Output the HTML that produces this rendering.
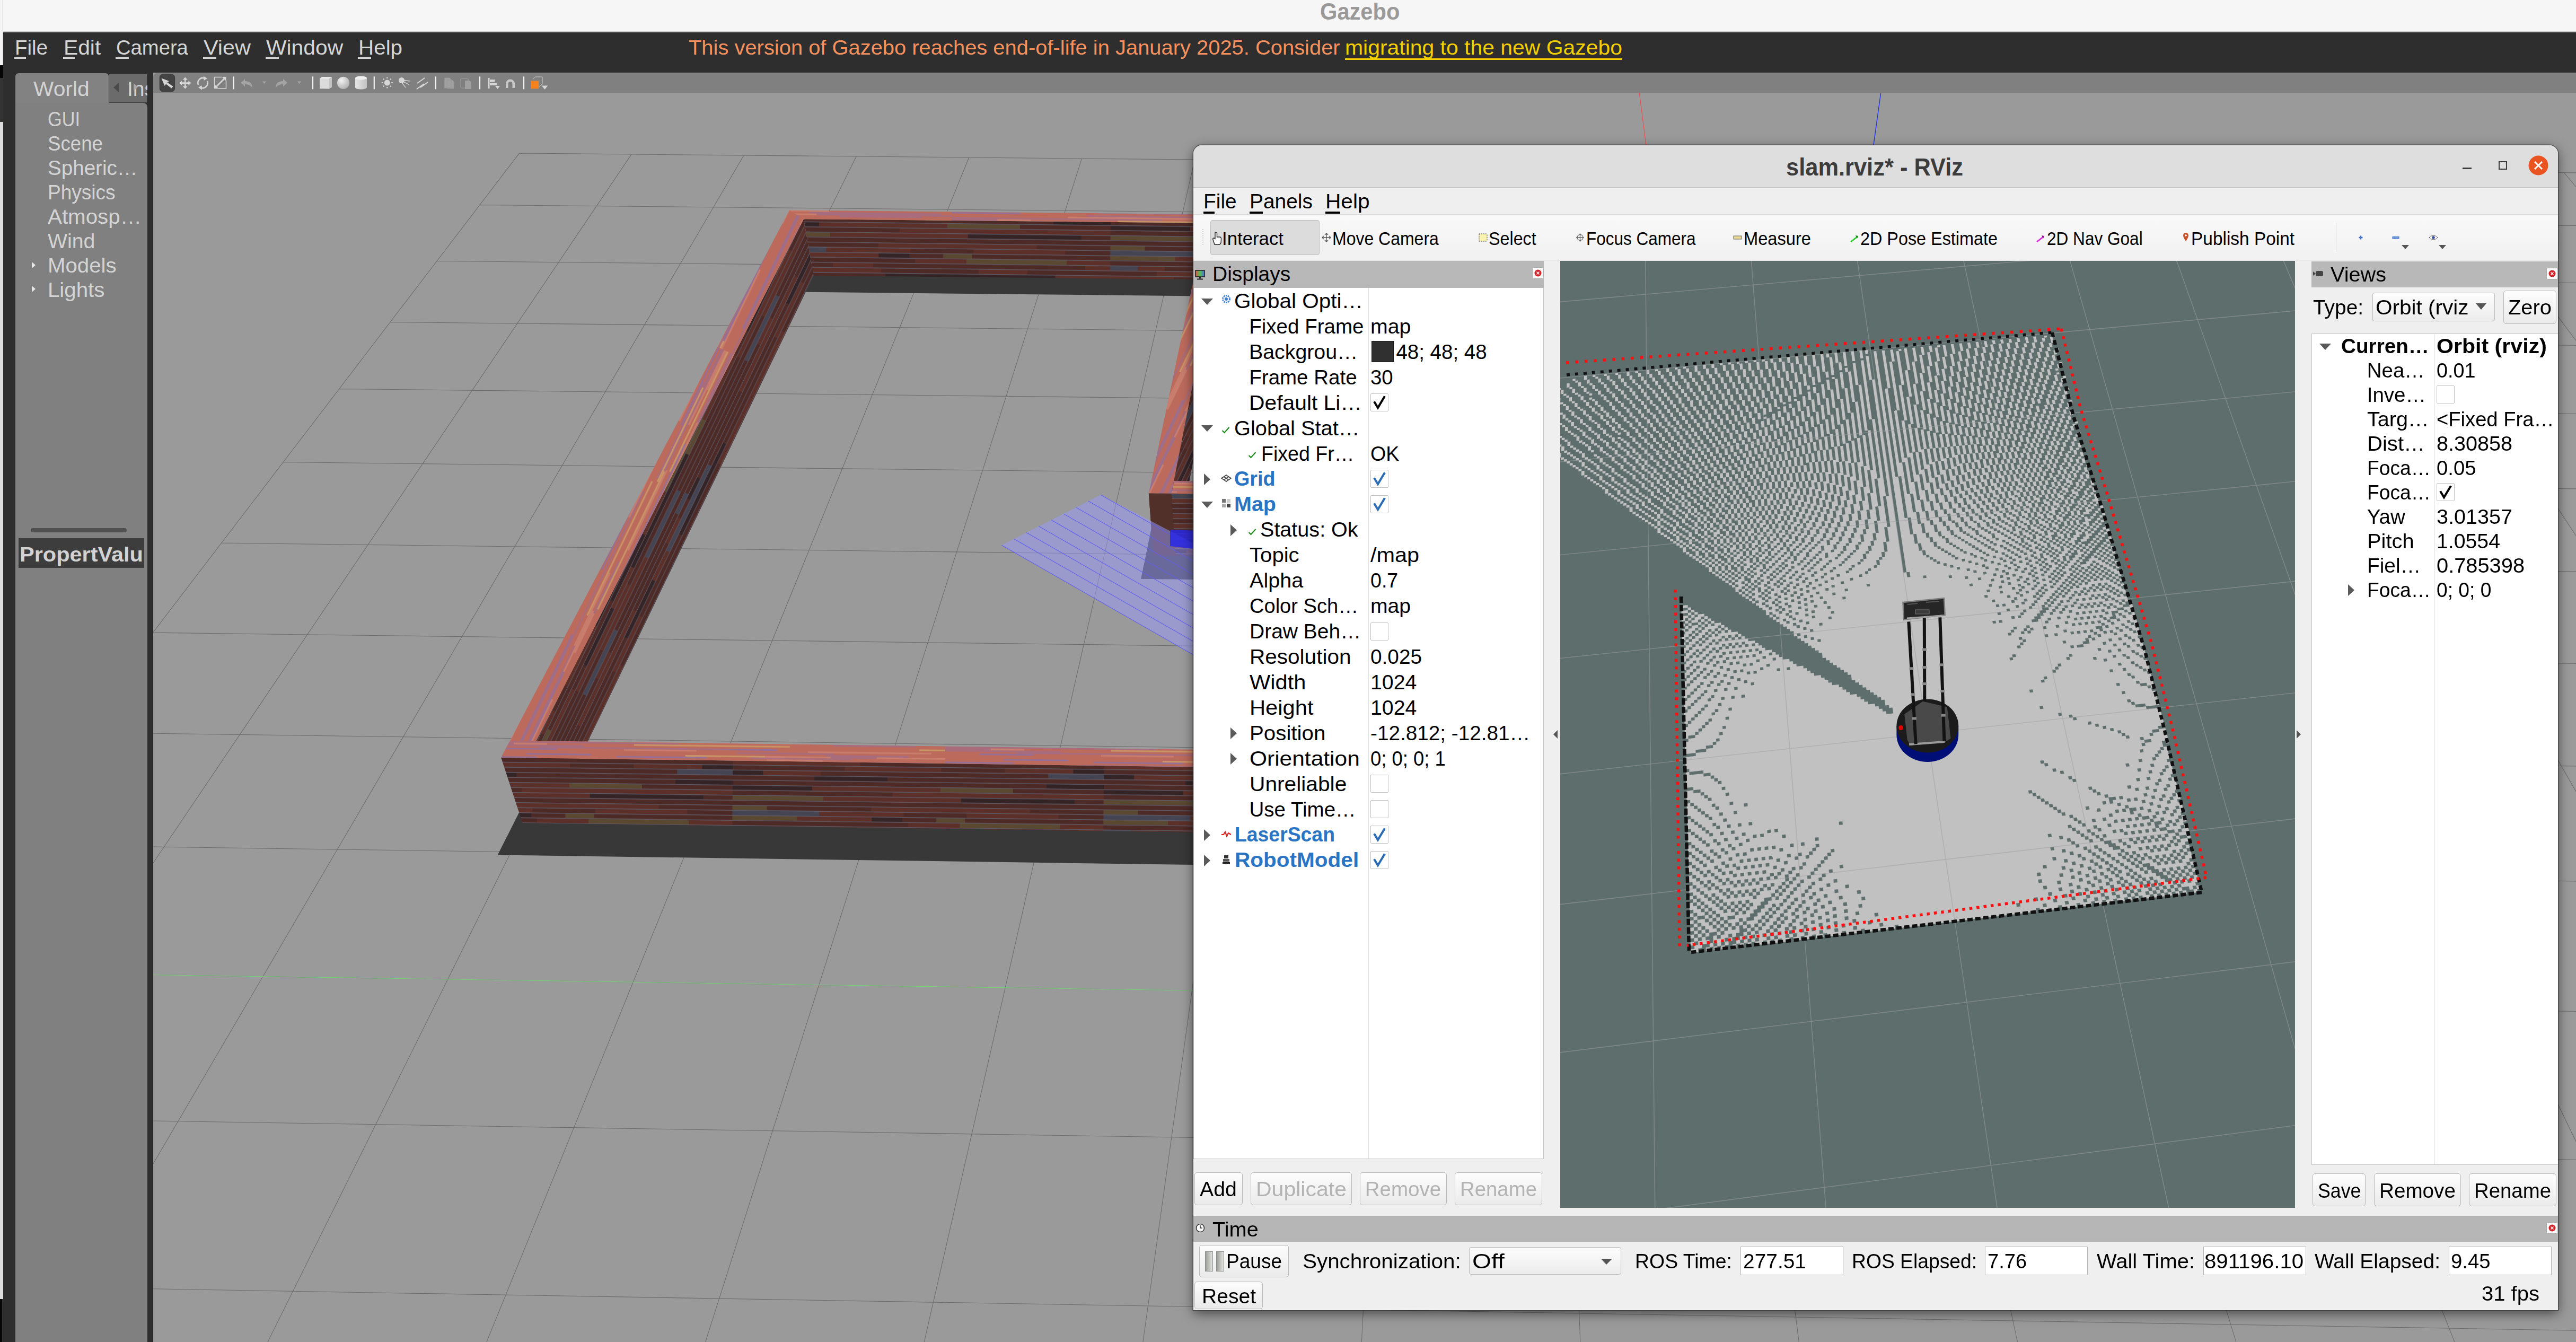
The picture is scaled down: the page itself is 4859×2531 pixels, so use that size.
<!DOCTYPE html>
<html><head><meta charset="utf-8"><title>Gazebo</title>
<style>
html,body{margin:0;padding:0;width:4859px;height:2531px;overflow:hidden;background:#9a9a9a;}
body{position:relative;font-family:"Liberation Sans",sans-serif;}
.r{position:absolute;}
.t{position:absolute;white-space:nowrap;transform-origin:0 0;}
svg.r{overflow:visible;}
</style></head><body>
<div class="r" style="left:0.0px;top:0.0px;width:4859.0px;height:59.0px;background:#f6f6f6;"></div><div class="r" style="left:0.0px;top:59.0px;width:4859.0px;height:2.0px;background:#c9c9c9;"></div><div class="t" style="left:2489.9px;top:-0.1px;font-size:44.0px;line-height:44.0px;color:#999999;font-weight:bold;transform:scaleX(0.9462);">Gazebo</div><div class="r" style="left:0.0px;top:0.0px;width:5.0px;height:123.0px;background:#f4f4f4;"></div><div class="r" style="left:5.0px;top:0.0px;width:1.0px;height:123.0px;background:#bdbdbd;"></div><div class="r" style="left:0.0px;top:123.0px;width:6.0px;height:24.0px;background:#050505;"></div><div class="r" style="left:0.0px;top:147.0px;width:6.0px;height:83.0px;background:#343432;"></div><div class="r" style="left:0.0px;top:230.0px;width:6.0px;height:2301.0px;background:#dcdcdc;"></div><div class="r" style="left:0.0px;top:2450.0px;width:5.0px;height:81.0px;background:#060606;"></div><div class="r" style="left:6.0px;top:61.0px;width:4853.0px;height:76.0px;background:#2e2e2e;"></div><div class="r" style="left:6.0px;top:137.0px;width:283.0px;height:2394.0px;background:#2e2e2e;"></div><div class="t" style="left:28.0px;top:69.5px;font-size:39.0px;line-height:39.0px;color:#d6d6d6;transform:scaleX(0.9874);">File</div><div class="r" style="left:27.0px;top:108.0px;width:22.0px;height:3.0px;background:#d6d6d6;"></div><div class="t" style="left:119.7px;top:69.5px;font-size:39.0px;line-height:39.0px;color:#d6d6d6;transform:scaleX(1.0450);">Edit</div><div class="r" style="left:118.7px;top:108.0px;width:22.0px;height:3.0px;background:#d6d6d6;"></div><div class="t" style="left:219.0px;top:69.5px;font-size:39.0px;line-height:39.0px;color:#d6d6d6;transform:scaleX(0.9795);">Camera</div><div class="r" style="left:218.0px;top:108.0px;width:25.0px;height:3.0px;background:#d6d6d6;"></div><div class="t" style="left:384.0px;top:69.5px;font-size:39.0px;line-height:39.0px;color:#d6d6d6;transform:scaleX(1.0614);">View</div><div class="r" style="left:383.0px;top:108.0px;width:25.0px;height:3.0px;background:#d6d6d6;"></div><div class="t" style="left:501.6px;top:69.5px;font-size:39.0px;line-height:39.0px;color:#d6d6d6;transform:scaleX(1.0472);">Window</div><div class="r" style="left:500.6px;top:108.0px;width:25.0px;height:3.0px;background:#d6d6d6;"></div><div class="t" style="left:676.0px;top:69.5px;font-size:39.0px;line-height:39.0px;color:#d6d6d6;transform:scaleX(1.0356);">Help</div><div class="r" style="left:675.0px;top:108.0px;width:25.0px;height:3.0px;background:#d6d6d6;"></div><div class="t" style="left:1299.0px;top:70.0px;font-size:39.0px;line-height:39.0px;color:#f7925f;transform:scaleX(1.0230);">This version of Gazebo reaches end-of-life in January 2025. Consider</div><div class="t" style="left:2537.0px;top:70.0px;font-size:39.0px;line-height:39.0px;color:#f5d000;transform:scaleX(1.0489);">migrating to the new Gazebo</div><div class="r" style="left:2537.0px;top:110.0px;width:523.0px;height:3.0px;background:#f5d000;"></div><div class="r" style="left:29px;top:137.6px;width:176px;height:60px;background:#828282;border-radius:6px 6px 0 0;"></div><div class="r" style="left:205.0px;top:139.4px;width:73.0px;height:55.1px;background:#6b6b6b;border:1px solid #3a3a3a;box-sizing:border-box;"></div><div class="r" style="left:29px;top:194px;width:249px;height:2337px;background:#808080;border-radius:0 8px 0 0;"></div><div class="t" style="left:63.3px;top:148.0px;font-size:39.0px;line-height:39.0px;color:#d4d4d4;transform:scaleX(1.0444);">World</div><svg class="r" style="left:212px;top:155px" width="14" height="20"><path d="M12 1 L2 10 L12 19 Z" fill="#4a4a4a"/></svg><div class="t" style="left:240.0px;top:148.0px;font-size:39.0px;line-height:39.0px;color:#d4d4d4;">Ins</div><svg class="r" style="left:251px;top:156px" width="10" height="16"><path d="M1 1 L9 8 L1 15 Z" fill="#a8a8a8"/></svg><div class="r" style="left:278.0px;top:137.0px;width:11.0px;height:2394.0px;background:#2e2e2e;"></div><div class="r" style="left:287.5px;top:175.0px;width:1.5px;height:2356.0px;background:#0c0c0c;"></div><div class="t" style="left:89.5px;top:204.7px;font-size:39.0px;line-height:39.0px;color:#d4d4d4;transform:scaleX(0.8787);">GUI</div><div class="t" style="left:89.5px;top:251.0px;font-size:39.0px;line-height:39.0px;color:#d4d4d4;transform:scaleX(0.9406);">Scene</div><div class="t" style="left:89.5px;top:297.0px;font-size:39.0px;line-height:39.0px;color:#d4d4d4;transform:scaleX(0.9894);">Spheric…</div><div class="t" style="left:89.5px;top:343.4px;font-size:39.0px;line-height:39.0px;color:#d4d4d4;transform:scaleX(0.9497);">Physics</div><div class="t" style="left:89.5px;top:389.0px;font-size:39.0px;line-height:39.0px;color:#d4d4d4;transform:scaleX(1.0338);">Atmosp…</div><div class="t" style="left:89.5px;top:435.3px;font-size:39.0px;line-height:39.0px;color:#d4d4d4;transform:scaleX(1.0065);">Wind</div><div class="t" style="left:89.5px;top:480.6px;font-size:39.0px;line-height:39.0px;color:#d4d4d4;transform:scaleX(1.0312);">Models</div><div class="t" style="left:89.5px;top:526.8px;font-size:39.0px;line-height:39.0px;color:#d4d4d4;transform:scaleX(1.0314);">Lights</div><svg class="r" style="left:59px;top:493px" width="9" height="14"><path d="M1 1 L8 7 L1 13 Z" fill="#e8e8e8"/></svg><svg class="r" style="left:59px;top:538px" width="9" height="14"><path d="M1 1 L8 7 L1 13 Z" fill="#e8e8e8"/></svg><div class="r" style="left:58px;top:996px;width:181px;height:8px;background:#505050;border-radius:4px;"></div><div class="r" style="left:35.0px;top:1015.0px;width:237.0px;height:56.0px;background:#3d3d3d;"></div><div class="t" style="left:37.0px;top:1026.0px;font-size:39.0px;line-height:39.0px;color:#d2d2d2;font-weight:bold;transform:scaleX(1.0640);">PropertValu</div><div class="r" style="left:289px;top:137.6px;width:4570px;height:37px;background:#808080;border-radius:8px 0 0 0;border-bottom:1.5px solid #262626;"></div>
<svg class="r" style="left:0;top:0" width="4859" height="2531" viewBox="0 0 4859 2531"><defs><clipPath id="gv"><rect x="289" y="175" width="4570" height="2356"/></clipPath><pattern id="brickH" patternUnits="userSpaceOnUse" width="700" height="152.00" patternTransform="rotate(0.70)"><rect width="700" height="152.00" fill="#4e2a26"/><rect x="0" y="0.00" width="122" height="9.50" fill="#5a4830"/><rect x="122" y="0.00" width="141" height="9.50" fill="#5c3028"/><rect x="263" y="0.00" width="58" height="9.50" fill="#352426"/><rect x="321" y="0.00" width="64" height="9.50" fill="#4e2a26"/><rect x="385" y="0.00" width="54" height="9.50" fill="#5a4830"/><rect x="439" y="0.00" width="94" height="9.50" fill="#4e2a26"/><rect x="533" y="0.00" width="151" height="9.50" fill="#4e2a26"/><rect x="684" y="0.00" width="16" height="9.50" fill="#4e2a26"/><rect x="0" y="0.00" width="700" height="1.40" fill="#5e5a66"/><rect x="0" y="9.50" width="148" height="9.50" fill="#4e2a26"/><rect x="148" y="9.50" width="184" height="9.50" fill="#4e2a26"/><rect x="332" y="9.50" width="97" height="9.50" fill="#5c3028"/><rect x="429" y="9.50" width="189" height="9.50" fill="#5a4830"/><rect x="618" y="9.50" width="82" height="9.50" fill="#5c3028"/><rect x="0" y="9.50" width="700" height="1.40" fill="#5e5a66"/><rect x="0" y="19.00" width="52" height="9.50" fill="#444452"/><rect x="52" y="19.00" width="51" height="9.50" fill="#5c3028"/><rect x="103" y="19.00" width="74" height="9.50" fill="#4e2a26"/><rect x="177" y="19.00" width="76" height="9.50" fill="#5c3028"/><rect x="253" y="19.00" width="186" height="9.50" fill="#4e2a26"/><rect x="439" y="19.00" width="214" height="9.50" fill="#4e2a26"/><rect x="653" y="19.00" width="47" height="9.50" fill="#5c3028"/><rect x="0" y="19.00" width="700" height="1.40" fill="#5e5a66"/><rect x="0" y="28.50" width="88" height="9.50" fill="#4e2a26"/><rect x="88" y="28.50" width="180" height="9.50" fill="#5c3028"/><rect x="268" y="28.50" width="184" height="9.50" fill="#4e2a26"/><rect x="452" y="28.50" width="92" height="9.50" fill="#5c3028"/><rect x="544" y="28.50" width="156" height="9.50" fill="#4e2a26"/><rect x="0" y="28.50" width="700" height="1.40" fill="#5e5a66"/><rect x="0" y="38.00" width="120" height="9.50" fill="#5c3028"/><rect x="120" y="38.00" width="156" height="9.50" fill="#4e2a26"/><rect x="276" y="38.00" width="103" height="9.50" fill="#352426"/><rect x="379" y="38.00" width="218" height="9.50" fill="#352426"/><rect x="597" y="38.00" width="60" height="9.50" fill="#5c3028"/><rect x="657" y="38.00" width="43" height="9.50" fill="#5c3028"/><rect x="0" y="38.00" width="700" height="1.40" fill="#5e5a66"/><rect x="0" y="47.50" width="127" height="9.50" fill="#5c3028"/><rect x="127" y="47.50" width="113" height="9.50" fill="#5c3028"/><rect x="240" y="47.50" width="58" height="9.50" fill="#4e2a26"/><rect x="298" y="47.50" width="147" height="9.50" fill="#4e2a26"/><rect x="445" y="47.50" width="127" height="9.50" fill="#4e2a26"/><rect x="572" y="47.50" width="128" height="9.50" fill="#4e2a26"/><rect x="0" y="47.50" width="700" height="1.40" fill="#5e5a66"/><rect x="0" y="57.00" width="211" height="9.50" fill="#4e2a26"/><rect x="211" y="57.00" width="182" height="9.50" fill="#5c3028"/><rect x="393" y="57.00" width="120" height="9.50" fill="#4e2a26"/><rect x="513" y="57.00" width="129" height="9.50" fill="#5c3028"/><rect x="642" y="57.00" width="58" height="9.50" fill="#352426"/><rect x="0" y="57.00" width="700" height="1.40" fill="#5e5a66"/><rect x="0" y="66.50" width="57" height="9.50" fill="#352426"/><rect x="57" y="66.50" width="109" height="9.50" fill="#5c3028"/><rect x="166" y="66.50" width="210" height="9.50" fill="#4e2a26"/><rect x="376" y="66.50" width="219" height="9.50" fill="#4e2a26"/><rect x="595" y="66.50" width="105" height="9.50" fill="#444452"/><rect x="0" y="66.50" width="700" height="1.40" fill="#5e5a66"/><rect x="0" y="76.00" width="154" height="9.50" fill="#4e2a26"/><rect x="154" y="76.00" width="138" height="9.50" fill="#352426"/><rect x="292" y="76.00" width="128" height="9.50" fill="#4e2a26"/><rect x="420" y="76.00" width="158" height="9.50" fill="#4e2a26"/><rect x="578" y="76.00" width="122" height="9.50" fill="#4e2a26"/><rect x="0" y="76.00" width="700" height="1.40" fill="#5e5a66"/><rect x="0" y="85.50" width="55" height="9.50" fill="#4e2a26"/><rect x="55" y="85.50" width="113" height="9.50" fill="#4e2a26"/><rect x="168" y="85.50" width="103" height="9.50" fill="#4e2a26"/><rect x="271" y="85.50" width="167" height="9.50" fill="#4e2a26"/><rect x="438" y="85.50" width="154" height="9.50" fill="#4e2a26"/><rect x="592" y="85.50" width="108" height="9.50" fill="#352426"/><rect x="0" y="85.50" width="700" height="1.40" fill="#5e5a66"/><rect x="0" y="95.00" width="150" height="9.50" fill="#352426"/><rect x="150" y="95.00" width="111" height="9.50" fill="#5c3028"/><rect x="261" y="95.00" width="131" height="9.50" fill="#5c3028"/><rect x="392" y="95.00" width="137" height="9.50" fill="#5a4830"/><rect x="529" y="95.00" width="78" height="9.50" fill="#4e2a26"/><rect x="607" y="95.00" width="78" height="9.50" fill="#4e2a26"/><rect x="685" y="95.00" width="15" height="9.50" fill="#4e2a26"/><rect x="0" y="95.00" width="700" height="1.40" fill="#5e5a66"/><rect x="0" y="104.50" width="190" height="9.50" fill="#4e2a26"/><rect x="190" y="104.50" width="112" height="9.50" fill="#4e2a26"/><rect x="302" y="104.50" width="147" height="9.50" fill="#5c3028"/><rect x="449" y="104.50" width="196" height="9.50" fill="#5c3028"/><rect x="645" y="104.50" width="55" height="9.50" fill="#5c3028"/><rect x="0" y="104.50" width="700" height="1.40" fill="#5e5a66"/><rect x="0" y="114.00" width="171" height="9.50" fill="#5a4830"/><rect x="171" y="114.00" width="207" height="9.50" fill="#5c3028"/><rect x="378" y="114.00" width="53" height="9.50" fill="#5c3028"/><rect x="431" y="114.00" width="214" height="9.50" fill="#352426"/><rect x="645" y="114.00" width="55" height="9.50" fill="#4e2a26"/><rect x="0" y="114.00" width="700" height="1.40" fill="#5e5a66"/><rect x="0" y="123.50" width="140" height="9.50" fill="#4e2a26"/><rect x="140" y="123.50" width="202" height="9.50" fill="#4e2a26"/><rect x="342" y="123.50" width="88" height="9.50" fill="#4e2a26"/><rect x="430" y="123.50" width="93" height="9.50" fill="#4e2a26"/><rect x="523" y="123.50" width="68" height="9.50" fill="#4e2a26"/><rect x="591" y="123.50" width="53" height="9.50" fill="#4e2a26"/><rect x="644" y="123.50" width="56" height="9.50" fill="#4e2a26"/><rect x="0" y="123.50" width="700" height="1.40" fill="#5e5a66"/><rect x="0" y="133.00" width="65" height="9.50" fill="#5a4830"/><rect x="65" y="133.00" width="197" height="9.50" fill="#4e2a26"/><rect x="262" y="133.00" width="93" height="9.50" fill="#5c3028"/><rect x="355" y="133.00" width="78" height="9.50" fill="#5c3028"/><rect x="433" y="133.00" width="128" height="9.50" fill="#5c3028"/><rect x="561" y="133.00" width="139" height="9.50" fill="#4e2a26"/><rect x="0" y="133.00" width="700" height="1.40" fill="#5e5a66"/><rect x="0" y="142.50" width="164" height="9.50" fill="#444452"/><rect x="164" y="142.50" width="159" height="9.50" fill="#5c3028"/><rect x="323" y="142.50" width="119" height="9.50" fill="#4e2a26"/><rect x="442" y="142.50" width="66" height="9.50" fill="#5c3028"/><rect x="508" y="142.50" width="107" height="9.50" fill="#5c3028"/><rect x="615" y="142.50" width="85" height="9.50" fill="#4e2a26"/><rect x="0" y="142.50" width="700" height="1.40" fill="#5e5a66"/></pattern><pattern id="brickL" patternUnits="userSpaceOnUse" width="700" height="124.80" patternTransform="rotate(115.80)"><rect width="700" height="124.80" fill="#4e2a26"/><rect x="0" y="0.00" width="155" height="7.80" fill="#352426"/><rect x="155" y="0.00" width="159" height="7.80" fill="#4e2a26"/><rect x="314" y="0.00" width="190" height="7.80" fill="#4e2a26"/><rect x="504" y="0.00" width="171" height="7.80" fill="#5c3028"/><rect x="675" y="0.00" width="25" height="7.80" fill="#352426"/><rect x="0" y="0.00" width="700" height="1.20" fill="#585462"/><rect x="0" y="7.80" width="64" height="7.80" fill="#4e2a26"/><rect x="64" y="7.80" width="76" height="7.80" fill="#4e2a26"/><rect x="140" y="7.80" width="217" height="7.80" fill="#5c3028"/><rect x="357" y="7.80" width="192" height="7.80" fill="#444452"/><rect x="549" y="7.80" width="151" height="7.80" fill="#5c3028"/><rect x="0" y="7.80" width="700" height="1.20" fill="#585462"/><rect x="0" y="15.60" width="197" height="7.80" fill="#5c3028"/><rect x="197" y="15.60" width="199" height="7.80" fill="#4e2a26"/><rect x="396" y="15.60" width="175" height="7.80" fill="#4e2a26"/><rect x="571" y="15.60" width="49" height="7.80" fill="#4e2a26"/><rect x="620" y="15.60" width="80" height="7.80" fill="#5c3028"/><rect x="0" y="15.60" width="700" height="1.20" fill="#585462"/><rect x="0" y="23.40" width="158" height="7.80" fill="#4e2a26"/><rect x="158" y="23.40" width="191" height="7.80" fill="#352426"/><rect x="349" y="23.40" width="172" height="7.80" fill="#4e2a26"/><rect x="521" y="23.40" width="115" height="7.80" fill="#5c3028"/><rect x="636" y="23.40" width="64" height="7.80" fill="#4e2a26"/><rect x="0" y="23.40" width="700" height="1.20" fill="#585462"/><rect x="0" y="31.20" width="207" height="7.80" fill="#4e2a26"/><rect x="207" y="31.20" width="181" height="7.80" fill="#444452"/><rect x="388" y="31.20" width="61" height="7.80" fill="#5c3028"/><rect x="449" y="31.20" width="120" height="7.80" fill="#352426"/><rect x="569" y="31.20" width="131" height="7.80" fill="#4e2a26"/><rect x="0" y="31.20" width="700" height="1.20" fill="#585462"/><rect x="0" y="39.00" width="57" height="7.80" fill="#5c3028"/><rect x="57" y="39.00" width="67" height="7.80" fill="#4e2a26"/><rect x="124" y="39.00" width="114" height="7.80" fill="#4e2a26"/><rect x="238" y="39.00" width="44" height="7.80" fill="#352426"/><rect x="282" y="39.00" width="40" height="7.80" fill="#4e2a26"/><rect x="322" y="39.00" width="53" height="7.80" fill="#5c3028"/><rect x="375" y="39.00" width="141" height="7.80" fill="#4e2a26"/><rect x="516" y="39.00" width="184" height="7.80" fill="#5c3028"/><rect x="0" y="39.00" width="700" height="1.20" fill="#585462"/><rect x="0" y="46.80" width="212" height="7.80" fill="#4e2a26"/><rect x="212" y="46.80" width="62" height="7.80" fill="#4e2a26"/><rect x="274" y="46.80" width="43" height="7.80" fill="#444452"/><rect x="317" y="46.80" width="70" height="7.80" fill="#4e2a26"/><rect x="387" y="46.80" width="220" height="7.80" fill="#4e2a26"/><rect x="607" y="46.80" width="55" height="7.80" fill="#5c3028"/><rect x="662" y="46.80" width="38" height="7.80" fill="#4e2a26"/><rect x="0" y="46.80" width="700" height="1.20" fill="#585462"/><rect x="0" y="54.60" width="183" height="7.80" fill="#4e2a26"/><rect x="183" y="54.60" width="170" height="7.80" fill="#4e2a26"/><rect x="353" y="54.60" width="73" height="7.80" fill="#4e2a26"/><rect x="426" y="54.60" width="138" height="7.80" fill="#4e2a26"/><rect x="564" y="54.60" width="136" height="7.80" fill="#444452"/><rect x="0" y="54.60" width="700" height="1.20" fill="#585462"/><rect x="0" y="62.40" width="40" height="7.80" fill="#4e2a26"/><rect x="40" y="62.40" width="191" height="7.80" fill="#4e2a26"/><rect x="231" y="62.40" width="45" height="7.80" fill="#4e2a26"/><rect x="276" y="62.40" width="140" height="7.80" fill="#444452"/><rect x="416" y="62.40" width="194" height="7.80" fill="#5c3028"/><rect x="610" y="62.40" width="65" height="7.80" fill="#4e2a26"/><rect x="675" y="62.40" width="25" height="7.80" fill="#4e2a26"/><rect x="0" y="62.40" width="700" height="1.20" fill="#585462"/><rect x="0" y="70.20" width="106" height="7.80" fill="#4e2a26"/><rect x="106" y="70.20" width="196" height="7.80" fill="#4e2a26"/><rect x="302" y="70.20" width="115" height="7.80" fill="#4e2a26"/><rect x="417" y="70.20" width="59" height="7.80" fill="#4e2a26"/><rect x="476" y="70.20" width="189" height="7.80" fill="#5c3028"/><rect x="665" y="70.20" width="35" height="7.80" fill="#5c3028"/><rect x="0" y="70.20" width="700" height="1.20" fill="#585462"/><rect x="0" y="78.00" width="135" height="7.80" fill="#5c3028"/><rect x="135" y="78.00" width="72" height="7.80" fill="#5a4830"/><rect x="207" y="78.00" width="163" height="7.80" fill="#352426"/><rect x="370" y="78.00" width="74" height="7.80" fill="#352426"/><rect x="444" y="78.00" width="86" height="7.80" fill="#5c3028"/><rect x="530" y="78.00" width="119" height="7.80" fill="#352426"/><rect x="649" y="78.00" width="51" height="7.80" fill="#4e2a26"/><rect x="0" y="78.00" width="700" height="1.20" fill="#585462"/><rect x="0" y="85.80" width="88" height="7.80" fill="#4e2a26"/><rect x="88" y="85.80" width="201" height="7.80" fill="#5a4830"/><rect x="289" y="85.80" width="90" height="7.80" fill="#5c3028"/><rect x="379" y="85.80" width="139" height="7.80" fill="#352426"/><rect x="518" y="85.80" width="182" height="7.80" fill="#4e2a26"/><rect x="0" y="85.80" width="700" height="1.20" fill="#585462"/><rect x="0" y="93.60" width="52" height="7.80" fill="#4e2a26"/><rect x="52" y="93.60" width="49" height="7.80" fill="#5c3028"/><rect x="101" y="93.60" width="105" height="7.80" fill="#4e2a26"/><rect x="206" y="93.60" width="220" height="7.80" fill="#4e2a26"/><rect x="426" y="93.60" width="147" height="7.80" fill="#352426"/><rect x="573" y="93.60" width="127" height="7.80" fill="#5c3028"/><rect x="0" y="93.60" width="700" height="1.20" fill="#585462"/><rect x="0" y="101.40" width="173" height="7.80" fill="#4e2a26"/><rect x="173" y="101.40" width="57" height="7.80" fill="#4e2a26"/><rect x="230" y="101.40" width="162" height="7.80" fill="#5c3028"/><rect x="392" y="101.40" width="197" height="7.80" fill="#5c3028"/><rect x="589" y="101.40" width="111" height="7.80" fill="#4e2a26"/><rect x="0" y="101.40" width="700" height="1.20" fill="#585462"/><rect x="0" y="109.20" width="92" height="7.80" fill="#5c3028"/><rect x="92" y="109.20" width="57" height="7.80" fill="#4e2a26"/><rect x="149" y="109.20" width="154" height="7.80" fill="#4e2a26"/><rect x="303" y="109.20" width="51" height="7.80" fill="#4e2a26"/><rect x="354" y="109.20" width="134" height="7.80" fill="#5c3028"/><rect x="488" y="109.20" width="73" height="7.80" fill="#4e2a26"/><rect x="561" y="109.20" width="75" height="7.80" fill="#352426"/><rect x="636" y="109.20" width="64" height="7.80" fill="#5c3028"/><rect x="0" y="109.20" width="700" height="1.20" fill="#585462"/><rect x="0" y="117.00" width="216" height="7.80" fill="#5c3028"/><rect x="216" y="117.00" width="75" height="7.80" fill="#5c3028"/><rect x="291" y="117.00" width="44" height="7.80" fill="#5c3028"/><rect x="335" y="117.00" width="131" height="7.80" fill="#5c3028"/><rect x="466" y="117.00" width="48" height="7.80" fill="#4e2a26"/><rect x="514" y="117.00" width="186" height="7.80" fill="#4e2a26"/><rect x="0" y="117.00" width="700" height="1.20" fill="#585462"/></pattern><pattern id="topg" patternUnits="userSpaceOnUse" width="900" height="38.40" patternTransform="rotate(0.70)"><rect width="900" height="38.40" fill="#bc6a5c"/><rect x="0" y="0.00" width="219" height="3.20" fill="#bc6a5c" opacity="0.85"/><rect x="219" y="0.00" width="151" height="3.20" fill="#cc8070" opacity="0.85"/><rect x="370" y="0.00" width="275" height="3.20" fill="#cc8070" opacity="0.85"/><rect x="645" y="0.00" width="255" height="3.20" fill="#a46c84" opacity="0.85"/><rect x="0" y="3.20" width="275" height="3.20" fill="#a46c84" opacity="0.85"/><rect x="275" y="3.20" width="123" height="3.20" fill="#a46c84" opacity="0.85"/><rect x="398" y="3.20" width="290" height="3.20" fill="#bc6a5c" opacity="0.85"/><rect x="688" y="3.20" width="155" height="3.20" fill="#a46c84" opacity="0.85"/><rect x="843" y="3.20" width="57" height="3.20" fill="#bc6a5c" opacity="0.85"/><rect x="0" y="6.40" width="86" height="3.20" fill="#a46c84" opacity="0.85"/><rect x="86" y="6.40" width="63" height="3.20" fill="#cc8070" opacity="0.85"/><rect x="149" y="6.40" width="164" height="3.20" fill="#bc6a5c" opacity="0.85"/><rect x="313" y="6.40" width="294" height="3.20" fill="#cc9c68" opacity="0.85"/><rect x="607" y="6.40" width="159" height="3.20" fill="#bc6a5c" opacity="0.85"/><rect x="766" y="6.40" width="134" height="3.20" fill="#bc6a5c" opacity="0.85"/><rect x="0" y="9.60" width="218" height="3.20" fill="#a46c84" opacity="0.85"/><rect x="218" y="9.60" width="92" height="3.20" fill="#bc6a5c" opacity="0.85"/><rect x="310" y="9.60" width="283" height="3.20" fill="#bc6a5c" opacity="0.85"/><rect x="593" y="9.60" width="258" height="3.20" fill="#bc6a5c" opacity="0.85"/><rect x="851" y="9.60" width="49" height="3.20" fill="#cc9c68" opacity="0.85"/><rect x="0" y="12.80" width="134" height="3.20" fill="#bc6a5c" opacity="0.85"/><rect x="134" y="12.80" width="110" height="3.20" fill="#a46c84" opacity="0.85"/><rect x="244" y="12.80" width="233" height="3.20" fill="#a46c84" opacity="0.85"/><rect x="477" y="12.80" width="106" height="3.20" fill="#9070a0" opacity="0.85"/><rect x="583" y="12.80" width="236" height="3.20" fill="#bc6a5c" opacity="0.85"/><rect x="819" y="12.80" width="81" height="3.20" fill="#bc6a5c" opacity="0.85"/><rect x="0" y="16.00" width="65" height="3.20" fill="#bc6a5c" opacity="0.85"/><rect x="65" y="16.00" width="102" height="3.20" fill="#9070a0" opacity="0.85"/><rect x="167" y="16.00" width="127" height="3.20" fill="#bc6a5c" opacity="0.85"/><rect x="294" y="16.00" width="137" height="3.20" fill="#cc8070" opacity="0.85"/><rect x="431" y="16.00" width="210" height="3.20" fill="#bc6a5c" opacity="0.85"/><rect x="641" y="16.00" width="233" height="3.20" fill="#cc8070" opacity="0.85"/><rect x="874" y="16.00" width="26" height="3.20" fill="#bc6a5c" opacity="0.85"/><rect x="0" y="19.20" width="269" height="3.20" fill="#bc6a5c" opacity="0.85"/><rect x="269" y="19.20" width="238" height="3.20" fill="#bc6a5c" opacity="0.85"/><rect x="507" y="19.20" width="183" height="3.20" fill="#a46c84" opacity="0.85"/><rect x="690" y="19.20" width="105" height="3.20" fill="#bc6a5c" opacity="0.85"/><rect x="795" y="19.20" width="105" height="3.20" fill="#bc6a5c" opacity="0.85"/><rect x="0" y="22.40" width="251" height="3.20" fill="#bc6a5c" opacity="0.85"/><rect x="251" y="22.40" width="163" height="3.20" fill="#bc6a5c" opacity="0.85"/><rect x="414" y="22.40" width="261" height="3.20" fill="#bc6a5c" opacity="0.85"/><rect x="675" y="22.40" width="156" height="3.20" fill="#a46c84" opacity="0.85"/><rect x="831" y="22.40" width="62" height="3.20" fill="#bc6a5c" opacity="0.85"/><rect x="893" y="22.40" width="7" height="3.20" fill="#bc6a5c" opacity="0.85"/><rect x="0" y="25.60" width="110" height="3.20" fill="#bc6a5c" opacity="0.85"/><rect x="110" y="25.60" width="122" height="3.20" fill="#9070a0" opacity="0.85"/><rect x="232" y="25.60" width="178" height="3.20" fill="#bc6a5c" opacity="0.85"/><rect x="410" y="25.60" width="150" height="3.20" fill="#cc9c68" opacity="0.85"/><rect x="560" y="25.60" width="124" height="3.20" fill="#cc8070" opacity="0.85"/><rect x="684" y="25.60" width="87" height="3.20" fill="#a46c84" opacity="0.85"/><rect x="771" y="25.60" width="129" height="3.20" fill="#cc8070" opacity="0.85"/><rect x="0" y="28.80" width="280" height="3.20" fill="#bc6a5c" opacity="0.85"/><rect x="280" y="28.80" width="170" height="3.20" fill="#9070a0" opacity="0.85"/><rect x="450" y="28.80" width="83" height="3.20" fill="#bc6a5c" opacity="0.85"/><rect x="533" y="28.80" width="191" height="3.20" fill="#a46c84" opacity="0.85"/><rect x="724" y="28.80" width="176" height="3.20" fill="#bc6a5c" opacity="0.85"/><rect x="0" y="32.00" width="130" height="3.20" fill="#9070a0" opacity="0.85"/><rect x="130" y="32.00" width="199" height="3.20" fill="#bc6a5c" opacity="0.85"/><rect x="329" y="32.00" width="235" height="3.20" fill="#bc6a5c" opacity="0.85"/><rect x="564" y="32.00" width="105" height="3.20" fill="#cc8070" opacity="0.85"/><rect x="669" y="32.00" width="220" height="3.20" fill="#bc6a5c" opacity="0.85"/><rect x="889" y="32.00" width="11" height="3.20" fill="#bc6a5c" opacity="0.85"/><rect x="0" y="35.20" width="183" height="3.20" fill="#bc6a5c" opacity="0.85"/><rect x="183" y="35.20" width="72" height="3.20" fill="#bc6a5c" opacity="0.85"/><rect x="255" y="35.20" width="213" height="3.20" fill="#a46c84" opacity="0.85"/><rect x="468" y="35.20" width="163" height="3.20" fill="#bc6a5c" opacity="0.85"/><rect x="631" y="35.20" width="249" height="3.20" fill="#a46c84" opacity="0.85"/><rect x="880" y="35.20" width="20" height="3.20" fill="#bc6a5c" opacity="0.85"/></pattern><pattern id="topl" patternUnits="userSpaceOnUse" width="900" height="38.40" patternTransform="rotate(115.80)"><rect width="900" height="38.40" fill="#bc6a5c"/><rect x="0" y="0.00" width="178" height="3.20" fill="#a46c84" opacity="0.85"/><rect x="178" y="0.00" width="128" height="3.20" fill="#bc6a5c" opacity="0.85"/><rect x="306" y="0.00" width="281" height="3.20" fill="#a46c84" opacity="0.85"/><rect x="587" y="0.00" width="146" height="3.20" fill="#a46c84" opacity="0.85"/><rect x="733" y="0.00" width="167" height="3.20" fill="#a46c84" opacity="0.85"/><rect x="0" y="3.20" width="145" height="3.20" fill="#a46c84" opacity="0.85"/><rect x="145" y="3.20" width="217" height="3.20" fill="#cc8070" opacity="0.85"/><rect x="362" y="3.20" width="246" height="3.20" fill="#bc6a5c" opacity="0.85"/><rect x="608" y="3.20" width="240" height="3.20" fill="#9070a0" opacity="0.85"/><rect x="848" y="3.20" width="52" height="3.20" fill="#bc6a5c" opacity="0.85"/><rect x="0" y="6.40" width="103" height="3.20" fill="#bc6a5c" opacity="0.85"/><rect x="103" y="6.40" width="88" height="3.20" fill="#bc6a5c" opacity="0.85"/><rect x="191" y="6.40" width="283" height="3.20" fill="#9070a0" opacity="0.85"/><rect x="474" y="6.40" width="211" height="3.20" fill="#bc6a5c" opacity="0.85"/><rect x="685" y="6.40" width="215" height="3.20" fill="#bc6a5c" opacity="0.85"/><rect x="0" y="9.60" width="251" height="3.20" fill="#cc9c68" opacity="0.85"/><rect x="251" y="9.60" width="295" height="3.20" fill="#bc6a5c" opacity="0.85"/><rect x="546" y="9.60" width="232" height="3.20" fill="#bc6a5c" opacity="0.85"/><rect x="778" y="9.60" width="122" height="3.20" fill="#bc6a5c" opacity="0.85"/><rect x="0" y="12.80" width="82" height="3.20" fill="#cc8070" opacity="0.85"/><rect x="82" y="12.80" width="293" height="3.20" fill="#bc6a5c" opacity="0.85"/><rect x="375" y="12.80" width="131" height="3.20" fill="#bc6a5c" opacity="0.85"/><rect x="506" y="12.80" width="71" height="3.20" fill="#bc6a5c" opacity="0.85"/><rect x="577" y="12.80" width="286" height="3.20" fill="#bc6a5c" opacity="0.85"/><rect x="863" y="12.80" width="37" height="3.20" fill="#bc6a5c" opacity="0.85"/><rect x="0" y="16.00" width="156" height="3.20" fill="#cc8070" opacity="0.85"/><rect x="156" y="16.00" width="95" height="3.20" fill="#bc6a5c" opacity="0.85"/><rect x="251" y="16.00" width="168" height="3.20" fill="#cc8070" opacity="0.85"/><rect x="419" y="16.00" width="277" height="3.20" fill="#bc6a5c" opacity="0.85"/><rect x="696" y="16.00" width="204" height="3.20" fill="#bc6a5c" opacity="0.85"/><rect x="0" y="19.20" width="255" height="3.20" fill="#a46c84" opacity="0.85"/><rect x="255" y="19.20" width="289" height="3.20" fill="#cc9c68" opacity="0.85"/><rect x="544" y="19.20" width="144" height="3.20" fill="#bc6a5c" opacity="0.85"/><rect x="688" y="19.20" width="81" height="3.20" fill="#bc6a5c" opacity="0.85"/><rect x="769" y="19.20" width="131" height="3.20" fill="#bc6a5c" opacity="0.85"/><rect x="0" y="22.40" width="81" height="3.20" fill="#a46c84" opacity="0.85"/><rect x="81" y="22.40" width="197" height="3.20" fill="#cc9c68" opacity="0.85"/><rect x="278" y="22.40" width="167" height="3.20" fill="#bc6a5c" opacity="0.85"/><rect x="445" y="22.40" width="109" height="3.20" fill="#a46c84" opacity="0.85"/><rect x="554" y="22.40" width="83" height="3.20" fill="#cc8070" opacity="0.85"/><rect x="637" y="22.40" width="97" height="3.20" fill="#bc6a5c" opacity="0.85"/><rect x="734" y="22.40" width="166" height="3.20" fill="#cc8070" opacity="0.85"/><rect x="0" y="25.60" width="70" height="3.20" fill="#bc6a5c" opacity="0.85"/><rect x="70" y="25.60" width="202" height="3.20" fill="#a46c84" opacity="0.85"/><rect x="272" y="25.60" width="278" height="3.20" fill="#bc6a5c" opacity="0.85"/><rect x="550" y="25.60" width="128" height="3.20" fill="#cc8070" opacity="0.85"/><rect x="678" y="25.60" width="207" height="3.20" fill="#9070a0" opacity="0.85"/><rect x="885" y="25.60" width="15" height="3.20" fill="#cc9c68" opacity="0.85"/><rect x="0" y="28.80" width="163" height="3.20" fill="#9070a0" opacity="0.85"/><rect x="163" y="28.80" width="120" height="3.20" fill="#bc6a5c" opacity="0.85"/><rect x="283" y="28.80" width="189" height="3.20" fill="#bc6a5c" opacity="0.85"/><rect x="472" y="28.80" width="153" height="3.20" fill="#cc8070" opacity="0.85"/><rect x="625" y="28.80" width="193" height="3.20" fill="#a46c84" opacity="0.85"/><rect x="818" y="28.80" width="82" height="3.20" fill="#a46c84" opacity="0.85"/><rect x="0" y="32.00" width="282" height="3.20" fill="#bc6a5c" opacity="0.85"/><rect x="282" y="32.00" width="281" height="3.20" fill="#cc9c68" opacity="0.85"/><rect x="563" y="32.00" width="153" height="3.20" fill="#bc6a5c" opacity="0.85"/><rect x="716" y="32.00" width="162" height="3.20" fill="#bc6a5c" opacity="0.85"/><rect x="878" y="32.00" width="22" height="3.20" fill="#cc8070" opacity="0.85"/><rect x="0" y="35.20" width="157" height="3.20" fill="#cc8070" opacity="0.85"/><rect x="157" y="35.20" width="144" height="3.20" fill="#bc6a5c" opacity="0.85"/><rect x="301" y="35.20" width="88" height="3.20" fill="#bc6a5c" opacity="0.85"/><rect x="389" y="35.20" width="173" height="3.20" fill="#bc6a5c" opacity="0.85"/><rect x="562" y="35.20" width="268" height="3.20" fill="#bc6a5c" opacity="0.85"/><rect x="830" y="35.20" width="70" height="3.20" fill="#bc6a5c" opacity="0.85"/></pattern></defs><g clip-path="url(#gv)"><rect x="289" y="175" width="4570" height="2356" fill="#9a9a9a"/><path d="M979.6 288.9L5271.6 329.8M905.1 386.4L5374.2 430.6M824.3 492.2L5485.6 540.0M736.2 607.4L5607.2 659.4M639.9 733.4L5740.3 790.1M534.3 871.6L5886.6 933.8M417.7 1024.1L6048.3 1092.6M288.6 1193.1L6227.9 1269.0M144.6 1381.4L6428.5 1466.0M-16.8 1592.7L6654.0 1687.5M-199.2 1831.2L6909.5 1938.4M-406.7 2102.8L7201.2 2224.9M-645.1 2414.7L7537.6 2555.3M-921.7 2776.6L7929.7 2940.4M-1246.7 3201.7L8392.6 3394.9M-1633.7 3708.1L8947.3 3939.8M-2102.6 4321.6L9624.3 4604.6M-2682.3 5080.1L10468.9 5434.1M-3417.5 6041.9L11552.1 6497.9M-4380.2 7301.4L12991.8 7911.8M-5695.5 9022.3L14998.5 9882.7M979.6 288.9L-5695.5 9022.3M1191.2 290.9L-4729.9 9062.5M1403.0 293.0L-3757.6 9102.9M1615.2 295.0L-2778.3 9143.6M1827.7 297.0L-1792.1 9184.6M2040.5 299.0L-798.8 9225.9M2253.6 301.1L201.5 9267.5M2467.1 303.1L1209.1 9309.4M2680.8 305.1L2223.9 9351.6M2894.9 307.2L3246.1 9394.1M3109.4 309.2L4275.7 9436.9M3324.1 311.3L5312.8 9480.0M3539.2 313.3L6357.5 9523.4M3754.6 315.4L7409.8 9567.2M3970.3 317.4L8470.0 9611.2M4186.4 319.5L9537.9 9655.6M4402.8 321.5L10613.8 9700.4M4619.5 323.6L11697.7 9745.4M4836.5 325.7L12789.8 9790.8M5053.9 327.7L13890.0 9836.6M5271.6 329.8L14998.5 9882.7" stroke="#6c6c6c" stroke-width="1.05" fill="none"/><path d="M-1921.7 1805.2L3310.6 1884.1" stroke="#80c880" stroke-width="1.3" fill="none"/><path d="M3035.5 -269.0L3310.6 1884.1" stroke="#f05050" stroke-width="1.3" fill="none"/><path d="M3547.6 176 L3534 273.3 L3520 370" stroke="#2030f0" stroke-width="1.4" fill="none"/><polygon points="1481.3,533.0 1508.2,502.6 1542.8,502.9 1034.0,1552.7 988.2,1613.1 938.9,1612.4" fill="#383838" /><polygon points="1481.3,533.0 1508.2,502.6 3369.8,521.7 3373.5,538.7 3368.4,570.0 1472.6,550.2" fill="#383838" /><polygon points="955.8,1578.7 1001.7,1519.5 3594.0,1555.5 3601.2,1588.7 3597.9,1650.2 938.9,1612.4" fill="#383838" /><polygon points="2261.0,558.4 2279.0,527.4 2314.0,527.8 2217.3,1047.6 2194.8,1092.3 2152.3,1091.8" fill="#383838" /><polygon points="2157.3,1066.9 2180.2,1022.9 3481.9,1038.6 3487.2,1063.1 3482.7,1108.2 2152.3,1091.8" fill="#383838" /><polygon points="1534.7,519.7 3373.5,538.7 3388.2,431.8 1515.9,413.2" fill="url(#brickH)" /><polygon points="2314.0,527.8 2221.8,1023.4 2214.3,906.9 2309.4,421.1" fill="url(#brickL)" /><polygon points="2175.4,1047.1 3487.2,1063.1 3507.4,946.0 2166.8,930.2" fill="url(#brickH)" /><polygon points="2175.4,1047.1 2217.3,1047.6 2209.6,930.7 2166.8,930.2" fill="#503028" /><polygon points="2214.3,906.9 3501.8,921.9 3507.4,946.0 2209.6,930.7" fill="url(#topg)" /><polygon points="2273.7,420.7 2309.4,421.1 2209.6,930.7 2166.8,930.2" fill="url(#topl)" /><polygon points="1489.0,396.4 3384.3,415.2 3388.2,431.8 1480.4,412.8" fill="url(#topg)" /><polygon points="1534.7,519.7 1049.8,1520.1 1011.4,1397.1 1515.9,413.2" fill="url(#brickL)" /><polygon points="1489.0,396.4 1515.9,413.2 1011.4,1397.1 945.1,1428.7" fill="url(#topl)" /><polygon points="985.5,1552.0 3601.2,1588.7 3627.8,1465.1 945.1,1428.7" fill="url(#brickH)" /><polygon points="962.1,1396.4 3620.2,1432.2 3627.8,1465.1 945.1,1428.7" fill="url(#topg)" /><polygon points="1889.4,1028.3 2076.3,933.2 2300.0,1050.0 2300.0,1270.0 2250.8,1234.9" fill="#9a9aff" fill-opacity="0.5"/><path d="M1889.4 1028.3L2309.4 1268.3M1912.8 1016.4L2332.8 1256.4M1936.1 1004.5L2356.1 1244.5M1959.5 992.6L2379.5 1232.6M1982.9 980.8L2402.9 1220.8M2006.2 968.9L2426.2 1208.9M2029.6 957.0L2449.6 1197.0M2052.9 945.1L2472.9 1185.1M2076.3 933.2L2496.3 1173.2" stroke="#6060f0" stroke-width="1.1" fill="none"/><polygon points="2207.0,999.0 2260.0,1001.0 2260.0,1036.0 2207.0,1030.0" fill="#2828e8" fill-opacity="0.85"/></g></svg>
<div class="r" style="left:2251px;top:274px;width:2574px;height:2197px;background:#efefef;border-radius:16px 16px 0 0;box-shadow:0 0 0 1.5px rgba(40,40,40,0.55),0 6px 22px rgba(0,0,0,0.55);"></div><div class="r" style="left:2251px;top:274px;width:2574px;height:79px;background:#dedede;border-radius:16px 16px 0 0;"></div><div class="r" style="left:2251.0px;top:352.5px;width:2574.0px;height:2.0px;background:#c3c3c3;"></div><div class="t" style="left:3369.0px;top:292.1px;font-size:46.0px;line-height:46.0px;color:#3c3c3c;font-weight:bold;transform:scaleX(0.9442);">slam.rviz* - RViz</div><div class="r" style="left:4645.0px;top:316.0px;width:17.0px;height:3.0px;background:#3c3c3c;"></div><div class="r" style="left:4713px;top:304px;width:16px;height:16px;border:2.5px solid #3c3c3c;box-sizing:border-box"></div><svg class="r" style="left:4769px;top:293px" width="38" height="38"><circle cx="19" cy="19" r="18.5" fill="#e95420"/><path d="M12 12 L26 26 M26 12 L12 26" stroke="#fff" stroke-width="3"/></svg><div class="r" style="left:2251.0px;top:354.5px;width:2574.0px;height:49.5px;background:#efefef;"></div><div class="t" style="left:2270.4px;top:361.3px;font-size:38.0px;line-height:38.0px;color:#000;transform:scaleX(1.0232);">File</div><div class="t" style="left:2357.3px;top:361.3px;font-size:38.0px;line-height:38.0px;color:#000;transform:scaleX(1.0234);">Panels</div><div class="t" style="left:2500.0px;top:361.3px;font-size:38.0px;line-height:38.0px;color:#000;transform:scaleX(1.0680);">Help</div><div class="r" style="left:2270.0px;top:399.0px;width:21.0px;height:4.0px;background:#000;"></div><div class="r" style="left:2357.0px;top:399.0px;width:25.0px;height:4.0px;background:#000;"></div><div class="r" style="left:2500.0px;top:399.0px;width:28.0px;height:4.0px;background:#000;"></div><div class="r" style="left:2251.0px;top:404.0px;width:2574.0px;height:1.5px;background:#dcdcdc;"></div><div class="r" style="left:2251.0px;top:405.5px;width:2574.0px;height:84.5px;background:linear-gradient(#f9f9f9,#f1f1f1);"></div><div class="r" style="left:2251.0px;top:489.5px;width:2574.0px;height:1.5px;background:#d2d2d2;"></div><div class="r" style="left:2283.4px;top:415.4px;width:205.5px;height:65.6px;background:#dcdcdc;border:1.5px solid #bdbdbd;border-radius:4px;box-sizing:border-box"></div><div class="t" style="left:2304.7px;top:431.5px;font-size:35.0px;line-height:35.0px;color:#000;transform:scaleX(0.9938);">Interact</div><div class="t" style="left:2513.3px;top:431.5px;font-size:35.0px;line-height:35.0px;color:#000;transform:scaleX(0.9137);">Move Camera</div><div class="t" style="left:2808.0px;top:431.5px;font-size:35.0px;line-height:35.0px;color:#000;transform:scaleX(0.9219);">Select</div><div class="t" style="left:2991.5px;top:431.5px;font-size:35.0px;line-height:35.0px;color:#000;transform:scaleX(0.8994);">Focus Camera</div><div class="t" style="left:3289.0px;top:431.5px;font-size:35.0px;line-height:35.0px;color:#000;transform:scaleX(0.9328);">Measure</div><div class="t" style="left:3509.0px;top:431.5px;font-size:35.0px;line-height:35.0px;color:#000;transform:scaleX(0.9244);">2D Pose Estimate</div><div class="t" style="left:3861.0px;top:431.5px;font-size:35.0px;line-height:35.0px;color:#000;transform:scaleX(0.9018);">2D Nav Goal</div><div class="t" style="left:4133.0px;top:431.5px;font-size:35.0px;line-height:35.0px;color:#000;transform:scaleX(0.9548);">Publish Point</div><div class="r" style="left:4405.5px;top:420.0px;width:1.5px;height:55.0px;background:#d4d4d4;"></div>
<div class="r" style="left:2943px;top:492px;width:1386px;height:1786px;overflow:hidden;background:#5d6e6c"><svg class="r" style="left:0;top:0;transform-origin:0 0;transform:matrix3d(5.31579503,-0.457629833,0,0.00013307385,-0.156796408,3.4718239,0,-0.00119461903,0,0,1,0,-473.307193,189.976248,0,1)" width="280" height="260" viewBox="0 0 280 260"><path d="M98 20.5h1m2 0h1m3 0h1m3 0h1m3 0h1m2 0h1m3 0h1m2 0h1m3 0h1m2 0h1m2 0h1m3 0h1m2 0h1m2 0h1m2 0h1m2 0h1m2 0h1m2 0h1m2 0h1m2 0h1m2 0h1m2 0h1m2 0h1m2 0h1m2 0h1m2 0h1m2 0h1m1 0h1m2 0h1m2 0h1m2 0h1m2 0h1m1 0h1M94 21.5h1m3 0h1m3 0h1m3 0h1m3 0h1m2 0h1m3 0h1m2 0h1m3 0h1m2 0h1m3 0h1m2 0h1m2 0h1m2 0h1m2 0h1m3 0h1m2 0h1m2 0h1m2 0h1m2 0h1m2 0h1m1 0h1m2 0h1m2 0h1m2 0h1m2 0h1m2 0h1m2 0h1m1 0h1m2 0h1m2 0h1m2 0h1m2 0h1m1 0h1m2 0h1m2 0h1m2 0h1m2 0h1m1 0h1m2 0h1m2 0h1m2 0h1m2 0h1m1 0h1m2 0h1m2 0h1m2 0h1m2 0h1m2 0h1m2 0h1m2 0h1m2 0h1m2 0h1m2 0h1m2 0h1m3 0h1m2 0h1M95 22.5h1m3 0h1m3 0h1m2 0h1m3 0h1m3 0h1m2 0h1m3 0h1m2 0h1m3 0h1m2 0h1m2 0h1m2 0h1m3 0h1m2 0h1m2 0h1m2 0h1m2 0h1m2 0h1m2 0h1m2 0h1m2 0h1m2 0h1m1 0h1m2 0h1m2 0h1m2 0h1m2 0h1m2 0h1m1 0h1m2 0h1m2 0h1m2 0h1m4 0h1m2 0h1m2 0h1m1 0h1m2 0h1m2 0h1m2 0h1m2 0h1m1 0h1m2 0h1m2 0h1m2 0h1m2 0h1m2 0h1m2 0h1m2 0h1m2 0h1m2 0h1m2 0h1m2 0h1m2 0h1m2 0h1m2 0h1M92 23.5h1m3 0h1m2 0h1m3 0h1m3 0h1m3 0h1m2 0h1m3 0h1m2 0h1m3 0h1m2 0h1m2 0h1m3 0h1m2 0h1m2 0h1m2 0h1m2 0h1m2 0h1m2 0h1m2 0h1m2 0h1m2 0h1m2 0h1m2 0h1m2 0h1m1 0h1m2 0h1m2 0h1m2 0h1m2 0h1m1 0h1m2 0h1m2 0h1m2 0h1m1 0h1m2 0h1m2 0h1m2 0h1m1 0h1m2 0h1m2 0h1m2 0h1m2 0h1m1 0h1m2 0h1m2 0h1m2 0h1m2 0h1m2 0h1m2 0h1m1 0h1m2 0h1m2 0h1m2 0h1m3 0h1m2 0h1m2 0h1m2 0h1M92 24.5h1m3 0h1m3 0h1m3 0h1m3 0h1m2 0h1m3 0h1m2 0h1m3 0h1m2 0h1m3 0h1m2 0h1m2 0h1m2 0h1m2 0h1m2 0h1m3 0h1m2 0h1m2 0h1m1 0h1m2 0h1m2 0h1m2 0h1m2 0h1m2 0h1m2 0h1m1 0h1m2 0h1m2 0h1m2 0h1m1 0h1m2 0h1m2 0h1m4 0h1m2 0h1m2 0h1m2 0h1m1 0h1m2 0h1m2 0h1m2 0h1m1 0h1m2 0h1m2 0h1m2 0h1m2 0h1m1 0h1m2 0h1m2 0h1m2 0h1m2 0h1m2 0h1m2 0h1m2 0h1m2 0h1m2 0h1m3 0h1M89 25.5h1m3 0h1m3 0h1m3 0h1m3 0h1m2 0h1m3 0h1m2 0h1m3 0h1m2 0h1m3 0h1m2 0h1m2 0h1m2 0h1m3 0h1m2 0h1m2 0h1m2 0h1m2 0h1m2 0h1m2 0h1m2 0h1m2 0h1m1 0h1m2 0h1m2 0h1m2 0h1m2 0h1m1 0h1m2 0h1m2 0h1m2 0h1m1 0h1m5 0h1m1 0h1m2 0h1m2 0h1m2 0h1m1 0h1m2 0h1m2 0h1m1 0h1m2 0h1m2 0h1m2 0h1m2 0h1m1 0h1m2 0h1m2 0h1m2 0h1m2 0h1m2 0h1m2 0h1m2 0h1m2 0h1m2 0h1m2 0h1m2 0h1M90 26.5h1m3 0h1m3 0h1m2 0h1m3 0h1m3 0h1m2 0h1m3 0h1m2 0h1m3 0h1m2 0h1m2 0h1m3 0h1m2 0h1m2 0h1m2 0h1m2 0h1m2 0h1m2 0h1m2 0h1m2 0h1m2 0h1m2 0h1m2 0h1m1 0h1m2 0h1m2 0h1m2 0h1m2 0h1m1 0h1m2 0h1m2 0h1m1 0h1m2 0h1m2 0h1m1 0h1m2 0h1m2 0h1m2 0h1m1 0h1m2 0h1m2 0h1m1 0h1m2 0h1m2 0h1m2 0h1m1 0h1m2 0h1m2 0h1m2 0h1m2 0h1m2 0h1m2 0h1m1 0h1m2 0h1m2 0h1m3 0h1m2 0h1m2 0h1M86 27.5h1m3 0h1m3 0h1m3 0h1m3 0h1m3 0h1m2 0h1m3 0h1m3 0h1m2 0h1m2 0h1m3 0h1m2 0h1m2 0h1m2 0h1m2 0h1m3 0h1m2 0h1m2 0h1m2 0h1m1 0h1m2 0h1m2 0h1m2 0h1m2 0h1m2 0h1m1 0h1m2 0h1m2 0h1m2 0h1m1 0h1m2 0h1m2 0h1m4 0h1m2 0h1m1 0h1m2 0h1m2 0h1m1 0h1m2 0h1m2 0h1m2 0h1m1 0h1m2 0h1m2 0h1m1 0h1m2 0h1m2 0h1m2 0h1m2 0h1m1 0h1m2 0h1m2 0h1m2 0h1m2 0h1m2 0h1m2 0h1m2 0h1m2 0h1M87 28.5h1m3 0h1m3 0h1m3 0h1m3 0h1m2 0h1m3 0h1m3 0h1m2 0h1m2 0h1m3 0h1m2 0h1m2 0h1m3 0h1m2 0h1m2 0h1m2 0h1m2 0h1m2 0h1m2 0h1m2 0h1m2 0h1m1 0h1m2 0h1m2 0h1m2 0h1m2 0h1m1 0h1m2 0h1m2 0h1m1 0h1m2 0h1m2 0h1m1 0h1m2 0h1m2 0h1m1 0h1m2 0h1m2 0h1m1 0h1m2 0h1m2 0h1m1 0h1m2 0h1m2 0h1m2 0h1m1 0h1m2 0h1m2 0h1m2 0h1m1 0h1m2 0h1m2 0h1m2 0h1m2 0h1m2 0h1m2 0h1m2 0h1m2 0h1m2 0h1m2 0h1M84 29.5h1m3 0h1m3 0h1m3 0h1m3 0h1m2 0h1m3 0h1m3 0h1m2 0h1m3 0h1m2 0h1m2 0h1m3 0h1m2 0h1m2 0h1m2 0h1m2 0h1m2 0h1m2 0h1m2 0h1m2 0h1m2 0h1m2 0h1m2 0h1m2 0h1m1 0h1m2 0h1m2 0h1m2 0h1m1 0h1m2 0h1m2 0h1m1 0h1m4 0h1m2 0h1m2 0h1m1 0h1m2 0h1m2 0h1m1 0h1m2 0h1m2 0h1m1 0h1m2 0h1m2 0h1m1 0h1m2 0h1m2 0h1m2 0h1m1 0h1m2 0h1m2 0h1m2 0h1m2 0h1m2 0h1m1 0h1m2 0h1m2 0h1m2 0h1m2 0h1m2 0h1M84 30.5h1m4 0h1m3 0h1m3 0h1m6 0h1m3 0h1m2 0h1m3 0h1m2 0h1m3 0h1m2 0h1m2 0h1m2 0h1m2 0h1m3 0h1m2 0h1m2 0h1m2 0h1m2 0h1m1 0h1m2 0h1m2 0h1m2 0h1m2 0h1m2 0h1m1 0h1m2 0h1m2 0h1m1 0h1m2 0h1m2 0h1m1 0h1m2 0h1m2 0h1m1 0h1m2 0h1m1 0h1m2 0h1m2 0h1m1 0h1m2 0h1m2 0h1m1 0h1m2 0h1m2 0h1m1 0h1m2 0h1m2 0h1m1 0h1m2 0h1m2 0h1m2 0h1m2 0h1m1 0h1m2 0h1m2 0h1m2 0h1m2 0h1m2 0h1m2 0h1m2 0h1M81 31.5h1m3 0h1m3 0h1m3 0h1m3 0h1m2 0h1m4 0h1m2 0h1m3 0h1m2 0h1m3 0h1m2 0h1m2 0h1m3 0h1m2 0h1m2 0h1m2 0h1m2 0h1m2 0h1m2 0h1m2 0h1m2 0h1m2 0h1m1 0h1m2 0h1m2 0h1m2 0h1m1 0h1m2 0h1m2 0h1m2 0h1m1 0h1m2 0h1m4 0h1m2 0h1m1 0h1m2 0h1m1 0h1m2 0h1m2 0h1m1 0h1m2 0h1m2 0h1m1 0h1m2 0h1m1 0h1m2 0h1m2 0h1m2 0h1m1 0h1m2 0h1m2 0h1m1 0h1m2 0h1m2 0h1m2 0h1m2 0h1m2 0h1m2 0h1m2 0h1m2 0h1m1 0h1M82 32.5h1m3 0h1m3 0h1m3 0h1m3 0h1m2 0h1m3 0h1m3 0h1m2 0h1m3 0h1m2 0h1m3 0h1m2 0h1m2 0h1m2 0h1m2 0h1m2 0h1m2 0h1m2 0h1m2 0h1m2 0h1m2 0h1m2 0h1m2 0h1m2 0h1m1 0h1m2 0h1m2 0h1m1 0h1m2 0h1m2 0h1m1 0h1m4 0h1m2 0h1m2 0h1m1 0h1m2 0h1m1 0h1m2 0h1m2 0h1m1 0h1m2 0h1m1 0h1m2 0h1m2 0h1m1 0h1m2 0h1m2 0h1m1 0h1m2 0h1m2 0h1m1 0h1m2 0h1m2 0h1m2 0h1m2 0h1m1 0h1m2 0h1m2 0h1m2 0h1m2 0h1m2 0h1M78 33.5h1m4 0h1m3 0h1m3 0h1m3 0h1m3 0h1m2 0h1m3 0h1m2 0h1m3 0h1m2 0h1m3 0h1m2 0h1m2 0h1m3 0h1m2 0h1m2 0h1m2 0h1m2 0h1m2 0h1m2 0h1m2 0h1m1 0h1m2 0h1m2 0h1m2 0h1m1 0h1m2 0h1m2 0h1m2 0h1m1 0h1m2 0h1m1 0h1m2 0h1m2 0h1m1 0h1m2 0h1m1 0h1m2 0h1m1 0h1m2 0h1m2 0h1m1 0h1m2 0h1m1 0h1m2 0h1m2 0h1m1 0h1m2 0h1m1 0h1m2 0h1m2 0h1m1 0h1m2 0h1m2 0h1m2 0h1m1 0h1m2 0h1m2 0h1m2 0h1m2 0h1m2 0h1m2 0h1m2 0h1M79 34.5h1m3 0h1m4 0h1m3 0h1m2 0h1m3 0h1m2 0h1m4 0h1m2 0h1m3 0h1m2 0h1m2 0h1m3 0h1m2 0h1m2 0h1m2 0h1m2 0h1m2 0h1m2 0h1m2 0h1m2 0h1m2 0h1m2 0h1m2 0h1m1 0h1m2 0h1m2 0h1m1 0h1m2 0h1m2 0h1m1 0h1m2 0h1m4 0h1m2 0h1m1 0h1m2 0h1m1 0h1m2 0h1m1 0h1m2 0h1m2 0h1m1 0h1m2 0h1m1 0h1m2 0h1m1 0h1m2 0h1m2 0h1m1 0h1m2 0h1m2 0h1m1 0h1m2 0h1m2 0h1m1 0h1m2 0h1m2 0h1m2 0h1m2 0h1m2 0h1m1 0h1m2 0h1m2 0h1M80 35.5h1m3 0h1m3 0h1m3 0h1m3 0h1m3 0h1m2 0h1m3 0h1m3 0h1m2 0h1m3 0h1m2 0h1m2 0h1m2 0h1m3 0h1m2 0h1m2 0h1m2 0h1m2 0h1m2 0h1m1 0h1m2 0h1m2 0h1m2 0h1m2 0h1m1 0h1m2 0h1m2 0h1m1 0h1m2 0h1m2 0h1m4 0h1m1 0h1m2 0h1m1 0h1m2 0h1m1 0h1m2 0h1m2 0h1m1 0h1m2 0h1m1 0h1m2 0h1m1 0h1m2 0h1m1 0h1m2 0h1m2 0h1m1 0h1m2 0h1m1 0h1m2 0h1m2 0h1m1 0h1m2 0h1m2 0h1m2 0h1m1 0h1m2 0h1m2 0h1m2 0h1m2 0h1m2 0h1m2 0h1M76 36.5h1m4 0h1m3 0h1m3 0h1m3 0h1m3 0h1m3 0h1m2 0h1m3 0h1m2 0h1m3 0h1m2 0h1m2 0h1m3 0h1m2 0h1m2 0h1m2 0h1m2 0h1m2 0h1m2 0h1m2 0h1m2 0h1m2 0h1m1 0h1m2 0h1m2 0h1m2 0h1m1 0h1m2 0h1m2 0h1m1 0h1m2 0h1m1 0h1m2 0h1m1 0h1m2 0h1m1 0h1m2 0h1m1 0h1m2 0h1m2 0h1m1 0h1m2 0h1m1 0h1m2 0h1m1 0h1m2 0h1m1 0h1m2 0h1m1 0h1m2 0h1m2 0h1m1 0h1m2 0h1m1 0h1m2 0h1m2 0h1m2 0h1m1 0h1m2 0h1m2 0h1m2 0h1m2 0h1m2 0h1m1 0h1m2 0h1M77 37.5h1m4 0h1m3 0h1m3 0h1m3 0h1m3 0h1m2 0h1m2 0h1m3 0h1m3 0h1m2 0h1m3 0h1m2 0h1m2 0h1m2 0h1m2 0h1m3 0h1m2 0h1m1 0h1m2 0h1m2 0h1m2 0h1m2 0h1m2 0h1m1 0h1m2 0h1m2 0h1m1 0h1m2 0h1m2 0h1m1 0h1m4 0h1m2 0h1m1 0h1m2 0h1m1 0h1m2 0h1m2 0h1m1 0h1m2 0h1m1 0h1m2 0h1m1 0h1m2 0h1m1 0h1m2 0h1m1 0h1m2 0h1m1 0h1m2 0h1m1 0h1m2 0h1m2 0h1m1 0h1m2 0h1m2 0h1m1 0h1m2 0h1m2 0h1m2 0h1m1 0h1m2 0h1m2 0h1m2 0h1m2 0h1M73 38.5h1m4 0h1m4 0h1m3 0h1m3 0h1m2 0h1m3 0h1m3 0h1m2 0h1m3 0h1m3 0h1m2 0h1m2 0h1m3 0h1m2 0h1m2 0h1m2 0h1m2 0h1m2 0h1m2 0h1m2 0h1m2 0h1m1 0h1m2 0h1m2 0h1m2 0h1m1 0h1m2 0h1m2 0h1m1 0h1m2 0h1m1 0h1m2 0h1m1 0h1m2 0h1m2 0h1m1 0h1m2 0h1m1 0h1m2 0h1m1 0h1m2 0h1m1 0h1m2 0h1m1 0h1m2 0h1m1 0h1m2 0h1m1 0h1m2 0h1m1 0h1m2 0h1m1 0h1m2 0h1m1 0h1m2 0h1m2 0h1m1 0h1m2 0h1m2 0h1m1 0h1m2 0h1m2 0h1m2 0h1m2 0h1m1 0h1m2 0h1M74 39.5h1m4 0h1m3 0h1m3 0h1m3 0h1m3 0h1m3 0h1m3 0h1m2 0h1m3 0h1m2 0h1m3 0h1m2 0h1m2 0h1m2 0h1m2 0h1m2 0h1m2 0h1m2 0h1m2 0h1m2 0h1m2 0h1m2 0h1m2 0h1m1 0h1m2 0h1m2 0h1m1 0h1m2 0h1m2 0h1m1 0h1m4 0h1m2 0h1m1 0h1m2 0h1m1 0h1m2 0h1m1 0h1m2 0h1m1 0h1m2 0h1m1 0h1m2 0h1m1 0h1m1 0h1m2 0h1m1 0h1m2 0h1m1 0h1m2 0h1m1 0h1m2 0h1m2 0h1m1 0h1m2 0h1m1 0h1m2 0h1m2 0h1m1 0h1m2 0h1m2 0h1m2 0h1m1 0h1m2 0h1m2 0h1M75 40.5h1m3 0h1m4 0h1m3 0h1m3 0h1m3 0h1m3 0h1m3 0h1m1 0h1m3 0h1m3 0h1m2 0h1m2 0h1m3 0h1m2 0h1m2 0h1m2 0h1m2 0h1m2 0h1m2 0h1m2 0h1m1 0h1m2 0h1m2 0h1m2 0h1m1 0h1m2 0h1m2 0h1m1 0h1m2 0h1m4 0h1m1 0h1m2 0h1m1 0h1m2 0h1m1 0h1m2 0h1m1 0h1m2 0h1m1 0h1m2 0h1m1 0h1m1 0h1m2 0h1m1 0h1m2 0h1m1 0h1m2 0h1m1 0h1m2 0h1m1 0h1m2 0h1m1 0h1m2 0h1m2 0h1m1 0h1m2 0h1m1 0h1m2 0h1m2 0h1m2 0h1m1 0h1m2 0h1m2 0h1m2 0h1m2 0h1M76 41.5h1m3 0h1m4 0h1m3 0h1m3 0h1m3 0h1m2 0h1m3 0h1m2 0h1m3 0h1m2 0h1m3 0h1m2 0h1m2 0h1m2 0h1m2 0h1m2 0h1m2 0h1m2 0h1m2 0h1m2 0h1m2 0h1m2 0h1m1 0h1m2 0h1m2 0h1m1 0h1m2 0h1m1 0h1m2 0h1m1 0h1m2 0h1m1 0h1m2 0h1m1 0h1m2 0h1m1 0h1m2 0h1m1 0h1m2 0h1m1 0h1m2 0h1m1 0h1m1 0h1m2 0h1m1 0h1m2 0h1m1 0h1m2 0h1m1 0h1m2 0h1m1 0h1m2 0h1m1 0h1m2 0h1m1 0h1m2 0h1m1 0h1m2 0h1m2 0h1m1 0h1m2 0h1m2 0h1m2 0h1m2 0h1m1 0h1m2 0h1M77 42.5h1m3 0h1m8 0h1m3 0h1m2 0h1m3 0h1m3 0h1m2 0h1m3 0h1m2 0h1m2 0h1m3 0h1m2 0h1m2 0h1m2 0h1m2 0h1m2 0h1m2 0h1m2 0h1m1 0h1m2 0h1m2 0h1m2 0h1m1 0h1m2 0h1m2 0h1m1 0h1m2 0h1m4 0h1m1 0h1m2 0h1m1 0h1m2 0h1m1 0h1m1 0h1m2 0h1m1 0h1m2 0h1m1 0h1m2 0h1m1 0h1m1 0h1m2 0h1m1 0h1m2 0h1m1 0h1m2 0h1m1 0h1m2 0h1m1 0h1m1 0h1m2 0h1m2 0h1m1 0h1m2 0h1m1 0h1m2 0h1m1 0h1m2 0h1m2 0h1m2 0h1m1 0h1m2 0h1m2 0h1m2 0h1m2 0h1M78 43.5h1m3 0h1m3 0h1m4 0h1m2 0h1m3 0h1m3 0h1m3 0h1m1 0h1m3 0h1m3 0h1m2 0h1m2 0h1m2 0h1m2 0h1m2 0h1m2 0h1m2 0h1m2 0h1m2 0h1m2 0h1m2 0h1m1 0h1m2 0h1m2 0h1m1 0h1m2 0h1m1 0h1m4 0h1m2 0h1m1 0h1m2 0h1m1 0h1m2 0h1m1 0h1m2 0h1m1 0h1m1 0h1m2 0h1m1 0h1m2 0h1m1 0h1m1 0h1m2 0h1m1 0h1m2 0h1m1 0h1m1 0h1m2 0h1m1 0h1m2 0h1m1 0h1m2 0h1m1 0h1m2 0h1m1 0h1m2 0h1m2 0h1m1 0h1m2 0h1m1 0h1m2 0h1m2 0h1m2 0h1m1 0h1m3 0h1m1 0h1M79 44.5h1m3 0h1m3 0h1m4 0h1m2 0h1m3 0h1m3 0h1m2 0h1m2 0h1m3 0h1m2 0h1m3 0h1m2 0h1m2 0h1m2 0h1m2 0h1m2 0h1m2 0h1m2 0h1m1 0h1m2 0h1m2 0h1m2 0h1m1 0h1m2 0h1m2 0h1m1 0h1m2 0h1m1 0h1m1 0h1m2 0h1m1 0h1m2 0h1m1 0h1m2 0h1m1 0h1m2 0h1m1 0h1m1 0h1m2 0h1m1 0h1m2 0h1m1 0h1m1 0h1m2 0h1m1 0h1m2 0h1m1 0h1m1 0h1m2 0h1m1 0h1m2 0h1m1 0h1m2 0h1m1 0h1m2 0h1m1 0h1m2 0h1m1 0h1m2 0h1m1 0h1m2 0h1m2 0h1m2 0h1m1 0h1m2 0h1m2 0h1m2 0h1M80 45.5h1m3 0h1m3 0h1m3 0h1m3 0h1m3 0h1m2 0h1m3 0h1m2 0h1m3 0h1m2 0h1m2 0h1m2 0h1m2 0h1m2 0h1m2 0h1m2 0h1m2 0h1m2 0h1m2 0h1m2 0h1m1 0h1m2 0h1m2 0h1m1 0h1m2 0h1m1 0h1m4 0h1m2 0h1m1 0h1m2 0h1m1 0h1m2 0h1m1 0h1m1 0h1m2 0h1m1 0h1m2 0h1m1 0h1m1 0h1m2 0h1m1 0h1m1 0h1m2 0h1m1 0h1m1 0h1m2 0h1m1 0h1m2 0h1m1 0h1m1 0h1m2 0h1m1 0h1m2 0h1m1 0h1m2 0h1m1 0h1m2 0h1m2 0h1m1 0h1m2 0h1m1 0h1m2 0h1m2 0h1m1 0h1m3 0h1m1 0h1M81 46.5h1m3 0h1m2 0h1m4 0h1m3 0h1m2 0h1m3 0h1m3 0h1m1 0h1m3 0h1m2 0h1m3 0h1m2 0h1m2 0h1m2 0h1m2 0h1m2 0h1m2 0h1m1 0h1m2 0h1m2 0h1m2 0h1m1 0h1m2 0h1m2 0h1m1 0h1m4 0h1m1 0h1m2 0h1m1 0h1m2 0h1m1 0h1m2 0h1m1 0h1m1 0h1m2 0h1m1 0h1m2 0h1m1 0h1m1 0h1m2 0h1m1 0h1m1 0h1m2 0h1m1 0h1m1 0h1m2 0h1m1 0h1m2 0h1m1 0h1m1 0h1m2 0h1m1 0h1m2 0h1m1 0h1m2 0h1m1 0h1m2 0h1m1 0h1m2 0h1m1 0h1m2 0h1m2 0h1m1 0h1m2 0h1m2 0h1m2 0h1M81 47.5h1m3 0h1m3 0h1m4 0h1m3 0h1m2 0h1m3 0h1m2 0h1m2 0h1m3 0h1m2 0h1m2 0h1m2 0h1m2 0h1m2 0h1m2 0h1m2 0h1m2 0h1m2 0h1m2 0h1m1 0h1m2 0h1m2 0h1m1 0h1m2 0h1m4 0h1m1 0h1m2 0h1m1 0h1m2 0h1m1 0h1m1 0h1m2 0h1m1 0h1m2 0h1m1 0h1m1 0h1m2 0h1m1 0h1m1 0h1m2 0h1m1 0h1m1 0h1m2 0h1m1 0h1m1 0h1m2 0h1m1 0h1m1 0h1m2 0h1m1 0h1m2 0h1m1 0h1m1 0h1m2 0h1m1 0h1m2 0h1m1 0h1m2 0h1m1 0h1m2 0h1m2 0h1m1 0h1m2 0h1m2 0h1m2 0h1m1 0h1M82 48.5h1m3 0h1m3 0h1m4 0h1m2 0h1m3 0h1m2 0h1m3 0h1m2 0h1m3 0h1m2 0h1m2 0h1m2 0h1m2 0h1m2 0h1m2 0h1m2 0h1m2 0h1m1 0h1m2 0h1m2 0h1m1 0h1m2 0h1m2 0h1m1 0h1m1 0h1m2 0h1m1 0h1m2 0h1m1 0h1m2 0h1m1 0h1m2 0h1m1 0h1m1 0h1m2 0h1m1 0h1m1 0h1m2 0h1m1 0h1m1 0h1m2 0h1m1 0h1m1 0h1m2 0h1m1 0h1m1 0h1m2 0h1m1 0h1m1 0h1m2 0h1m1 0h1m1 0h1m2 0h1m1 0h1m2 0h1m1 0h1m2 0h1m1 0h1m2 0h1m1 0h1m2 0h1m1 0h1m2 0h1m2 0h1m1 0h1m2 0h1m2 0h1m2 0h1M83 49.5h1m3 0h1m3 0h1m4 0h1m2 0h1m3 0h1m2 0h1m3 0h1m2 0h1m2 0h1m2 0h1m2 0h1m3 0h1m2 0h1m1 0h1m2 0h1m2 0h1m2 0h1m2 0h1m1 0h1m2 0h1m2 0h1m1 0h1m2 0h1m4 0h1m1 0h1m2 0h1m1 0h1m2 0h1m1 0h1m1 0h1m2 0h1m1 0h1m1 0h1m2 0h1m1 0h1m1 0h1m2 0h1m1 0h1m1 0h1m2 0h1m1 0h1m1 0h1m2 0h1m1 0h1m1 0h1m1 0h1m2 0h1m1 0h1m1 0h1m2 0h1m1 0h1m2 0h1m1 0h1m1 0h1m2 0h1m1 0h1m2 0h1m1 0h1m2 0h1m1 0h1m2 0h1m2 0h1m1 0h1m2 0h1m2 0h1m1 0h1m2 0h1M84 50.5h1m3 0h1m3 0h1m3 0h1m3 0h1m2 0h1m3 0h1m5 0h1m3 0h1m2 0h1m2 0h1m2 0h1m2 0h1m2 0h1m2 0h1m2 0h1m1 0h1m2 0h1m2 0h1m2 0h1m1 0h1m2 0h1m1 0h1m2 0h1m1 0h1m2 0h1m1 0h1m1 0h1m2 0h1m1 0h1m2 0h1m1 0h1m1 0h1m2 0h1m1 0h1m1 0h1m2 0h1m1 0h1m1 0h1m1 0h1m2 0h1m1 0h1m1 0h1m2 0h1m1 0h1m1 0h1m1 0h1m2 0h1m1 0h1m1 0h1m2 0h1m1 0h1m1 0h1m2 0h1m1 0h1m2 0h1m1 0h1m1 0h1m2 0h1m1 0h1m2 0h1m2 0h1m1 0h1m2 0h1m1 0h1m2 0h1m2 0h1m2 0h1M85 51.5h1m3 0h1m3 0h1m3 0h1m3 0h1m2 0h1m3 0h1m1 0h1m3 0h1m2 0h1m3 0h1m2 0h1m2 0h1m2 0h1m2 0h1m1 0h1m2 0h1m2 0h1m2 0h1m1 0h1m2 0h1m2 0h1m1 0h1m2 0h1m1 0h1m1 0h1m2 0h1m1 0h1m2 0h1m1 0h1m1 0h1m2 0h1m1 0h1m1 0h1m2 0h1m1 0h1m1 0h1m2 0h1m1 0h1m1 0h1m1 0h1m2 0h1m1 0h1m1 0h1m1 0h1m2 0h1m1 0h1m1 0h1m2 0h1m1 0h1m1 0h1m1 0h1m2 0h1m1 0h1m2 0h1m1 0h1m1 0h1m2 0h1m1 0h1m2 0h1m1 0h1m2 0h1m1 0h1m2 0h1m1 0h1m2 0h1m2 0h1m1 0h1m2 0h1M86 52.5h1m3 0h1m2 0h1m4 0h1m2 0h1m3 0h1m2 0h1m2 0h1m3 0h1m2 0h1m2 0h1m2 0h1m2 0h1m2 0h1m2 0h1m2 0h1m2 0h1m1 0h1m2 0h1m2 0h1m1 0h1m2 0h1m1 0h1m2 0h1m1 0h1m2 0h1m1 0h1m1 0h1m2 0h1m1 0h1m2 0h1m1 0h1m1 0h1m2 0h1m1 0h1m1 0h1m1 0h1m2 0h1m1 0h1m1 0h1m1 0h1m2 0h1m1 0h1m1 0h1m1 0h1m2 0h1m1 0h1m1 0h1m1 0h1m2 0h1m1 0h1m1 0h1m2 0h1m1 0h1m1 0h1m2 0h1m1 0h1m1 0h1m2 0h1m1 0h1m2 0h1m1 0h1m2 0h1m1 0h1m2 0h1m1 0h1m2 0h1m2 0h1m2 0h1M87 53.5h1m3 0h1m2 0h1m4 0h1m2 0h1m3 0h1m2 0h1m2 0h1m2 0h1m3 0h1m2 0h1m2 0h1m2 0h1m2 0h1m2 0h1m1 0h1m2 0h1m2 0h1m2 0h1m1 0h1m2 0h1m1 0h1m2 0h1m1 0h1m2 0h1m1 0h1m1 0h1m2 0h1m1 0h1m1 0h1m2 0h1m1 0h1m1 0h1m2 0h1m1 0h1m1 0h1m2 0h1m1 0h1m1 0h1m1 0h1m1 0h1m2 0h1m1 0h1m1 0h1m1 0h1m2 0h1m1 0h1m1 0h1m1 0h1m2 0h1m1 0h1m1 0h1m1 0h1m2 0h1m1 0h1m1 0h1m2 0h1m1 0h1m2 0h1m1 0h1m1 0h1m2 0h1m1 0h1m2 0h1m2 0h1m1 0h1m2 0h1m1 0h1m2 0h1M88 54.5h1m2 0h1m3 0h1m4 0h1m2 0h1m2 0h1m3 0h1m2 0h1m2 0h1m2 0h1m2 0h1m2 0h1m2 0h1m2 0h1m2 0h1m2 0h1m2 0h1m1 0h1m2 0h1m2 0h1m1 0h1m2 0h1m1 0h1m2 0h1m1 0h1m1 0h1m2 0h1m1 0h1m1 0h1m2 0h1m1 0h1m1 0h1m2 0h1m1 0h1m1 0h1m1 0h1m2 0h1m1 0h1m1 0h1m1 0h1m2 0h1m1 0h1m1 0h1m1 0h1m1 0h1m2 0h1m1 0h1m1 0h1m1 0h1m1 0h1m2 0h1m1 0h1m1 0h1m2 0h1m1 0h1m1 0h1m2 0h1m1 0h1m1 0h1m2 0h1m1 0h1m2 0h1m1 0h1m2 0h1m1 0h1m5 0h1m1 0h1m2 0h1m2 0h1M89 55.5h1m2 0h1m3 0h1m3 0h1m3 0h1m2 0h1m2 0h1m2 0h1m3 0h1m2 0h1m2 0h1m2 0h1m2 0h1m2 0h1m2 0h1m1 0h1m2 0h1m2 0h1m1 0h1m2 0h1m2 0h1m1 0h1m2 0h1m1 0h1m1 0h1m2 0h1m1 0h1m1 0h1m2 0h1m1 0h1m1 0h1m2 0h1m1 0h1m1 0h1m1 0h1m2 0h1m1 0h1m1 0h1m1 0h1m1 0h1m2 0h1m1 0h1m1 0h1m1 0h1m1 0h1m2 0h1m1 0h1m1 0h1m1 0h1m1 0h1m2 0h1m1 0h1m1 0h1m1 0h1m2 0h1m1 0h1m1 0h1m2 0h1m1 0h1m1 0h1m2 0h1m1 0h1m2 0h1m1 0h1m2 0h1m1 0h1m2 0h1m1 0h1m2 0h1m2 0h1M90 56.5h1m2 0h1m3 0h1m3 0h1m2 0h1m3 0h1m2 0h1m2 0h1m2 0h1m3 0h1m2 0h1m2 0h1m2 0h1m1 0h1m2 0h1m2 0h1m2 0h1m1 0h1m2 0h1m1 0h1m2 0h1m1 0h1m2 0h1m1 0h1m1 0h1m2 0h1m1 0h1m2 0h1m1 0h1m1 0h1m1 0h1m2 0h1m1 0h1m1 0h1m1 0h1m2 0h1m1 0h1m1 0h1m1 0h1m1 0h1m2 0h1m1 0h1m1 0h1m1 0h1m1 0h1m1 0h1m2 0h1m1 0h1m1 0h1m1 0h1m1 0h1m2 0h1m1 0h1m1 0h1m1 0h1m2 0h1m1 0h1m1 0h1m2 0h1m1 0h1m1 0h1m2 0h1m1 0h1m2 0h1m1 0h1m2 0h1m2 0h1m1 0h1m2 0h1m2 0h1M90 57.5h1m3 0h1m3 0h1m6 0h1m3 0h1m2 0h1m2 0h1m2 0h1m2 0h1m2 0h1m2 0h1m2 0h1m2 0h1m2 0h1m1 0h1m2 0h1m2 0h1m1 0h1m2 0h1m1 0h1m2 0h1m1 0h1m2 0h1m1 0h1m1 0h1m1 0h1m2 0h1m1 0h1m1 0h1m2 0h1m1 0h1m1 0h1m1 0h1m2 0h1m1 0h1m1 0h1m1 0h1m1 0h1m1 0h1m2 0h1m1 0h1m1 0h1m1 0h1m1 0h1m1 0h1m2 0h1m1 0h1m1 0h1m1 0h1m1 0h1m2 0h1m1 0h1m1 0h1m1 0h1m1 0h1m2 0h1m1 0h1m1 0h1m2 0h1m1 0h1m2 0h1m1 0h1m1 0h1m2 0h1m2 0h1m1 0h1m2 0h1m1 0h1m2 0h1M91 58.5h1m3 0h1m2 0h1m3 0h1m3 0h1m2 0h1m3 0h1m1 0h1m3 0h1m2 0h1m2 0h1m2 0h1m2 0h1m1 0h1m2 0h1m2 0h1m2 0h1m1 0h1m2 0h1m1 0h1m2 0h1m1 0h1m2 0h1m1 0h1m1 0h1m1 0h1m2 0h1m1 0h1m1 0h1m2 0h1m1 0h1m1 0h1m1 0h1m1 0h1m2 0h1m1 0h1m1 0h1m1 0h1m1 0h1m1 0h1m2 0h1m1 0h1m1 0h1m1 0h1m1 0h1m1 0h1m1 0h1m2 0h1m1 0h1m1 0h1m1 0h1m1 0h1m2 0h1m1 0h1m1 0h1m1 0h1m2 0h1m1 0h1m1 0h1m1 0h1m2 0h1m1 0h1m2 0h1m1 0h1m2 0h1m1 0h1m2 0h1m1 0h1m2 0h1m1 0h1M92 59.5h1m3 0h1m2 0h1m3 0h1m3 0h1m2 0h1m2 0h1m2 0h1m2 0h1m3 0h1m2 0h1m1 0h1m2 0h1m2 0h1m2 0h1m1 0h1m2 0h1m2 0h1m1 0h1m2 0h1m1 0h1m2 0h1m1 0h1m1 0h1m1 0h1m2 0h1m1 0h1m1 0h1m2 0h1m1 0h1m1 0h1m1 0h1m1 0h1m2 0h1m1 0h1m1 0h1m1 0h1m1 0h1m1 0h1m2 0h1m1 0h1m1 0h1m1 0h1m1 0h1m1 0h1m1 0h1m1 0h1m2 0h1m1 0h1m1 0h1m1 0h1m1 0h1m1 0h1m2 0h1m1 0h1m1 0h1m1 0h1m2 0h1m1 0h1m1 0h1m1 0h1m2 0h1m1 0h1m2 0h1m1 0h1m2 0h1m1 0h1m2 0h1m1 0h1m2 0h1m1 0h1M93 60.5h1m3 0h1m2 0h1m3 0h1m3 0h1m2 0h1m2 0h1m2 0h1m2 0h1m2 0h1m2 0h1m2 0h1m2 0h1m2 0h1m1 0h1m2 0h1m2 0h1m1 0h1m2 0h1m1 0h1m2 0h1m1 0h1m1 0h1m2 0h1m1 0h1m1 0h1m1 0h1m2 0h1m1 0h1m1 0h1m1 0h1m1 0h1m2 0h1m1 0h1m1 0h1m1 0h1m1 0h1m1 0h1m1 0h1m2 0h1m1 0h1m1 0h1m1 0h1m1 0h1m1 0h1m1 0h1m1 0h1m1 0h1m2 0h1m1 0h1m1 0h1m1 0h1m1 0h1m1 0h1m2 0h1m1 0h1m1 0h1m1 0h1m2 0h1m1 0h1m1 0h1m1 0h1m2 0h1m1 0h1m2 0h1m1 0h1m2 0h1m1 0h1m2 0h1m1 0h1m2 0h1M94 61.5h1m3 0h1m2 0h1m2 0h1m3 0h1m3 0h1m2 0h1m1 0h1m3 0h1m2 0h1m2 0h1m2 0h1m1 0h1m2 0h1m2 0h1m1 0h1m2 0h1m2 0h1m1 0h1m1 0h1m2 0h1m1 0h1m2 0h1m1 0h1m1 0h1m1 0h1m2 0h1m1 0h1m1 0h1m1 0h1m1 0h1m2 0h1m1 0h1m1 0h1m1 0h1m1 0h1m1 0h1m1 0h1m2 0h1m1 0h1m1 0h1m1 0h1m1 0h1m1 0h1m1 0h1m1 0h1m1 0h1m1 0h1m1 0h1m2 0h1m1 0h1m1 0h1m1 0h1m1 0h1m1 0h1m2 0h1m1 0h1m1 0h1m1 0h1m1 0h1m2 0h1m1 0h1m1 0h1m2 0h1m1 0h1m2 0h1m1 0h1m2 0h1m1 0h1m2 0h1m1 0h1M95 62.5h1m2 0h1m3 0h1m2 0h1m3 0h1m2 0h1m3 0h1m1 0h1m2 0h1m2 0h1m2 0h1m2 0h1m2 0h1m2 0h1m1 0h1m2 0h1m1 0h1m2 0h1m1 0h1m2 0h1m1 0h1m2 0h1m1 0h1m1 0h1m1 0h1m2 0h1m1 0h1m1 0h1m1 0h1m2 0h1m1 0h1m1 0h1m1 0h1m1 0h1m1 0h1m1 0h1m1 0h1m2 0h1m1 0h1m1 0h1m1 0h1m1 0h1m1 0h1m1 0h1m1 0h1m1 0h1m1 0h1m1 0h1m1 0h1m1 0h1m2 0h1m1 0h1m1 0h1m1 0h1m1 0h1m1 0h1m1 0h1m2 0h1m1 0h1m1 0h1m1 0h1m2 0h1m1 0h1m1 0h1m2 0h1m1 0h1m2 0h1m1 0h1m2 0h1m1 0h1m2 0h1M96 63.5h1m2 0h1m3 0h1m2 0h1m3 0h1m2 0h1m2 0h1m2 0h1m2 0h1m2 0h1m2 0h1m2 0h1m2 0h1m1 0h1m2 0h1m1 0h1m2 0h1m1 0h1m2 0h1m1 0h1m2 0h1m1 0h1m1 0h1m2 0h1m1 0h1m1 0h1m1 0h1m1 0h1m2 0h1m1 0h1m1 0h1m1 0h1m1 0h1m1 0h1m1 0h1m1 0h1m2 0h1m1 0h1m1 0h1m1 0h1m1 0h1m1 0h1m1 0h1m1 0h1m1 0h1m1 0h1m1 0h1m1 0h1m1 0h1m1 0h1m1 0h1m2 0h1m1 0h1m1 0h1m1 0h1m1 0h1m1 0h1m1 0h1m2 0h1m1 0h1m1 0h1m1 0h1m2 0h1m1 0h1m1 0h1m2 0h1m1 0h1m2 0h1m1 0h1m2 0h1m1 0h1M97 64.5h1m2 0h1m2 0h1m3 0h1m3 0h1m2 0h1m2 0h1m1 0h1m3 0h1m2 0h1m2 0h1m1 0h1m2 0h1m2 0h1m1 0h1m2 0h1m1 0h1m2 0h1m1 0h1m2 0h1m1 0h1m1 0h1m2 0h1m1 0h1m1 0h1m1 0h1m1 0h1m2 0h1m1 0h1m1 0h1m1 0h1m1 0h1m1 0h1m1 0h1m1 0h1m2 0h1m1 0h1m1 0h1m1 0h1m1 0h1m1 0h1m1 0h1m1 0h1m1 0h1m1 0h1m1 0h1m1 0h1m1 0h1m1 0h1m1 0h1m1 0h1m1 0h1m1 0h1m2 0h1m1 0h1m1 0h1m1 0h1m1 0h1m1 0h1m2 0h1m1 0h1m1 0h1m1 0h1m2 0h1m1 0h1m2 0h1m1 0h1m1 0h1m2 0h1m1 0h1m2 0h1m2 0h1M98 65.5h1m2 0h1m2 0h1m3 0h1m2 0h1m3 0h1m2 0h1m1 0h1m2 0h1m2 0h1m2 0h1m2 0h1m2 0h1m1 0h1m2 0h1m1 0h1m2 0h1m1 0h1m2 0h1m1 0h1m1 0h1m2 0h1m1 0h1m1 0h1m1 0h1m2 0h1m1 0h1m1 0h1m1 0h1m1 0h1m1 0h1m1 0h1m1 0h1m2 0h1m1 0h1m1 0h1m1 0h1m1 0h1m1 0h1m1 0h1m1 0h1m1 0h1m1 0h1m1 0h1m1 0h1m1 0h1m1 0h1m1 0h1m1 0h1m1 0h1m1 0h1m1 0h1m1 0h1m1 0h1m1 0h1m2 0h1m1 0h1m1 0h1m1 0h1m1 0h1m1 0h1m2 0h1m1 0h1m1 0h1m2 0h1m1 0h1m2 0h1m1 0h1m1 0h1m2 0h1m1 0h1m2 0h1M98 66.5h1m3 0h1m2 0h1m2 0h1m3 0h1m2 0h1m2 0h1m2 0h1m2 0h1m2 0h1m2 0h1m2 0h1m1 0h1m2 0h1m1 0h1m2 0h1m1 0h1m2 0h1m1 0h1m2 0h1m1 0h1m1 0h1m1 0h1m2 0h1m1 0h1m1 0h1m1 0h1m1 0h1m1 0h1m1 0h1m2 0h1m1 0h1m1 0h1m1 0h1m1 0h1m1 0h1m1 0h1m1 0h1m1 0h1m1 0h1m1 0h1m1 0h1m1 0h1m1 0h1m1 0h1m1 0h1m1 0h1m1 0h1m1 0h1m1 0h1m1 0h1m1 0h1m1 0h1m1 0h1m1 0h1m1 0h1m1 0h1m2 0h1m1 0h1m1 0h1m1 0h1m1 0h1m2 0h1m1 0h1m1 0h1m2 0h1m1 0h1m1 0h1m2 0h1m1 0h1m2 0h1m1 0h1M99 67.5h1m3 0h1m2 0h1m2 0h1m3 0h1m2 0h1m2 0h1m2 0h1m2 0h1m2 0h1m1 0h1m2 0h1m2 0h1m1 0h1m2 0h1m1 0h1m2 0h1m1 0h1m2 0h1m1 0h1m1 0h1m2 0h1m1 0h1m1 0h1m1 0h1m1 0h1m1 0h1m1 0h1m2 0h1m1 0h1m1 0h1m1 0h1m1 0h1m1 0h1m1 0h1m1 0h1m1 0h1m1 0h1m1 0h1m1 0h1m1 0h1m1 0h1m1 0h1m1 0h1m1 0h1m1 0h1m1 0h1m1 0h1m1 0h1m1 0h1m1 0h1m1 0h1m1 0h1m1 0h1m1 0h1m1 0h1m1 0h1m1 0h1m1 0h1m2 0h1m1 0h1m1 0h1m1 0h1m1 0h1m2 0h1m1 0h1m2 0h1m1 0h1m1 0h1m2 0h1m1 0h1m2 0h1M100 68.5h1m3 0h1m2 0h1m2 0h1m3 0h1m2 0h1m2 0h1m1 0h1m2 0h1m2 0h1m2 0h1m2 0h1m1 0h1m2 0h1m1 0h1m2 0h1m1 0h1m2 0h1m1 0h1m1 0h1m2 0h1m1 0h1m1 0h1m1 0h1m1 0h1m1 0h1m2 0h1m1 0h1m1 0h1m1 0h1m1 0h1m1 0h1m1 0h1m1 0h1m1 0h1m1 0h1m1 0h1m1 0h1m1 0h1m1 0h1m1 0h1m1 0h1m1 0h1m1 0h1m1 0h1m1 0h1m1 0h1m1 0h1m1 0h1m1 0h1m1 0h1m1 0h1m1 0h1m1 0h1m1 0h1m1 0h1m1 0h1m1 0h1m1 0h1m1 0h1m1 0h1m2 0h1m1 0h1m1 0h1m1 0h1m2 0h1m1 0h1m1 0h1m2 0h1m1 0h1m2 0h1m1 0h1M101 69.5h1m2 0h1m3 0h1m2 0h1m3 0h1m2 0h1m2 0h1m1 0h1m2 0h1m2 0h1m2 0h1m1 0h1m2 0h1m1 0h1m2 0h1m1 0h1m2 0h1m1 0h1m2 0h1m1 0h1m1 0h1m1 0h1m2 0h1m1 0h1m1 0h1m1 0h1m1 0h1m1 0h1m1 0h1m1 0h1m1 0h1m1 0h1m1 0h1m1 0h1m1 0h1m1 0h1m1 0h1m1 0h1m1 0h1m1 0h1m1 0h1m1 0h1m1 0h1m1 0h1m1 0h1m1 0h1m1 0h1m1 0h1m1 0h1m1 0h1m1 0h1m1 0h1m1 0h1m1 0h1m1 0h1m1 0h1m1 0h1m1 0h1m1 0h1m1 0h1m1 0h1m1 0h1m1 0h1m2 0h1m1 0h1m1 0h1m2 0h1m1 0h1m1 0h1m2 0h1m1 0h1m2 0h1m2 0h1M102 70.5h1m2 0h1m2 0h1m3 0h1m2 0h1m2 0h1m2 0h1m2 0h1m2 0h1m2 0h1m1 0h1m2 0h1m1 0h1m2 0h1m1 0h1m2 0h1m1 0h1m2 0h1m1 0h1m1 0h1m1 0h1m2 0h1m1 0h1m1 0h1m1 0h1m1 0h1m1 0h1m1 0h1m1 0h1m1 0h1m1 0h1m1 0h1m1 0h1m1 0h1m1 0h1m1 0h1m1 0h1m1 0h1m1 0h1m1 0h1m1 0h1m1 0h1m1 0h1m1 0h1m1 0h1m1 0h1m1 0h1m1 0h2m1 0h1m1 0h1m1 0h1m1 0h1m1 0h1m1 0h1m1 0h1m1 0h1m1 0h1m2 0h1m1 0h1m1 0h1m1 0h1m1 0h1m1 0h1m2 0h1m1 0h1m1 0h1m1 0h1m2 0h1m1 0h1m2 0h1m1 0h1m2 0h1M103 71.5h1m2 0h1m2 0h1m2 0h1m3 0h1m2 0h1m2 0h1m1 0h1m2 0h1m2 0h1m2 0h1m2 0h1m1 0h1m2 0h1m1 0h1m1 0h1m2 0h1m1 0h1m1 0h1m2 0h1m1 0h1m1 0h1m1 0h1m1 0h1m1 0h1m1 0h1m1 0h1m1 0h1m2 0h1m1 0h1m1 0h1m1 0h1m1 0h2m1 0h1m1 0h1m1 0h1m1 0h1m1 0h1m1 0h1m1 0h1m1 0h1m1 0h1m1 0h1m1 0h1m1 0h2m1 0h1m1 0h1m1 0h1m1 0h1m1 0h1m1 0h1m1 0h1m1 0h1m1 0h1m1 0h1m1 0h1m1 0h1m1 0h1m1 0h1m2 0h1m1 0h1m1 0h1m1 0h1m2 0h1m1 0h1m1 0h1m1 0h1m2 0h1m1 0h1m2 0h1m1 0h1M104 72.5h1m2 0h1m2 0h1m2 0h1m3 0h1m2 0h1m2 0h1m1 0h1m2 0h1m2 0h1m2 0h1m1 0h1m2 0h1m1 0h1m2 0h1m1 0h1m1 0h1m2 0h1m1 0h1m1 0h1m1 0h1m1 0h1m2 0h1m1 0h1m1 0h1m1 0h1m1 0h1m1 0h1m1 0h1m1 0h1m1 0h1m1 0h1m1 0h1m1 0h1m1 0h2m1 0h1m1 0h1m1 0h1m1 0h1m1 0h1m1 0h1m1 0h1m1 0h1m1 0h1m1 0h2m1 0h1m1 0h1m1 0h1m1 0h1m1 0h1m1 0h1m1 0h1m1 0h1m1 0h1m1 0h1m1 0h1m1 0h1m1 0h1m1 0h1m1 0h1m1 0h1m2 0h1m1 0h1m1 0h1m1 0h1m1 0h1m2 0h1m1 0h1m1 0h1m2 0h1m2 0h1M105 73.5h1m2 0h1m2 0h1m2 0h1m3 0h1m2 0h1m1 0h1m2 0h1m2 0h1m2 0h1m1 0h1m2 0h1m1 0h1m2 0h1m1 0h1m1 0h1m2 0h1m1 0h1m1 0h1m1 0h1m2 0h1m1 0h1m1 0h1m1 0h1m1 0h1m1 0h1m1 0h1m1 0h1m1 0h1m1 0h1m1 0h1m1 0h1m1 0h1m1 0h1m1 0h1m1 0h1m1 0h2m1 0h1m1 0h1m1 0h1m1 0h1m1 0h1m1 0h1m1 0h2m1 0h1m1 0h1m1 0h1m1 0h1m1 0h1m1 0h1m1 0h1m1 0h1m1 0h1m1 0h1m1 0h1m1 0h1m1 0h1m1 0h1m1 0h1m1 0h1m1 0h1m1 0h1m1 0h1m2 0h1m1 0h1m1 0h1m1 0h1m2 0h1m1 0h1m1 0h1m2 0h1m2 0h1M106 74.5h1m2 0h1m2 0h1m2 0h1m2 0h1m2 0h1m2 0h1m1 0h1m2 0h1m2 0h1m2 0h1m1 0h1m2 0h1m1 0h1m2 0h1m1 0h1m1 0h1m1 0h1m2 0h1m1 0h1m1 0h1m1 0h1m1 0h1m1 0h1m1 0h1m1 0h1m1 0h1m1 0h1m1 0h1m1 0h1m1 0h1m1 0h1m1 0h1m1 0h1m1 0h1m1 0h1m1 0h2m1 0h1m1 0h1m1 0h1m1 0h1m1 0h1m1 0h1m1 0h2m1 0h1m1 0h1m1 0h1m1 0h1m1 0h1m1 0h1m1 0h1m1 0h2m1 0h1m1 0h1m1 0h1m1 0h1m1 0h1m1 0h1m2 0h1m1 0h1m1 0h1m1 0h1m1 0h1m1 0h1m1 0h1m2 0h1m1 0h1m1 0h1m2 0h1m2 0h1m1 0h1M106 75.5h1m3 0h1m2 0h1m2 0h1m2 0h1m2 0h1m2 0h1m1 0h1m2 0h1m2 0h1m1 0h1m2 0h1m1 0h1m2 0h1m1 0h1m1 0h1m2 0h1m1 0h1m1 0h1m1 0h1m1 0h1m2 0h1m1 0h1m1 0h1m1 0h1m1 0h1m1 0h1m1 0h2m1 0h1m1 0h1m1 0h1m1 0h1m1 0h1m1 0h1m1 0h1m1 0h1m1 0h2m1 0h1m1 0h1m1 0h1m1 0h1m1 0h2m1 0h1m1 0h1m1 0h1m1 0h1m1 0h1m1 0h1m1 0h2m1 0h1m1 0h1m1 0h1m1 0h1m1 0h1m1 0h1m1 0h1m1 0h1m1 0h1m1 0h1m1 0h1m1 0h1m2 0h1m1 0h1m1 0h1m1 0h1m2 0h1m1 0h1m1 0h1m2 0h1m2 0h1M107 76.5h1m2 0h1m2 0h1m2 0h1m3 0h1m2 0h1m2 0h1m1 0h1m2 0h1m1 0h1m2 0h1m1 0h1m2 0h1m1 0h1m2 0h1m1 0h1m1 0h1m1 0h1m2 0h1m1 0h1m1 0h1m1 0h1m1 0h1m1 0h1m1 0h1m1 0h1m1 0h1m1 0h1m1 0h1m1 0h1m1 0h2m1 0h1m1 0h1m1 0h1m1 0h1m1 0h1m1 0h2m1 0h1m1 0h1m1 0h1m1 0h1m1 0h2m1 0h1m1 0h1m1 0h1m1 0h1m1 0h2m1 0h1m1 0h1m1 0h1m1 0h1m1 0h1m1 0h1m1 0h1m1 0h1m1 0h1m1 0h1m1 0h1m1 0h1m1 0h1m1 0h1m1 0h1m1 0h1m2 0h1m1 0h1m1 0h1m1 0h1m2 0h1m2 0h1m1 0h1M108 77.5h1m2 0h1m2 0h1m2 0h1m3 0h1m1 0h1m2 0h1m2 0h1m1 0h1m2 0h1m2 0h1m1 0h1m1 0h1m2 0h1m1 0h1m1 0h1m2 0h1m1 0h1m1 0h1m1 0h1m1 0h1m1 0h1m1 0h1m1 0h1m1 0h1m1 0h1m1 0h1m1 0h1m1 0h1m1 0h1m1 0h1m1 0h1m1 0h2m1 0h1m1 0h1m1 0h1m1 0h1m1 0h2m1 0h1m1 0h1m1 0h1m1 0h2m1 0h1m1 0h1m1 0h1m1 0h2m1 0h1m1 0h1m1 0h1m1 0h1m1 0h1m1 0h1m1 0h1m1 0h2m1 0h1m1 0h1m1 0h1m2 0h1m1 0h1m1 0h1m1 0h1m1 0h1m1 0h1m1 0h1m2 0h1m1 0h1m1 0h1m2 0h1m1 0h1m2 0h1M109 78.5h1m2 0h1m2 0h1m2 0h1m2 0h1m2 0h1m2 0h1m1 0h1m2 0h1m2 0h1m1 0h1m2 0h1m1 0h1m1 0h1m2 0h1m1 0h1m1 0h1m1 0h1m1 0h1m2 0h1m1 0h1m1 0h1m1 0h1m1 0h2m1 0h1m1 0h1m1 0h1m1 0h1m1 0h1m1 0h1m1 0h1m1 0h1m1 0h2m1 0h1m1 0h1m1 0h1m1 0h2m1 0h1m1 0h1m1 0h1m1 0h2m1 0h1m1 0h1m1 0h1m1 0h2m1 0h1m1 0h1m1 0h1m1 0h1m1 0h2m1 0h1m1 0h1m1 0h1m1 0h1m1 0h1m1 0h1m1 0h1m1 0h1m1 0h1m1 0h1m2 0h1m1 0h1m1 0h1m1 0h1m1 0h1m2 0h1m1 0h1m2 0h1m1 0h1M110 79.5h1m2 0h1m2 0h1m2 0h1m2 0h1m2 0h1m2 0h1m1 0h1m2 0h1m1 0h1m2 0h1m1 0h1m2 0h1m1 0h1m1 0h1m1 0h1m2 0h1m1 0h1m1 0h1m1 0h1m1 0h1m1 0h1m1 0h1m1 0h1m1 0h1m1 0h1m1 0h1m1 0h2m1 0h1m1 0h1m1 0h1m1 0h1m1 0h1m1 0h2m1 0h1m1 0h1m1 0h2m1 0h1m1 0h1m1 0h1m1 0h2m1 0h1m1 0h1m1 0h2m1 0h1m1 0h1m1 0h1m1 0h1m1 0h2m1 0h1m1 0h1m1 0h1m1 0h1m1 0h1m1 0h1m1 0h1m1 0h1m1 0h1m1 0h1m1 0h1m1 0h1m1 0h1m1 0h1m2 0h1m1 0h1m1 0h1m2 0h1m1 0h1m2 0h1M111 80.5h1m2 0h1m2 0h1m2 0h1m2 0h1m2 0h1m1 0h1m2 0h1m1 0h1m2 0h1m1 0h1m2 0h1m1 0h1m1 0h1m2 0h1m1 0h1m1 0h1m1 0h1m1 0h1m1 0h1m1 0h1m1 0h1m1 0h1m1 0h1m1 0h1m1 0h1m1 0h1m1 0h1m1 0h1m1 0h2m1 0h1m1 0h1m1 0h1m1 0h2m1 0h1m1 0h1m1 0h2m1 0h1m1 0h1m1 0h1m1 0h2m1 0h1m1 0h1m1 0h2m1 0h1m1 0h1m1 0h2m1 0h1m1 0h1m1 0h1m1 0h1m1 0h1m1 0h1m1 0h2m1 0h1m1 0h1m1 0h1m1 0h1m2 0h1m1 0h1m1 0h1m1 0h1m1 0h1m1 0h1m1 0h1m2 0h1m1 0h1m2 0h1m1 0h1M112 81.5h1m2 0h1m2 0h1m1 0h1m3 0h1m1 0h1m2 0h1m1 0h1m2 0h1m2 0h1m1 0h1m1 0h1m2 0h1m1 0h1m1 0h1m1 0h1m2 0h1m1 0h1m1 0h1m1 0h1m1 0h1m1 0h1m1 0h1m1 0h2m1 0h1m1 0h1m1 0h1m1 0h1m1 0h1m1 0h2m1 0h1m1 0h1m1 0h1m1 0h2m1 0h1m1 0h1m1 0h2m1 0h1m1 0h2m1 0h1m1 0h1m1 0h2m1 0h1m1 0h1m1 0h1m1 0h2m1 0h1m1 0h1m1 0h1m1 0h2m1 0h1m1 0h1m1 0h1m1 0h1m1 0h1m1 0h1m1 0h1m1 0h1m1 0h1m1 0h1m1 0h1m2 0h1m1 0h1m1 0h1m2 0h1m1 0h1m1 0h1m1 0h1M113 82.5h1m2 0h1m1 0h1m2 0h1m3 0h1m1 0h1m2 0h1m1 0h1m2 0h1m1 0h1m2 0h1m1 0h1m1 0h1m2 0h1m1 0h1m1 0h1m1 0h1m1 0h1m1 0h1m1 0h1m1 0h1m1 0h1m1 0h1m1 0h1m1 0h1m1 0h1m1 0h2m1 0h1m1 0h1m1 0h1m1 0h2m1 0h1m1 0h1m1 0h2m1 0h1m1 0h1m1 0h2m1 0h1m1 0h2m1 0h1m1 0h1m1 0h2m1 0h1m1 0h1m1 0h2m1 0h1m1 0h1m1 0h1m1 0h2m1 0h1m1 0h1m1 0h1m1 0h1m1 0h1m1 0h1m1 0h1m1 0h1m1 0h1m1 0h1m1 0h1m1 0h1m1 0h1m1 0h1m1 0h1m2 0h1m1 0h1m2 0h1m1 0h1M114 83.5h1m1 0h1m2 0h1m2 0h1m2 0h1m2 0h1m2 0h1m1 0h1m1 0h1m2 0h1m1 0h1m2 0h1m1 0h1m1 0h1m1 0h1m1 0h1m2 0h1m1 0h1m1 0h1m1 0h1m1 0h1m1 0h1m1 0h2m1 0h1m1 0h1m1 0h1m1 0h2m1 0h1m1 0h1m1 0h1m1 0h2m1 0h1m1 0h2m1 0h1m1 0h1m1 0h2m1 0h1m1 0h2m1 0h1m1 0h1m1 0h2m1 0h1m1 0h2m1 0h1m1 0h1m1 0h2m1 0h1m1 0h1m1 0h1m1 0h1m1 0h2m1 0h1m1 0h1m1 0h1m1 0h1m1 0h1m1 0h1m1 0h1m1 0h1m1 0h1m2 0h1m1 0h1m1 0h1m2 0h1m1 0h1m1 0h1M114 84.5h1m2 0h1m2 0h1m2 0h1m2 0h1m2 0h1m1 0h1m1 0h1m2 0h1m2 0h1m1 0h1m1 0h1m1 0h1m2 0h1m1 0h1m1 0h1m1 0h1m1 0h1m1 0h1m1 0h1m1 0h1m1 0h1m1 0h1m1 0h2m1 0h1m1 0h1m1 0h1m1 0h2m1 0h1m1 0h1m1 0h2m1 0h1m1 0h1m1 0h2m1 0h1m1 0h2m1 0h1m1 0h2m1 0h1m1 0h2m1 0h1m1 0h1m1 0h2m1 0h1m1 0h1m1 0h2m1 0h1m1 0h1m1 0h2m1 0h1m1 0h1m1 0h1m1 0h1m1 0h1m1 0h1m1 0h1m1 0h1m1 0h1m1 0h1m1 0h1m1 0h1m1 0h1m2 0h1m1 0h1m1 0h1m1 0h1m2 0h1M115 85.5h1m2 0h1m2 0h1m2 0h1m2 0h1m1 0h1m2 0h1m1 0h1m2 0h1m1 0h1m2 0h1m1 0h1m1 0h1m1 0h1m1 0h1m1 0h1m2 0h1m1 0h1m1 0h2m1 0h1m1 0h1m1 0h1m1 0h1m1 0h1m1 0h2m1 0h1m1 0h1m1 0h2m1 0h1m1 0h1m1 0h2m1 0h1m1 0h2m1 0h1m1 0h2m1 0h1m1 0h2m1 0h1m1 0h2m1 0h1m1 0h2m1 0h1m1 0h1m1 0h2m1 0h1m1 0h1m1 0h2m1 0h1m1 0h1m1 0h1m1 0h1m1 0h2m1 0h1m1 0h1m1 0h1m1 0h1m1 0h1m1 0h1m1 0h1m2 0h1m1 0h1m1 0h1m2 0h1m1 0h1m1 0h1M116 86.5h1m2 0h1m2 0h1m1 0h1m3 0h1m1 0h1m2 0h1m1 0h1m1 0h1m2 0h1m1 0h1m1 0h1m2 0h1m1 0h1m1 0h1m1 0h1m1 0h1m1 0h1m1 0h1m1 0h1m1 0h1m1 0h1m1 0h2m1 0h1m1 0h1m1 0h2m1 0h1m1 0h1m1 0h2m1 0h1m1 0h2m1 0h1m1 0h2m1 0h1m1 0h2m1 0h1m1 0h2m1 0h1m1 0h2m1 0h1m1 0h2m1 0h1m1 0h2m1 0h1m1 0h1m1 0h2m1 0h1m1 0h1m1 0h2m1 0h1m1 0h1m1 0h1m1 0h1m1 0h1m1 0h1m1 0h1m1 0h1m1 0h1m1 0h1m1 0h1m2 0h1m1 0h1m1 0h1m1 0h1m2 0h1M117 87.5h1m2 0h1m2 0h1m1 0h1m2 0h1m2 0h1m1 0h1m1 0h1m2 0h1m2 0h1m1 0h1m1 0h1m1 0h1m1 0h1m1 0h1m1 0h1m1 0h1m1 0h1m1 0h1m1 0h1m1 0h1m1 0h1m1 0h1m1 0h2m1 0h1m1 0h1m1 0h2m1 0h1m1 0h1m1 0h2m1 0h1m1 0h2m1 0h1m1 0h2m1 0h2m1 0h1m1 0h2m1 0h1m1 0h2m1 0h1m1 0h2m1 0h1m1 0h2m1 0h1m1 0h2m1 0h1m1 0h1m1 0h2m1 0h1m1 0h1m1 0h1m1 0h1m1 0h1m1 0h2m1 0h1m1 0h1m1 0h1m1 0h1m2 0h1m1 0h1m1 0h1m1 0h1m1 0h1m2 0h1m1 0h1M118 88.5h1m2 0h1m1 0h1m2 0h1m2 0h1m2 0h1m1 0h1m1 0h1m2 0h1m1 0h1m1 0h1m2 0h1m1 0h1m1 0h1m1 0h1m1 0h1m1 0h1m1 0h1m1 0h1m1 0h1m1 0h2m1 0h1m1 0h1m1 0h2m1 0h1m1 0h1m1 0h2m1 0h1m1 0h2m1 0h1m1 0h2m1 0h1m1 0h2m1 0h2m1 0h1m1 0h2m1 0h1m1 0h2m1 0h2m1 0h1m1 0h2m1 0h1m1 0h2m1 0h1m1 0h1m1 0h2m1 0h1m1 0h1m1 0h2m1 0h1m1 0h1m1 0h1m1 0h1m1 0h1m1 0h1m1 0h1m1 0h1m1 0h1m1 0h1m2 0h1m1 0h1m1 0h1m1 0h1m1 0h1M119 89.5h1m2 0h1m1 0h1m2 0h1m2 0h1m1 0h1m2 0h1m1 0h1m1 0h1m2 0h1m1 0h1m1 0h1m1 0h1m1 0h1m1 0h1m1 0h1m1 0h1m1 0h1m1 0h1m1 0h1m1 0h1m1 0h1m1 0h2m1 0h1m1 0h2m1 0h1m1 0h1m1 0h2m1 0h1m1 0h2m1 0h2m1 0h1m1 0h2m1 0h1m1 0h2m1 0h2m1 0h2m1 0h1m1 0h2m1 0h1m1 0h2m1 0h2m1 0h1m1 0h1m1 0h2m1 0h1m1 0h2m1 0h1m1 0h1m1 0h1m1 0h1m1 0h1m1 0h2m1 0h1m1 0h1m1 0h1m1 0h1m2 0h1m1 0h1m1 0h1m1 0h1m2 0h1m1 0h1M120 90.5h1m2 0h1m1 0h1m2 0h1m2 0h1m1 0h1m2 0h1m1 0h1m1 0h1m1 0h1m2 0h1m1 0h1m1 0h1m1 0h1m1 0h1m1 0h1m1 0h1m1 0h1m1 0h1m1 0h2m1 0h1m1 0h1m1 0h2m1 0h1m1 0h2m1 0h1m1 0h2m1 0h1m1 0h2m1 0h1m1 0h2m1 0h2m1 0h1m1 0h2m1 0h2m1 0h2m1 0h1m1 0h2m1 0h2m1 0h1m1 0h2m1 0h1m1 0h2m1 0h1m1 0h2m1 0h1m1 0h1m1 0h2m1 0h1m1 0h1m1 0h1m1 0h1m1 0h1m1 0h1m1 0h1m1 0h1m1 0h1m1 0h1m2 0h2m2 0h1m1 0h1M121 91.5h1m1 0h1m2 0h1m2 0h1m1 0h1m2 0h1m1 0h1m1 0h1m2 0h1m1 0h1m1 0h1m1 0h1m1 0h1m1 0h1m1 0h1m1 0h1m1 0h1m1 0h1m1 0h1m1 0h1m1 0h1m1 0h2m1 0h1m1 0h2m1 0h1m1 0h2m1 0h1m1 0h2m1 0h1m1 0h2m1 0h2m1 0h2m1 0h1m1 0h2m1 0h2m1 0h2m1 0h1m1 0h2m1 0h2m1 0h2m1 0h1m1 0h2m1 0h1m1 0h2m1 0h1m1 0h1m1 0h2m1 0h1m1 0h1m1 0h1m1 0h2m1 0h1m1 0h1m1 0h1m1 0h1m2 0h1m1 0h1m1 0h1m1 0h1m1 0h1m1 0h1m2 0h1M122 92.5h1m1 0h1m2 0h1m1 0h1m2 0h1m2 0h1m1 0h1m1 0h1m1 0h1m2 0h1m1 0h1m1 0h1m1 0h1m1 0h1m1 0h1m1 0h1m1 0h1m1 0h1m1 0h2m1 0h1m1 0h1m1 0h2m1 0h1m1 0h2m1 0h1m1 0h2m1 0h1m1 0h2m1 0h2m1 0h2m1 0h2m1 0h1m1 0h2m1 0h2m1 0h2m1 0h2m1 0h1m1 0h2m1 0h2m1 0h2m1 0h1m1 0h2m1 0h1m1 0h2m1 0h1m1 0h1m1 0h2m1 0h1m1 0h1m1 0h1m1 0h1m1 0h1m1 0h1m1 0h1m1 0h1m1 0h1m1 0h1m1 0h1m2 0h1m1 0h1m2 0h1M123 93.5h1m1 0h1m2 0h1m1 0h1m2 0h1m1 0h1m2 0h1m1 0h1m1 0h1m1 0h1m1 0h1m2 0h1m1 0h1m1 0h1m1 0h2m1 0h1m1 0h1m1 0h1m1 0h1m1 0h2m1 0h1m1 0h2m1 0h1m1 0h2m1 0h1m1 0h2m1 0h2m1 0h2m1 0h2m1 0h1m1 0h2m1 0h2m1 0h2m1 0h2m1 0h2m1 0h2m1 0h1m1 0h2m1 0h2m1 0h2m1 0h1m1 0h2m1 0h1m1 0h1m1 0h2m1 0h1m1 0h1m1 0h2m1 0h1m1 0h1m1 0h1m1 0h1m1 0h1m1 0h1m2 0h2m2 0h1m1 0h1m2 0h1M123 94.5h1m2 0h1m1 0h1m2 0h1m2 0h1m1 0h1m1 0h1m1 0h1m2 0h1m1 0h1m1 0h1m1 0h1m1 0h1m1 0h1m1 0h1m1 0h1m1 0h1m1 0h2m1 0h1m1 0h1m1 0h2m1 0h1m1 0h2m1 0h1m1 0h2m1 0h2m1 0h2m1 0h1m1 0h2m1 0h2m1 0h2m1 0h2m1 0h2m1 0h2m1 0h2m1 0h2m1 0h2m1 0h2m1 0h1m1 0h2m1 0h2m1 0h1m1 0h2m1 0h1m1 0h1m1 0h1m1 0h2m1 0h1m1 0h1m1 0h1m1 0h1m1 0h1m1 0h1m1 0h1m1 0h1m1 0h1m1 0h1m1 0h1m2 0h1m1 0h1M124 95.5h1m2 0h1m1 0h1m2 0h1m2 0h1m1 0h1m1 0h1m1 0h1m1 0h1m2 0h1m1 0h1m1 0h1m1 0h1m1 0h1m1 0h2m1 0h1m1 0h1m1 0h1m1 0h2m1 0h1m1 0h2m1 0h1m1 0h2m1 0h2m1 0h1m1 0h2m1 0h2m1 0h2m1 0h2m1 0h2m1 0h2m1 0h2m1 0h2m1 0h2m1 0h2m1 0h2m1 0h2m1 0h2m1 0h1m1 0h2m1 0h2m1 0h1m1 0h2m1 0h1m1 0h1m1 0h2m1 0h1m1 0h1m1 0h1m1 0h1m1 0h1m1 0h1m1 0h1m1 0h1m2 0h2m2 0h1m2 0h1M125 96.5h1m2 0h1m1 0h1m2 0h1m1 0h1m2 0h1m1 0h1m1 0h1m1 0h1m1 0h1m1 0h1m1 0h1m1 0h1m1 0h1m1 0h1m1 0h1m1 0h1m1 0h2m1 0h1m1 0h2m1 0h1m1 0h2m1 0h2m1 0h1m1 0h2m1 0h2m1 0h2m1 0h2m1 0h2m1 0h2m1 0h2m1 0h2m1 0h2m1 0h2m1 0h2m1 0h2m1 0h2m1 0h2m1 0h2m1 0h2m1 0h1m1 0h2m1 0h1m1 0h1m1 0h2m1 0h1m1 0h1m1 0h1m1 0h2m2 0h1m1 0h1m1 0h2m2 0h1m1 0h1m2 0h1m1 0h1M126 97.5h1m2 0h1m1 0h1m1 0h1m2 0h1m1 0h1m2 0h2m2 0h1m1 0h1m1 0h1m1 0h1m1 0h1m1 0h1m1 0h2m1 0h1m1 0h1m1 0h1m1 0h2m1 0h1m1 0h2m1 0h2m1 0h2m1 0h2m1 0h2m1 0h2m1 0h2m1 0h2m1 0h2m1 0h2m1 0h2m1 0h3m1 0h2m1 0h2m1 0h2m1 0h2m1 0h2m1 0h1m1 0h2m1 0h2m1 0h1m1 0h2m1 0h1m1 0h1m1 0h2m1 0h1m1 0h1m1 0h1m1 0h1m1 0h1m1 0h1m1 0h1m1 0h1m1 0h1m2 0h1m1 0h1m1 0h1M127 98.5h1m1 0h1m2 0h1m1 0h1m2 0h1m1 0h1m1 0h1m1 0h1m1 0h1m2 0h1m1 0h1m1 0h2m1 0h1m1 0h1m1 0h1m1 0h2m1 0h1m1 0h1m1 0h2m1 0h2m1 0h2m1 0h1m1 0h2m1 0h2m1 0h2m1 0h2m1 0h3m1 0h2m1 0h2m1 0h2m1 0h3m1 0h2m1 0h2m1 0h2m1 0h2m1 0h2m1 0h2m1 0h2m1 0h1m1 0h2m1 0h1m1 0h2m1 0h1m1 0h1m1 0h2m1 0h1m2 0h2m1 0h1m1 0h1m1 0h1m1 0h1m2 0h1m1 0h1m2 0h1M128 99.5h1m1 0h1m2 0h1m1 0h1m2 0h1m1 0h1m1 0h1m1 0h1m1 0h1m1 0h1m1 0h1m1 0h1m1 0h1m1 0h1m1 0h2m1 0h1m1 0h1m1 0h2m1 0h1m1 0h2m1 0h2m1 0h2m1 0h2m1 0h2m1 0h2m1 0h2m1 0h2m1 0h3m1 0h2m1 0h3m1 0h2m1 0h2m1 0h2m1 0h3m1 0h2m1 0h2m1 0h1m1 0h2m1 0h2m1 0h1m1 0h2m1 0h1m1 0h2m1 0h1m1 0h1m1 0h1m1 0h1m1 0h1m1 0h2m2 0h1m1 0h1m1 0h1m1 0h1m2 0h2M129 100.5h1m1 0h1m1 0h1m2 0h1m1 0h1m2 0h1m1 0h1m1 0h1m1 0h1m1 0h1m1 0h1m1 0h1m1 0h2m1 0h1m1 0h1m1 0h2m1 0h1m1 0h2m1 0h1m1 0h2m1 0h2m1 0h2m1 0h2m1 0h3m1 0h2m1 0h2m1 0h3m1 0h2m1 0h3m1 0h2m1 0h2m1 0h3m1 0h2m1 0h2m1 0h2m1 0h2m1 0h2m1 0h1m1 0h2m1 0h1m1 0h2m1 0h1m1 0h2m1 0h1m1 0h1m1 0h1m1 0h1m1 0h1m1 0h1m1 0h1m2 0h1m1 0h1m1 0h1m1 0h1M130 101.5h1m1 0h1m1 0h1m2 0h1m1 0h1m1 0h1m1 0h1m1 0h1m1 0h1m1 0h1m1 0h1m1 0h1m1 0h1m1 0h1m1 0h2m1 0h1m1 0h1m1 0h2m1 0h2m1 0h2m1 0h2m1 0h2m1 0h2m1 0h2m1 0h3m1 0h2m1 0h3m1 0h2m1 0h3m1 0h2m1 0h3m1 0h2m1 0h2m1 0h3m1 0h2m1 0h2m1 0h1m1 0h2m1 0h2m1 0h1m1 0h2m1 0h1m1 0h1m1 0h1m1 0h1m1 0h1m1 0h2m1 0h1m1 0h1m2 0h1m1 0h1m1 0h1m1 0h1M131 102.5h1m1 0h1m1 0h1m1 0h1m2 0h1m1 0h1m1 0h1m1 0h1m1 0h1m1 0h1m1 0h1m1 0h1m1 0h2m1 0h1m1 0h1m1 0h2m1 0h1m1 0h2m1 0h2m1 0h2m1 0h2m1 0h2m1 0h3m1 0h2m1 0h3m1 0h2m1 0h3m1 0h3m1 0h3m1 0h2m1 0h3m1 0h2m1 0h2m1 0h2m1 0h2m1 0h2m1 0h2m1 0h1m1 0h2m1 0h1m1 0h2m1 0h1m1 0h1m1 0h1m1 0h2m2 0h1m1 0h1m1 0h1m1 0h1m1 0h1m1 0h1m2 0h1M131 103.5h1m2 0h1m1 0h1m1 0h1m2 0h1m1 0h1m1 0h1m1 0h1m1 0h1m1 0h1m1 0h2m1 0h1m1 0h1m1 0h2m1 0h1m1 0h2m1 0h1m1 0h2m1 0h3m1 0h2m1 0h2m1 0h2m1 0h3m1 0h3m1 0h2m1 0h3m1 0h3m1 0h3m1 0h3m1 0h2m1 0h3m1 0h2m1 0h2m1 0h2m1 0h2m1 0h1m1 0h2m1 0h2m1 0h1m1 0h1m1 0h1m1 0h2m1 0h1m1 0h1m1 0h1m1 0h1m1 0h1m1 0h1m2 0h2m2 0h1M132 104.5h1m2 0h1m1 0h1m1 0h1m1 0h1m2 0h1m1 0h2m1 0h1m1 0h1m1 0h1m1 0h1m1 0h1m1 0h2m1 0h1m1 0h2m1 0h2m1 0h2m1 0h2m1 0h2m1 0h2m1 0h3m1 0h2m1 0h3m1 0h3m1 0h3m1 0h3m1 0h3m1 0h3m1 0h3m1 0h2m1 0h2m1 0h3m1 0h2m1 0h1m1 0h2m1 0h2m1 0h1m1 0h2m1 0h1m1 0h1m1 0h1m1 0h2m1 0h1m1 0h1m2 0h1m1 0h1m1 0h2m2 0h1M133 105.5h1m1 0h1m2 0h1m1 0h1m1 0h1m1 0h1m1 0h1m1 0h1m1 0h1m1 0h1m1 0h1m1 0h2m1 0h1m1 0h2m1 0h1m1 0h2m1 0h2m1 0h2m1 0h2m1 0h3m1 0h2m1 0h3m1 0h3m1 0h3m1 0h3m1 0h3m1 0h3m1 0h3m1 0h3m1 0h3m1 0h2m1 0h2m1 0h2m1 0h2m1 0h2m1 0h2m1 0h1m1 0h2m1 0h1m1 0h1m1 0h1m1 0h1m1 0h2m2 0h1m1 0h1m1 0h1m3 0h1m2 0h1M134 106.5h1m1 0h1m1 0h1m2 0h1m1 0h1m1 0h1m1 0h1m1 0h1m1 0h1m1 0h2m1 0h1m1 0h1m1 0h2m1 0h1m1 0h2m1 0h2m1 0h2m1 0h3m1 0h2m1 0h3m1 0h3m1 0h3m1 0h3m1 0h3m1 0h4m1 0h3m1 0h3m1 0h3m1 0h2m1 0h3m1 0h2m1 0h2m1 0h2m1 0h2m1 0h1m1 0h2m1 0h1m1 0h1m1 0h2m1 0h1m1 0h1m1 0h1m1 0h1m1 0h1m1 0h1m1 0h1m1 0h1m2 0h1M135 107.5h1m1 0h1m1 0h1m1 0h1m2 0h1m1 0h1m1 0h2m1 0h1m1 0h1m1 0h1m1 0h1m1 0h2m1 0h2m1 0h1m1 0h2m1 0h2m1 0h2m1 0h3m1 0h3m1 0h3m1 0h3m1 0h4m1 0h3m1 0h4m1 0h3m1 0h3m1 0h3m1 0h3m1 0h3m1 0h2m1 0h2m1 0h2m1 0h2m1 0h1m1 0h2m1 0h1m1 0h1m1 0h2m1 0h1m1 0h1m1 0h1m1 0h1m1 0h1m2 0h2m2 0h1m1 0h1M136 108.5h1m1 0h1m1 0h1m1 0h1m2 0h1m1 0h2m1 0h1m1 0h1m1 0h1m1 0h2m1 0h1m1 0h2m1 0h1m1 0h2m1 0h2m1 0h3m1 0h3m1 0h2m1 0h3m1 0h4m1 0h3m1 0h4m1 0h4m1 0h4m1 0h3m1 0h3m1 0h3m1 0h2m1 0h3m1 0h2m1 0h2m1 0h1m1 0h2m1 0h1m1 0h2m1 0h1m1 0h1m1 0h2m2 0h1m1 0h1m1 0h1m1 0h2m2 0h1m1 0h1M137 109.5h1m1 0h1m1 0h1m1 0h1m1 0h1m1 0h1m1 0h1m1 0h1m1 0h1m1 0h2m1 0h1m1 0h2m1 0h2m1 0h1m1 0h2m1 0h3m1 0h3m1 0h3m1 0h3m1 0h3m1 0h4m1 0h4m1 0h4m1 0h4m1 0h4m1 0h3m1 0h3m1 0h2m1 0h3m1 0h2m1 0h2m1 0h2m1 0h1m1 0h1m1 0h2m1 0h1m1 0h1m1 0h1m1 0h1m1 0h1m1 0h1m1 0h1m1 0h1m1 0h1m1 0h1M138 110.5h1m1 0h1m1 0h1m1 0h1m1 0h1m1 0h1m1 0h2m1 0h1m1 0h1m1 0h1m1 0h2m1 0h2m1 0h1m1 0h3m1 0h2m1 0h2m1 0h4m1 0h3m1 0h4m1 0h4m1 0h4m1 0h5m1 0h4m1 0h3m1 0h4m1 0h3m1 0h2m1 0h2m1 0h3m1 0h2m1 0h1m1 0h2m1 0h1m1 0h2m1 0h1m1 0h1m1 0h1m1 0h1m1 0h1m1 0h1m1 0h1m1 0h1m1 0h1m2 0h1M139 111.5h1m1 0h1m1 0h1m1 0h1m1 0h1m1 0h1m1 0h2m1 0h1m1 0h1m1 0h2m1 0h2m1 0h2m1 0h2m1 0h2m1 0h3m1 0h3m1 0h3m1 0h4m1 0h5m1 0h4m1 0h5m1 0h4m1 0h4m1 0h4m1 0h3m1 0h2m1 0h2m1 0h3m1 0h2m1 0h1m1 0h2m1 0h1m1 0h1m1 0h2m1 0h1m1 0h1m1 0h1m1 0h1m1 0h1m1 0h1m1 0h1m2 0h1M139 112.5h1m1 0h1m1 0h1m1 0h1m2 0h1m1 0h2m1 0h1m1 0h1m1 0h2m1 0h2m1 0h2m1 0h2m1 0h2m1 0h2m1 0h4m1 0h3m1 0h4m1 0h5m1 0h5m1 0h5m1 0h5m1 0h4m1 0h4m1 0h3m1 0h2m1 0h3m1 0h2m1 0h2m1 0h1m1 0h1m1 0h2m1 0h2m2 0h2m1 0h1m2 0h2m1 0h1m1 0h1m2 0h1m1 0h1M140 113.5h1m1 0h1m1 0h1m1 0h1m1 0h1m1 0h1m1 0h1m1 0h2m1 0h1m1 0h2m1 0h1m1 0h3m1 0h2m1 0h2m1 0h3m1 0h4m1 0h5m1 0h5m1 0h5m1 0h6m1 0h5m1 0h4m1 0h4m1 0h3m1 0h2m1 0h3m1 0h2m1 0h1m1 0h2m1 0h2m1 0h1m1 0h1m1 0h1m1 0h1m1 0h1m1 0h2m2 0h2m2 0h1m1 0h1M141 114.5h1m1 0h1m1 0h1m1 0h1m1 0h1m1 0h1m1 0h2m1 0h1m1 0h2m1 0h1m1 0h2m1 0h3m1 0h2m1 0h3m1 0h4m1 0h5m1 0h5m1 0h6m1 0h6m1 0h6m1 0h4m1 0h4m1 0h3m1 0h3m1 0h2m1 0h2m1 0h1m1 0h2m1 0h2m1 0h1m1 0h1m1 0h1m1 0h1m1 0h2m2 0h2m2 0h1m1 0h1M142 115.5h1m1 0h1m1 0h1m1 0h1m1 0h1m1 0h1m1 0h2m1 0h2m1 0h1m1 0h2m1 0h3m1 0h2m1 0h3m1 0h4m1 0h5m1 0h5m1 0h7m1 0h7m1 0h6m1 0h4m1 0h4m1 0h3m1 0h3m1 0h2m1 0h2m1 0h1m1 0h2m1 0h2m1 0h1m1 0h1m1 0h1m1 0h2m2 0h2m2 0h1m1 0h1m2 0h1M143 116.5h1m1 0h1m1 0h1m1 0h1m1 0h1m1 0h2m1 0h2m1 0h1m1 0h2m1 0h2m1 0h3m1 0h3m1 0h3m1 0h5m1 0h7m1 0h7m1 0h8m1 0h6m1 0h5m1 0h3m1 0h3m1 0h3m1 0h2m1 0h2m1 0h2m1 0h1m1 0h1m1 0h2m1 0h1m1 0h1m1 0h1m1 0h1m3 0h1m1 0h1m2 0h1M144 117.5h1m1 0h1m1 0h2m2 0h2m1 0h2m1 0h1m1 0h2m1 0h2m1 0h2m1 0h3m1 0h4m1 0h5m1 0h7m1 0h8m1 0h9m1 0h6m1 0h5m1 0h3m1 0h4m1 0h2m1 0h2m1 0h2m1 0h2m1 0h1m1 0h1m1 0h2m1 0h1m1 0h1m1 0h1m1 0h1m1 0h1m1 0h1m2 0h1m1 0h1M145 118.5h1m1 0h2m1 0h1m1 0h1m1 0h1m1 0h2m1 0h2m1 0h2m1 0h2m1 0h3m1 0h3m1 0h6m1 0h6m1 0h10m1 0h10m1 0h7m1 0h5m1 0h3m1 0h3m1 0h2m1 0h2m1 0h2m1 0h2m1 0h1m1 0h1m1 0h1m1 0h2m1 0h1m1 0h1m1 0h1m1 0h1m2 0h1m1 0h1M146 119.5h1m1 0h2m1 0h1m1 0h1m1 0h2m1 0h2m1 0h1m1 0h3m1 0h2m1 0h4m1 0h4m1 0h8m1 0h11m1 0h12m1 0h7m1 0h4m1 0h4m1 0h2m1 0h2m1 0h3m1 0h2m1 0h1m1 0h1m1 0h1m1 0h2m1 0h1m1 0h1m1 0h1m1 0h1m2 0h1m1 0h1m1 0h1M147 120.5h2m1 0h1m1 0h1m1 0h2m1 0h2m1 0h1m1 0h2m1 0h3m1 0h3m1 0h4m1 0h8m1 0h13m1 0h14m1 0h7m1 0h4m1 0h3m1 0h2m1 0h3m1 0h2m1 0h1m1 0h2m1 0h1m1 0h2m1 0h1m2 0h2m1 0h1m2 0h1m1 0h1m1 0h1M147 121.5h1m1 0h1m1 0h1m1 0h1m1 0h2m1 0h2m1 0h2m1 0h2m1 0h3m1 0h4m1 0h7m1 0h17m1 0h15m1 0h7m1 0h4m1 0h3m1 0h2m1 0h2m1 0h2m1 0h1m1 0h2m1 0h2m1 0h1m2 0h2m1 0h1m2 0h1m1 0h1m1 0h1m1 0h1M148 122.5h1m1 0h1m1 0h2m1 0h1m1 0h1m1 0h3m1 0h2m1 0h3m1 0h3m1 0h6m1 0h20m1 0h18m1 0h5m1 0h5m1 0h2m1 0h3m1 0h2m1 0h1m1 0h2m1 0h1m1 0h1m1 0h1m1 0h2m1 0h1m2 0h1m1 0h1m1 0h1m1 0h1M149 123.5h1m1 0h1m1 0h2m1 0h1m1 0h3m1 0h1m1 0h3m1 0h3m1 0h5m1 0h28m1 0h15m1 0h6m1 0h3m1 0h2m1 0h3m1 0h2m1 0h1m1 0h2m1 0h1m1 0h1m1 0h2m1 0h1m2 0h3m1 0h1m1 0h1m1 0h1M150 124.5h1m1 0h2m1 0h1m1 0h2m1 0h2m1 0h2m1 0h3m1 0h5m1 0h12m1 0h25m1 0h10m1 0h5m1 0h3m1 0h2m1 0h2m1 0h2m1 0h1m1 0h2m1 0h1m1 0h2m1 0h1m2 0h2m1 0h2m1 0h1m1 0h1M130 125.5h2m19 0h1m1 0h2m1 0h1m1 0h2m1 0h3m1 0h2m1 0h4m1 0h8m1 0h37m1 0h8m1 0h3m1 0h4m1 0h2m1 0h2m1 0h1m1 0h2m1 0h1m1 0h2m1 0h1m1 0h3m1 0h1m1 0h2m1 0h1m1 0h1M132 126.5h1m19 0h1m1 0h2m1 0h2m1 0h2m1 0h3m1 0h3m1 0h6m1 0h45m1 0h6m1 0h3m1 0h4m1 0h1m1 0h2m1 0h2m1 0h1m1 0h2m1 0h1m1 0h1m1 0h1m1 0h1m1 0h1m1 0h2m1 0h1M130 127.5h2m1 0h1m19 0h2m1 0h2m1 0h1m1 0h3m1 0h3m1 0h4m1 0h53m1 0h4m1 0h3m1 0h3m1 0h2m1 0h2m1 0h1m1 0h1m1 0h2m1 0h1m1 0h1m1 0h1m1 0h1m1 0h1m1 0h2m1 0h1M132 128.5h1m1 0h1m19 0h2m1 0h2m1 0h2m1 0h3m1 0h3m1 0h9m1 0h39m1 0h9m1 0h4m1 0h2m1 0h2m1 0h3m1 0h1m1 0h1m1 0h2m1 0h1m1 0h1m1 0h1m1 0h1m1 0h1m1 0h1m1 0h2M130 129.5h2m1 0h1m1 0h2m18 0h2m1 0h2m1 0h2m1 0h4m1 0h5m1 0h51m1 0h5m1 0h4m1 0h2m1 0h2m1 0h2m1 0h1m1 0h2m1 0h1m1 0h1m1 0h1m1 0h1m1 0h1m1 0h1m1 0h1m1 0h2M130 130.5h1m1 0h1m1 0h2m1 0h1m18 0h3m1 0h1m1 0h4m1 0h4m1 0h57m1 0h5m1 0h2m1 0h2m1 0h3m1 0h1m1 0h2m1 0h1m1 0h1m1 0h1m1 0h1m1 0h1m1 0h1m1 0h1m1 0h1m1 0h1M131 131.5h1m1 0h2m1 0h1m1 0h1m17 0h1m1 0h2m1 0h2m1 0h4m1 0h6m1 0h49m1 0h7m1 0h2m1 0h3m1 0h2m1 0h2m1 0h2m1 0h1m1 0h1m1 0h1m1 0h1m1 0h1m1 0h1m1 0h1m1 0h1m1 0h1M130 132.5h1m1 0h1m2 0h1m1 0h1m1 0h1m17 0h1m1 0h3m1 0h2m1 0h4m1 0h58m1 0h5m1 0h3m1 0h2m1 0h2m1 0h2m1 0h1m1 0h1m1 0h1m1 0h1m1 0h7m1 0h1m1 0h1M131 133.5h1m1 0h2m1 0h1m1 0h1m1 0h2m16 0h1m1 0h3m1 0h4m1 0h7m1 0h47m1 0h9m1 0h2m1 0h3m1 0h1m1 0h3m1 0h1m1 0h1m1 0h1m1 0h4m1 0h1m1 0h1m1 0h2m1 0h1M130 134.5h1m1 0h2m1 0h1m1 0h4m1 0h1m16 0h2m1 0h2m1 0h5m1 0h60m1 0h3m1 0h4m1 0h1m1 0h3m1 0h1m1 0h1m1 0h4m1 0h1m1 0h1m1 0h1m1 0h1m1 0h2m1 0h1M131 135.5h2m1 0h1m1 0h2m1 0h1m1 0h1m1 0h1m16 0h2m1 0h3m1 0h8m1 0h50m1 0h6m1 0h5m1 0h1m1 0h3m1 0h1m1 0h1m1 0h2m1 0h1m1 0h1m1 0h1m1 0h1m1 0h1m1 0h1m1 0h2M130 136.5h2m1 0h1m1 0h2m1 0h1m1 0h1m1 0h1m1 0h1m16 0h3m1 0h3m1 0h63m1 0h3m1 0h3m1 0h3m1 0h1m1 0h1m1 0h2m1 0h1m1 0h1m1 0h7m1 0h1m1 0h2M130 137.5h1m1 0h1m1 0h2m1 0h1m1 0h1m1 0h6m15 0h3m1 0h6m1 0h54m1 0h1m1 0h5m1 0h3m1 0h3m1 0h1m1 0h4m1 0h6m1 0h1m1 0h1m1 0h2m1 0h1m1 0h1M131 138.5h1m1 0h2m1 0h1m1 0h4m1 0h1m1 0h1m1 0h1m15 0h4m1 0h65m1 0h4m1 0h3m1 0h1m1 0h2m1 0h1m1 0h2m1 0h1m1 0h1m1 0h1m1 0h1m1 0h1m1 0h2m1 0h1M130 139.5h1m1 0h2m1 0h1m1 0h2m1 0h1m1 0h1m1 0h1m1 0h1m1 0h1m15 0h5m1 0h60m1 0h6m1 0h3m1 0h1m1 0h2m1 0h4m1 0h9m1 0h1m1 0h4M131 140.5h2m1 0h1m1 0h2m1 0h1m1 0h9m14 0h1m1 0h61m1 0h7m1 0h5m2 0h2m1 0h2m1 0h1m1 0h2m1 0h1m1 0h1m1 0h1m1 0h4m1 0h1m1 0h1M130 141.5h2m1 0h4m1 0h4m1 0h1m1 0h1m1 0h1m1 0h3m13 0h2m1 0h66m1 0h5m2 0h2m1 0h2m1 0h4m1 0h1m1 0h1m1 0h1m1 0h1m1 0h1m1 0h2m1 0h1M130 142.5h1m1 0h2m1 0h1m1 0h2m1 0h1m1 0h1m1 0h1m1 0h1m1 0h1m1 0h1m1 0h1m13 0h3m1 0h61m1 0h1m1 0h5m2 0h2m1 0h2m1 0h2m1 0h11m1 0h1m1 0h2m2 0h1M131 143.5h2m1 0h1m1 0h2m1 0h1m1 0h13m13 0h4m1 0h53m1 0h1m1 0h10m2 0h11m1 0h1m1 0h1m1 0h1m1 0h1m1 0h4m2 0h3M130 144.5h2m1 0h1m1 0h2m1 0h4m1 0h1m1 0h1m1 0h1m1 0h1m1 0h1m1 0h2m13 0h69m2 0h3m1 0h2m1 0h2m1 0h11m1 0h1m2 0h2m1 0h1M130 145.5h1m1 0h4m1 0h2m1 0h1m1 0h11m1 0h3m12 0h72m1 0h8m1 0h1m1 0h1m1 0h1m1 0h1m1 0h3m1 0h1m1 0h2m1 0h1M131 146.5h2m1 0h1m1 0h2m1 0h4m1 0h1m1 0h1m1 0h1m1 0h1m1 0h4m1 0h1m12 0h61m1 0h3m1 0h11m1 0h11m1 0h1m2 0h2m1 0h3M130 147.5h2m1 0h4m1 0h2m1 0h1m1 0h11m1 0h4m12 0h59m1 0h3m1 0h1m1 0h3m1 0h3m1 0h4m1 0h1m1 0h1m1 0h1m1 0h1m1 0h2m1 0h2m1 0h4M130 148.5h1m1 0h2m1 0h4m1 0h4m1 0h1m1 0h5m1 0h4m1 0h2m12 0h57m1 0h3m1 0h1m1 0h22m1 0h2m1 0h4m1 0h2M131 149.5h2m1 0h2m1 0h4m1 0h6m1 0h1m1 0h11m10 0h74m1 0h9m2 0h1m1 0h4m1 0h2m1 0h1M130 150.5h2m1 0h2m1 0h2m1 0h4m1 0h11m1 0h7m10 0h59m1 0h7m1 0h2m1 0h4m1 0h1m1 0h1m1 0h1m1 0h2m1 0h4m1 0h2m1 0h2M130 151.5h1m1 0h2m1 0h2m1 0h2m1 0h4m1 0h1m1 0h5m1 0h10m10 0h59m1 0h21m1 0h2m1 0h1m1 0h2m1 0h2m1 0h2M131 152.5h2m1 0h2m1 0h2m1 0h2m1 0h6m1 0h1m1 0h6m1 0h2m1 0h4m9 0h57m1 0h20m1 0h2m1 0h4m1 0h5m1 0h1M130 153.5h2m1 0h11m1 0h22m9 0h55m1 0h13m1 0h6m1 0h1m1 0h9m1 0h4M130 154.5h1m1 0h3m1 0h2m1 0h2m1 0h4m1 0h21m9 0h74m2 0h6m1 0h2m1 0h2m1 0h2M131 155.5h3m1 0h2m1 0h2m1 0h2m1 0h4m1 0h20m9 0h69m1 0h1m2 0h6m1 0h8m1 0h2M130 156.5h3m1 0h16m1 0h20m8 0h50m1 0h30m1 0h2m1 0h5M130 157.5h2m1 0h3m1 0h2m1 0h2m1 0h2m1 0h26m8 0h48m1 0h26m1 0h8m1 0h2m1 0h1M130 158.5h1m1 0h3m1 0h37m7 0h66m1 0h11m1 0h2m1 0h6M131 159.5h3m1 0h3m1 0h35m7 0h64m1 0h19m1 0h3M130 160.5h3m1 0h3m1 0h3m1 0h2m1 0h2m1 0h28m6 0h71m1 0h5m1 0h2m1 0h3m1 0h2M130 161.5h2m1 0h44m6 0h59m1 0h13m1 0h6m1 0h3m1 0h1M130 162.5h1m1 0h4m1 0h3m1 0h37m6 0h57m1 0h26M131 163.5h4m1 0h43m6 0h55m1 0h19m1 0h3m1 0h4M130 164.5h4m1 0h4m1 0h3m1 0h37m5 0h79m1 0h3M130 165.5h3m1 0h4m1 0h43m5 0h50m1 0h19m1 0h3m1 0h4m1 0h2M130 166.5h2m1 0h50m5 0h48m1 0h30m1 0h1M130 167.5h1m1 0h5m1 0h4m1 0h41m5 0h73m1 0h5M131 168.5h5m1 0h49m3 0h74m1 0h5M130 169.5h5m1 0h51m3 0h42m1 0h36M130 170.5h4m1 0h6m1 0h46m3 0h67m1 0h5m1 0h4M130 171.5h3m1 0h55m2 0h74m2 0h2M130 172.5h1m2 0h7m1 0h126m1 0h1M131 173.5h128m1 0h8M130 174.5h9m1 0h129M130 175.5h8m1 0h95m1 0h34M130 176.5h6m2 0h122m1 0h8M130 177.5h3m3 0h125m1 0h7M133 178.5h106m1 0h22m3 0h4M130 179.5h112m1 0h22M130 180.5h113m1 0h25M130 181.5h139M130 182.5h117m1 0h21M131 183.5h118m1 0h19M130 184.5h1m4 0h116m1 0h17M130 185.5h5m2 0h116m1 0h15M130 186.5h7m1 0h117m1 0h11M130 187.5h8m1 0h117m1 0h8m2 0h2M130 188.5h9m1 0h117m1 0h6m1 0h4M132 189.5h129m1 0h7M130 190.5h2m2 0h6m1 0h121m2 0h5M130 191.5h4m1 0h126m1 0h5m1 0h1M130 192.5h5m1 0h5m1 0h125M131 193.5h5m1 0h94m1 0h28m1 0h5m1 0h1M130 194.5h1m1 0h100m1 0h32m1 0h2M130 195.5h2m1 0h4m1 0h4m1 0h121m1 0h3M130 196.5h3m1 0h4m1 0h7m1 0h87m1 0h24m1 0h3m1 0h4M130 197.5h4m1 0h101m1 0h18m1 0h11M131 198.5h4m1 0h3m1 0h3m1 0h118m1 0h5M130 199.5h1m1 0h4m1 0h101m1 0h19m1 0h7m1 0h1M130 200.5h2m1 0h7m1 0h98m1 0h21m1 0h3m1 0h2M130 201.5h3m1 0h3m1 0h126m1 0h3M131 202.5h3m1 0h3m1 0h2m1 0h2m1 0h2m1 0h78m1 0h30m1 0h2m1 0h6M130 203.5h1m1 0h3m1 0h91m1 0h15m1 0h19m1 0h2m1 0h1M130 204.5h2m1 0h3m1 0h2m1 0h2m1 0h85m1 0h15m1 0h9m1 0h7m1 0h5M130 205.5h3m1 0h11m1 0h6m1 0h1m1 0h17m1 0h56m1 0h15m1 0h10m1 0h2m1 0h5m1 0h2M131 206.5h3m1 0h2m1 0h2m1 0h2m1 0h4m1 0h1m1 0h79m1 0h16m1 0h13m1 0h2m1 0h3M130 207.5h1m1 0h3m1 0h2m1 0h7m1 0h9m1 0h74m1 0h16m2 0h1m1 0h6m1 0h8M130 208.5h2m1 0h8m1 0h2m1 0h87m1 0h13m1 0h1m1 0h4m1 0h1m1 0h4m1 0h2m1 0h2m1 0h1M131 209.5h2m1 0h2m1 0h2m1 0h2m1 0h22m1 0h67m1 0h7m1 0h8m1 0h6m1 0h4m1 0h2m1 0h2M130 210.5h1m1 0h2m1 0h2m1 0h2m1 0h6m1 0h1m1 0h1m1 0h1m1 0h4m1 0h2m1 0h72m1 0h9m1 0h7m1 0h6m1 0h4m1 0h2M130 211.5h2m1 0h2m1 0h2m1 0h4m1 0h1m1 0h9m1 0h9m1 0h70m1 0h12m1 0h1m1 0h1m2 0h1m1 0h4m1 0h6M131 212.5h2m1 0h2m1 0h4m1 0h22m1 0h72m1 0h9m1 0h5m1 0h4m1 0h4m1 0h2m1 0h1M130 213.5h1m1 0h2m1 0h4m1 0h4m1 0h1m1 0h1m1 0h1m1 0h1m1 0h4m1 0h2m1 0h2m1 0h5m1 0h68m1 0h3m1 0h2m1 0h9m1 0h4m1 0h1m1 0h2m1 0h2M130 214.5h2m1 0h4m1 0h2m1 0h1m1 0h11m1 0h4m1 0h2m1 0h5m1 0h66m1 0h3m1 0h8m1 0h1m1 0h1m1 0h1m1 0h1m2 0h1m1 0h4m1 0h2M131 215.5h2m1 0h1m1 0h2m1 0h4m1 0h1m1 0h1m1 0h1m1 0h1m1 0h4m1 0h10m1 0h68m1 0h5m1 0h3m1 0h11m1 0h2m1 0h4m1 0h1M130 216.5h1m1 0h2m1 0h1m1 0h2m1 0h1m1 0h11m1 0h7m1 0h4m1 0h62m1 0h7m1 0h2m1 0h2m1 0h7m1 0h1m1 0h1m1 0h1m1 0h1m2 0h2m1 0h1m1 0h2M130 217.5h2m1 0h4m1 0h4m1 0h1m1 0h1m1 0h1m1 0h1m1 0h4m1 0h2m1 0h1m1 0h4m1 0h66m1 0h5m1 0h2m1 0h5m1 0h1m1 0h9m1 0h2m1 0h1m1 0h2M131 218.5h2m1 0h1m1 0h2m1 0h1m1 0h11m1 0h1m1 0h2m1 0h6m1 0h6m1 0h62m1 0h4m1 0h2m1 0h1m1 0h5m1 0h1m1 0h1m1 0h1m1 0h1m1 0h1m2 0h4m1 0h1M130 219.5h1m1 0h2m1 0h1m1 0h2m1 0h1m1 0h1m1 0h1m1 0h1m1 0h1m1 0h1m1 0h1m1 0h2m1 0h2m1 0h3m1 0h4m1 0h66m1 0h4m1 0h2m1 0h18m2 0h1m1 0h2M130 220.5h2m1 0h2m1 0h1m1 0h4m1 0h1m1 0h1m1 0h1m1 0h7m1 0h1m1 0h3m1 0h3m1 0h62m1 0h6m1 0h7m2 0h2m1 0h2m1 0h1m1 0h1m1 0h1m1 0h1m1 0h1m1 0h2m1 0h2M131 221.5h2m1 0h4m1 0h1m1 0h9m1 0h1m1 0h2m1 0h1m1 0h2m1 0h4m1 0h66m1 0h5m1 0h2m1 0h3m2 0h2m1 0h2m1 0h1m1 0h1m1 0h1m1 0h1m1 0h2m1 0h1m2 0h1M130 222.5h1m1 0h2m1 0h1m1 0h2m1 0h1m1 0h1m1 0h1m1 0h1m1 0h1m1 0h1m1 0h2m1 0h1m1 0h2m1 0h3m1 0h5m1 0h64m1 0h4m1 0h2m1 0h3m2 0h2m1 0h11m1 0h1m1 0h2M131 223.5h1m1 0h2m1 0h1m1 0h2m1 0h1m1 0h1m1 0h1m1 0h1m1 0h4m1 0h1m1 0h2m1 0h3m1 0h4m1 0h61m1 0h6m1 0h3m1 0h2m1 0h4m1 0h4m1 0h1m1 0h1m1 0h1m1 0h1m1 0h1m1 0h2M130 224.5h1m1 0h1m1 0h2m1 0h1m1 0h8m1 0h4m1 0h1m1 0h2m1 0h3m1 0h3m1 0h6m1 0h59m1 0h4m1 0h3m1 0h2m1 0h2m1 0h1m1 0h1m1 0h4m1 0h1m1 0h1m1 0h4m1 0h1M130 225.5h2m1 0h1m1 0h2m1 0h1m1 0h1m1 0h1m1 0h1m1 0h4m2 0h1m1 0h2m1 0h3m1 0h2m1 0h5m1 0h56m1 0h7m1 0h4m1 0h2m1 0h2m1 0h2m1 0h1m1 0h1m1 0h1m1 0h7m1 0h1m1 0h1M131 226.5h2m1 0h1m1 0h2m1 0h1m1 0h1m1 0h1m1 0h1m1 0h2m2 0h4m1 0h2m1 0h3m1 0h3m1 0h8m1 0h55m1 0h4m1 0h3m1 0h2m1 0h2m1 0h2m1 0h1m1 0h1m1 0h1m1 0h1m1 0h1m1 0h1m1 0h1m1 0h1m1 0h1M130 227.5h1m1 0h2m1 0h1m1 0h2m1 0h1m1 0h1m1 0h1m1 0h2m2 0h2m1 0h1m1 0h2m1 0h2m1 0h3m1 0h5m1 0h53m1 0h8m1 0h4m1 0h2m1 0h2m1 0h2m1 0h2m1 0h1m1 0h3m1 0h1m1 0h1m1 0h1m1 0h1m1 0h2M131 228.5h1m2 0h1m1 0h1m1 0h4m1 0h1m1 0h2m2 0h2m1 0h1m1 0h2m1 0h2m1 0h3m1 0h3m1 0h8m1 0h53m1 0h4m1 0h3m1 0h3m1 0h1m1 0h2m1 0h2m1 0h1m2 0h2m1 0h1m1 0h1m1 0h1m1 0h2M130 229.5h1m1 0h2m1 0h1m1 0h1m1 0h1m2 0h4m2 0h2m1 0h1m1 0h2m1 0h2m1 0h2m1 0h3m1 0h5m1 0h52m1 0h8m1 0h3m1 0h3m1 0h2m1 0h1m1 0h2m1 0h2m1 0h1m2 0h9m1 0h1M131 230.5h1m1 0h2m1 0h1m1 0h1m1 0h3m1 0h1m2 0h2m1 0h1m1 0h2m1 0h2m1 0h2m1 0h2m1 0h4m1 0h6m1 0h53m1 0h5m1 0h3m1 0h2m1 0h2m1 0h2m1 0h1m1 0h2m1 0h1m2 0h1m1 0h1m1 0h1m1 0h1m1 0h1M130 231.5h1m1 0h1m1 0h2m1 0h1m1 0h1m1 0h1m1 0h1m1 0h3m1 0h1m1 0h2m1 0h1m1 0h2m1 0h3m1 0h3m1 0h4m1 0h53m1 0h6m1 0h4m1 0h2m1 0h2m1 0h2m1 0h2m1 0h1m1 0h4m2 0h1m1 0h1m1 0h1m1 0h1m1 0h1M131 232.5h1m1 0h1m1 0h2m1 0h1m1 0h1m1 0h1m1 0h1m1 0h1m1 0h1m1 0h2m1 0h1m1 0h2m1 0h2m1 0h3m1 0h3m1 0h5m1 0h54m1 0h4m1 0h3m1 0h3m1 0h2m1 0h1m1 0h2m1 0h1m1 0h1m1 0h2m2 0h1m1 0h1m1 0h1m1 0h1M130 233.5h1m1 0h1m1 0h1m2 0h1m1 0h4m2 0h1m1 0h1m1 0h2m1 0h1m1 0h2m1 0h2m1 0h2m1 0h3m1 0h4m1 0h7m1 0h46m1 0h5m1 0h3m1 0h3m1 0h2m1 0h2m1 0h1m1 0h2m1 0h1m1 0h1m1 0h2m2 0h1m1 0h1m1 0h1m1 0h1M131 234.5h1m1 0h1m2 0h1m1 0h2m1 0h1m2 0h1m1 0h1m1 0h2m1 0h1m1 0h2m1 0h1m1 0h2m1 0h3m1 0h3m1 0h4m1 0h48m1 0h7m1 0h3m1 0h3m1 0h2m1 0h2m1 0h2m1 0h1m1 0h2m1 0h1m1 0h1m1 0h3m1 0h1m1 0h1m1 0h2M130 235.5h1m1 0h3m1 0h3m1 0h1m2 0h1m1 0h1m1 0h2m1 0h1m1 0h1m1 0h2m1 0h2m1 0h2m1 0h3m1 0h3m1 0h6m1 0h39m1 0h9m1 0h4m1 0h3m1 0h3m1 0h2m1 0h2m1 0h1m1 0h1m1 0h2m1 0h1m1 0h1m1 0h1m1 0h1m1 0h4M131 236.5h2m2 0h1m1 0h1m1 0h1m2 0h1m1 0h1m1 0h1m1 0h2m1 0h1m1 0h2m1 0h1m1 0h2m1 0h3m1 0h3m1 0h4m1 0h6m1 0h43m1 0h5m1 0h4m1 0h2m1 0h2m1 0h2m1 0h2m1 0h1m1 0h2m1 0h1m1 0h1m1 0h1m1 0h1m1 0h1m2 0h1m1 0h1M130 237.5h2m2 0h1m1 0h1m1 0h1m2 0h1m1 0h1m1 0h1m1 0h2m1 0h1m1 0h1m1 0h2m1 0h2m1 0h2m1 0h2m1 0h4m1 0h4m1 0h8m1 0h37m1 0h5m1 0h4m1 0h3m1 0h2m1 0h2m1 0h2m1 0h1m1 0h1m1 0h2m1 0h1m1 0h1m1 0h1m1 0h1m1 0h1m2 0h1" stroke="#c1c1c1" stroke-width="1" fill="none"/></svg></div><svg class="r" style="left:0;top:0" width="4859" height="2531" viewBox="0 0 4859 2531"><defs><clipPath id="rv"><rect x="2943" y="492" width="1386" height="1786"/></clipPath></defs><g clip-path="url(#rv)"><path d="M2556.3 238.3L1732.2 4459.0M2739.4 223.9L2212.8 4372.5M2920.8 209.6L2682.4 4288.0M3100.7 195.4L3141.2 4205.4M3278.9 181.3L3589.7 4124.7M3455.5 167.3L4028.2 4045.8M3630.5 153.5L4457.0 3968.7M3804.0 139.8L4876.4 3893.2M3976.0 126.2L5286.8 3819.3M4146.4 112.8L5688.4 3747.1M4315.4 99.4L6081.5 3676.3M4482.9 86.2L6466.4 3607.1M4648.9 73.1L6843.4 3539.2M2556.3 238.3L4648.9 73.1M2534.2 351.6L4712.5 173.5M2510.1 474.9L4781.5 282.4M2483.8 609.7L4856.5 400.9M2454.9 757.8L4938.4 530.2M2423.0 921.0L5028.1 672.0M2387.7 1102.0L5127.0 828.2M2348.3 1303.8L5236.4 1001.0M2304.1 1530.1L5358.1 1193.2M2254.2 1785.8L5494.3 1408.4M2197.3 2076.9L5647.9 1650.9M2132.0 2411.4L5822.2 1926.3M2056.2 2799.7L6021.8 2241.6M1967.1 3256.0L6252.8 2606.4M1860.9 3799.8L6523.0 3033.2" stroke="#a0a0a4" stroke-opacity="0.5" stroke-width="1.6" fill="none"/><path d="M2955.0 707.0L3871.0 627.0" stroke="#111" stroke-width="5.5" stroke-dasharray="6 10" stroke-dashoffset="0" fill="none"/><path d="M3871 627 L3911 785 L3965 959 L4046 1228 L4086 1390 L4153 1683" stroke="#111" stroke-width="6.5" stroke-dasharray="9 6" fill="none"/><path d="M4153.0 1683.0L3190.0 1796.0" stroke="#111" stroke-width="6.5" stroke-dasharray="10 5" stroke-dashoffset="0" fill="none"/><path d="M3171.0 1125.0L3186.0 1796.0" stroke="#111" stroke-width="6.5" stroke-dasharray="12 4" stroke-dashoffset="0" fill="none"/><path d="M2954.0 684.0L3888.0 620.0" stroke="#ff1010" stroke-width="5.5" stroke-dasharray="5.5 12" stroke-dashoffset="0" fill="none"/><path d="M3888 620 L3925 772 L3979 946 L4058 1212 L4098 1374 L4162 1655" stroke="#ff1010" stroke-width="5.5" stroke-dasharray="5.5 9" fill="none"/><path d="M4162.0 1655.0L3182.0 1783.0" stroke="#ff1010" stroke-width="5.5" stroke-dasharray="5.5 8" stroke-dashoffset="0" fill="none"/><path d="M3160.0 1112.0L3168.0 1786.0" stroke="#ff1010" stroke-width="5.5" stroke-dasharray="5.5 9" stroke-dashoffset="0" fill="none"/><path d="M3577.4 1369 L3577.4 1386 A58.4 51 0 0 0 3694.2 1386 L3694.2 1369 Z" fill="#000f78"/><ellipse cx="3635.8" cy="1369" rx="58.4" ry="50.4" fill="#1b1b1b"/><polygon points="3592.2,1347 3627,1322.8 3672.8,1333.6 3679.5,1392.6 3667.4,1400.7 3603,1406 3597.6,1395.3" fill="#494949"/><path d="M3601 1404 L3668 1399" stroke="#9a9a9a" stroke-width="4"/><path d="M3600.3 1172.5 L3613.7 1403.4" stroke="#131313" stroke-width="6"/><rect x="3601.4" y="1258.3" width="8" height="5" fill="#8a8a8a"/><rect x="3604.3" y="1307.4" width="8" height="5" fill="#8a8a8a"/><rect x="3606.9" y="1352.5" width="8" height="5" fill="#8a8a8a"/><path d="M3629.8 1164.4 L3630.3 1322.8" stroke="#131313" stroke-width="6"/><rect x="3626.0" y="1222.5" width="8" height="5" fill="#8a8a8a"/><rect x="3626.1" y="1256.1" width="8" height="5" fill="#8a8a8a"/><rect x="3626.2" y="1287.1" width="8" height="5" fill="#8a8a8a"/><path d="M3659.3 1164.4 L3667.4 1398.0" stroke="#131313" stroke-width="6"/><rect x="3658.4" y="1251.3" width="8" height="5" fill="#8a8a8a"/><rect x="3660.1" y="1300.9" width="8" height="5" fill="#8a8a8a"/><rect x="3661.7" y="1346.6" width="8" height="5" fill="#8a8a8a"/><polygon points="3589.5,1136 3667,1128.2 3668.7,1160 3591,1168.5" fill="#262626" stroke="#7c7c7c" stroke-width="2.5"/><path d="M3598 1140 L3617 1138 M3633 1136 L3658 1134" stroke="#555" stroke-width="2"/><rect x="3613" y="1150" width="26" height="8" fill="#3a3a3a" stroke="#777" stroke-width="1"/><path d="M3597 1166 L3664 1161" stroke="#a0a0a0" stroke-width="3"/><circle cx="3585.5" cy="1372.5" r="4.5" fill="#e00000"/></g></svg>
<div class="r" style="left:2251.0px;top:492.0px;width:661.0px;height:51.0px;background:#b8b8b8;"></div><div class="t" style="left:2286.5px;top:497.8px;font-size:38.0px;line-height:38.0px;color:#000;transform:scaleX(1.0255);">Displays</div><div class="r" style="left:2251px;top:543px;width:661px;height:1643px;background:#fff;border:1.5px solid #c4c4c4;border-top:none;box-sizing:border-box"></div><div class="r" style="left:2580.5px;top:543.0px;width:1.3px;height:1642.0px;background:#e2e2e2;"></div><div class="t" style="left:2328.4px;top:548.9px;font-size:38.5px;line-height:38.5px;color:#000;transform:scaleX(1.0511);">Global Opti…</div><svg class="r" style="left:2266.0px;top:562.5px" width="22" height="12"><path d="M0 0 L22 0 L11 12 Z" fill="#5a5a5a"/></svg><div class="t" style="left:2356.3px;top:596.8px;font-size:38.5px;line-height:38.5px;color:#000;">Fixed Frame</div><div class="t" style="left:2585.0px;top:596.8px;font-size:38.5px;line-height:38.5px;color:#000;transform:scaleX(1.0189);">map</div><div class="t" style="left:2356.3px;top:644.8px;font-size:38.5px;line-height:38.5px;color:#000;transform:scaleX(1.0211);">Backgrou…</div><div class="r" style="left:2587.0px;top:642.8px;width:42.0px;height:40.7px;background:#303030;border:1px solid #1a1a1a;box-sizing:border-box;"></div><div class="t" style="left:2633.4px;top:644.8px;font-size:38.5px;line-height:38.5px;color:#000;">48; 48; 48</div><div class="t" style="left:2356.3px;top:692.7px;font-size:38.5px;line-height:38.5px;color:#000;">Frame Rate</div><div class="t" style="left:2585.0px;top:692.7px;font-size:38.5px;line-height:38.5px;color:#000;transform:scaleX(0.9968);">30</div><div class="t" style="left:2356.3px;top:740.6px;font-size:38.5px;line-height:38.5px;color:#000;transform:scaleX(1.0598);">Default Li…</div><div class="r" style="left:2584.5px;top:742.2px;width:34px;height:34px;border:1.5px solid #c2c2c2;box-sizing:border-box;background:#fff;border-radius:2px"></div><svg class="r" style="left:2584.5px;top:742.2px" width="34" height="34"><path d="M8 17 L14 27 L26 7" stroke="#000" stroke-width="4" fill="none" stroke-linecap="square" stroke-linejoin="miter"/></svg><div class="t" style="left:2328.4px;top:788.6px;font-size:38.5px;line-height:38.5px;color:#000;transform:scaleX(1.0328);">Global Stat…</div><svg class="r" style="left:2266.0px;top:802.1px" width="22" height="12"><path d="M0 0 L22 0 L11 12 Z" fill="#5a5a5a"/></svg><div class="t" style="left:2378.8px;top:836.5px;font-size:38.5px;line-height:38.5px;color:#000;transform:scaleX(0.9755);">Fixed Fr…</div><div class="t" style="left:2585.0px;top:836.5px;font-size:38.5px;line-height:38.5px;color:#000;transform:scaleX(0.9743);">OK</div><div class="t" style="left:2328.4px;top:884.4px;font-size:38.5px;line-height:38.5px;color:#2a74c4;font-weight:bold;transform:scaleX(0.9796);">Grid</div><svg class="r" style="left:2271.0px;top:893.0px" width="12" height="22"><path d="M0 0 L12 11 L0 22 Z" fill="#5a5a5a"/></svg><div class="r" style="left:2584.5px;top:886.0px;width:34px;height:34px;border:1.5px solid #c2c2c2;box-sizing:border-box;background:#fff;border-radius:2px"></div><svg class="r" style="left:2584.5px;top:886.0px" width="34" height="34"><path d="M8 17 L14 27 L26 7" stroke="#2a6bb3" stroke-width="4" fill="none" stroke-linecap="square" stroke-linejoin="miter"/></svg><div class="t" style="left:2328.4px;top:932.3px;font-size:38.5px;line-height:38.5px;color:#2a74c4;font-weight:bold;transform:scaleX(1.0260);">Map</div><svg class="r" style="left:2266.0px;top:945.9px" width="22" height="12"><path d="M0 0 L22 0 L11 12 Z" fill="#5a5a5a"/></svg><div class="r" style="left:2584.5px;top:933.9px;width:34px;height:34px;border:1.5px solid #c2c2c2;box-sizing:border-box;background:#fff;border-radius:2px"></div><svg class="r" style="left:2584.5px;top:933.9px" width="34" height="34"><path d="M8 17 L14 27 L26 7" stroke="#2a6bb3" stroke-width="4" fill="none" stroke-linecap="square" stroke-linejoin="miter"/></svg><div class="t" style="left:2376.8px;top:980.3px;font-size:38.5px;line-height:38.5px;color:#000;transform:scaleX(1.0273);">Status: Ok</div><svg class="r" style="left:2321.0px;top:988.9px" width="12" height="22"><path d="M0 0 L12 11 L0 22 Z" fill="#5a5a5a"/></svg><div class="t" style="left:2356.5px;top:1028.2px;font-size:38.5px;line-height:38.5px;color:#000;transform:scaleX(1.0423);">Topic</div><div class="t" style="left:2585.0px;top:1028.2px;font-size:38.5px;line-height:38.5px;color:#000;transform:scaleX(1.0763);">/map</div><div class="t" style="left:2356.5px;top:1076.1px;font-size:38.5px;line-height:38.5px;color:#000;transform:scaleX(1.0278);">Alpha</div><div class="t" style="left:2585.0px;top:1076.1px;font-size:38.5px;line-height:38.5px;color:#000;transform:scaleX(0.9754);">0.7</div><div class="t" style="left:2356.5px;top:1124.1px;font-size:38.5px;line-height:38.5px;color:#000;transform:scaleX(0.9888);">Color Sch…</div><div class="t" style="left:2585.0px;top:1124.1px;font-size:38.5px;line-height:38.5px;color:#000;transform:scaleX(1.0149);">map</div><div class="t" style="left:2356.5px;top:1172.0px;font-size:38.5px;line-height:38.5px;color:#000;transform:scaleX(1.0129);">Draw Beh…</div><div class="r" style="left:2584.5px;top:1173.6px;width:34px;height:34px;border:1.5px solid #c2c2c2;box-sizing:border-box;background:#fff;border-radius:2px"></div><div class="t" style="left:2356.5px;top:1219.9px;font-size:38.5px;line-height:38.5px;color:#000;transform:scaleX(1.0527);">Resolution</div><div class="t" style="left:2585.0px;top:1219.9px;font-size:38.5px;line-height:38.5px;color:#000;transform:scaleX(1.0079);">0.025</div><div class="t" style="left:2356.5px;top:1267.9px;font-size:38.5px;line-height:38.5px;color:#000;transform:scaleX(1.0817);">Width</div><div class="t" style="left:2585.0px;top:1267.9px;font-size:38.5px;line-height:38.5px;color:#000;transform:scaleX(1.0215);">1024</div><div class="t" style="left:2356.5px;top:1315.8px;font-size:38.5px;line-height:38.5px;color:#000;transform:scaleX(1.0830);">Height</div><div class="t" style="left:2585.0px;top:1315.8px;font-size:38.5px;line-height:38.5px;color:#000;transform:scaleX(1.0215);">1024</div><div class="t" style="left:2356.5px;top:1363.7px;font-size:38.5px;line-height:38.5px;color:#000;transform:scaleX(1.0463);">Position</div><svg class="r" style="left:2321.0px;top:1372.3px" width="12" height="22"><path d="M0 0 L12 11 L0 22 Z" fill="#5a5a5a"/></svg><div class="t" style="left:2585.0px;top:1363.7px;font-size:38.5px;line-height:38.5px;color:#000;transform:scaleX(1.0056);">-12.812; -12.81…</div><div class="t" style="left:2356.5px;top:1411.6px;font-size:38.5px;line-height:38.5px;color:#000;transform:scaleX(1.1032);">Orientation</div><svg class="r" style="left:2321.0px;top:1420.2px" width="12" height="22"><path d="M0 0 L12 11 L0 22 Z" fill="#5a5a5a"/></svg><div class="t" style="left:2585.0px;top:1411.6px;font-size:38.5px;line-height:38.5px;color:#000;transform:scaleX(0.9468);">0; 0; 0; 1</div><div class="t" style="left:2356.5px;top:1459.6px;font-size:38.5px;line-height:38.5px;color:#000;transform:scaleX(1.0574);">Unreliable</div><div class="r" style="left:2584.5px;top:1461.2px;width:34px;height:34px;border:1.5px solid #c2c2c2;box-sizing:border-box;background:#fff;border-radius:2px"></div><div class="t" style="left:2356.5px;top:1507.5px;font-size:38.5px;line-height:38.5px;color:#000;">Use Time…</div><div class="r" style="left:2584.5px;top:1509.1px;width:34px;height:34px;border:1.5px solid #c2c2c2;box-sizing:border-box;background:#fff;border-radius:2px"></div><div class="t" style="left:2328.6px;top:1555.4px;font-size:38.5px;line-height:38.5px;color:#2a74c4;font-weight:bold;transform:scaleX(0.9702);">LaserScan</div><svg class="r" style="left:2271.0px;top:1564.0px" width="12" height="22"><path d="M0 0 L12 11 L0 22 Z" fill="#5a5a5a"/></svg><div class="r" style="left:2584.5px;top:1557.0px;width:34px;height:34px;border:1.5px solid #c2c2c2;box-sizing:border-box;background:#fff;border-radius:2px"></div><svg class="r" style="left:2584.5px;top:1557.0px" width="34" height="34"><path d="M8 17 L14 27 L26 7" stroke="#2a6bb3" stroke-width="4" fill="none" stroke-linecap="square" stroke-linejoin="miter"/></svg><div class="t" style="left:2328.6px;top:1603.4px;font-size:38.5px;line-height:38.5px;color:#2a74c4;font-weight:bold;transform:scaleX(1.0529);">RobotModel</div><svg class="r" style="left:2271.0px;top:1612.0px" width="12" height="22"><path d="M0 0 L12 11 L0 22 Z" fill="#5a5a5a"/></svg><div class="r" style="left:2584.5px;top:1605.0px;width:34px;height:34px;border:1.5px solid #c2c2c2;box-sizing:border-box;background:#fff;border-radius:2px"></div><svg class="r" style="left:2584.5px;top:1605.0px" width="34" height="34"><path d="M8 17 L14 27 L26 7" stroke="#2a6bb3" stroke-width="4" fill="none" stroke-linecap="square" stroke-linejoin="miter"/></svg><svg class="r" style="left:2304px;top:555px" width="18" height="18"><circle cx="9" cy="9" r="6.5" fill="none" stroke="#3d7bd0" stroke-width="3" stroke-dasharray="2.5 1.6"/><circle cx="9" cy="9" r="3" fill="#3d7bd0"/></svg><svg class="r" style="left:2304.0px;top:804.0px" width="16" height="14"><path d="M1.5 8 L5.5 12 L14.5 2" stroke="#1b8a1b" stroke-width="2.2" fill="none"/></svg><svg class="r" style="left:2354.0px;top:851.0px" width="16" height="14"><path d="M1.5 8 L5.5 12 L14.5 2" stroke="#1b8a1b" stroke-width="2.2" fill="none"/></svg><svg class="r" style="left:2354.0px;top:996.0px" width="16" height="14"><path d="M1.5 8 L5.5 12 L14.5 2" stroke="#1b8a1b" stroke-width="2.2" fill="none"/></svg><svg class="r" style="left:2303px;top:895px" width="20" height="14"><path d="M1 7 L10 1 L19 7 L10 13 Z M5.5 4 L14.5 10 M14.5 4 L5.5 10" stroke="#444" stroke-width="1.6" fill="none"/></svg><svg class="r" style="left:2304px;top:940px" width="18" height="18"><rect x="1" y="1" width="7" height="7" fill="#777"/><rect x="10" y="1" width="7" height="7" fill="#ccc"/><rect x="1" y="10" width="7" height="7" fill="#aaa"/><rect x="10" y="10" width="7" height="7" fill="#444"/></svg><svg class="r" style="left:2303px;top:1566px" width="20" height="14"><path d="M1 8 L5 8 L8 3 L11 11 L14 5 L19 8" stroke="#e02020" stroke-width="2.2" fill="none"/></svg><svg class="r" style="left:2304px;top:1612px" width="18" height="18"><rect x="5" y="1" width="8" height="6" fill="#333"/><rect x="3" y="8" width="12" height="5" fill="#555"/><rect x="2" y="14" width="14" height="3" fill="#222"/></svg><div class="r" style="left:2253.0px;top:2211.0px;width:91.0px;height:62.0px;border:1.5px solid #b9b9b9;border-radius:5px;box-sizing:border-box;background:linear-gradient(#fdfdfd,#eaeaea);"></div><div class="t" style="left:2262.7px;top:2224.0px;font-size:38.5px;line-height:38.5px;color:#000;transform:scaleX(1.0200);">Add</div><div class="r" style="left:2359.0px;top:2211.0px;width:191.0px;height:62.0px;border:1.5px solid #b9b9b9;border-radius:5px;box-sizing:border-box;background:linear-gradient(#fdfdfd,#eaeaea);"></div><div class="t" style="left:2369.0px;top:2224.0px;font-size:38.5px;line-height:38.5px;color:#b3b3b3;transform:scaleX(1.0651);">Duplicate</div><div class="r" style="left:2565.0px;top:2211.0px;width:164.0px;height:62.0px;border:1.5px solid #b9b9b9;border-radius:5px;box-sizing:border-box;background:linear-gradient(#fdfdfd,#eaeaea);"></div><div class="t" style="left:2574.7px;top:2224.0px;font-size:38.5px;line-height:38.5px;color:#b3b3b3;">Remove</div><div class="r" style="left:2744.0px;top:2211.0px;width:165.0px;height:62.0px;border:1.5px solid #b9b9b9;border-radius:5px;box-sizing:border-box;background:linear-gradient(#fdfdfd,#eaeaea);"></div><div class="t" style="left:2754.0px;top:2224.0px;font-size:38.5px;line-height:38.5px;color:#b3b3b3;transform:scaleX(0.9964);">Rename</div><svg class="r" style="left:2929px;top:1377px" width="10" height="16"><path d="M9 0 L1 8 L9 16 Z" fill="#555"/></svg><svg class="r" style="left:4331px;top:1377px" width="10" height="16"><path d="M1 0 L9 8 L1 16 Z" fill="#555"/></svg><div class="r" style="left:4360.0px;top:493.0px;width:465.0px;height:49.0px;background:#b8b8b8;"></div><div class="t" style="left:4396.0px;top:498.5px;font-size:38.0px;line-height:38.0px;color:#000;transform:scaleX(1.0427);">Views</div><div class="t" style="left:4363.0px;top:561.4px;font-size:38.5px;line-height:38.5px;color:#000;transform:scaleX(1.0092);">Type:</div><div class="r" style="left:4475px;top:552px;width:231px;height:54px;border:1.5px solid #bababa;border-radius:4px;box-sizing:border-box;background:linear-gradient(#fdfdfd,#ececec)"></div><div class="t" style="left:4481.4px;top:561.4px;font-size:38.5px;line-height:38.5px;color:#000;transform:scaleX(1.0521);">Orbit (rviz</div><svg class="r" style="left:4670.0px;top:571.5px" width="20" height="12"><path d="M0 0 L20 0 L10 12 Z" fill="#555"/></svg><div class="r" style="left:4722.0px;top:548.0px;width:100.0px;height:63.0px;border:1.5px solid #b9b9b9;border-radius:5px;box-sizing:border-box;background:linear-gradient(#fdfdfd,#eaeaea);"></div><div class="t" style="left:4731.0px;top:561.4px;font-size:38.5px;line-height:38.5px;color:#000;transform:scaleX(1.0364);">Zero</div><div class="r" style="left:4360px;top:628.5px;width:465px;height:1568.5px;background:#fff;border:1.5px solid #c4c4c4;border-right:none;box-sizing:border-box"></div><div class="r" style="left:4592.0px;top:630.0px;width:1.3px;height:1566.0px;background:#e2e2e2;"></div><div class="t" style="left:4415.6px;top:633.9px;font-size:38.5px;line-height:38.5px;color:#000;font-weight:bold;transform:scaleX(1.0056);">Curren…</div><svg class="r" style="left:4375.0px;top:647.5px" width="22" height="12"><path d="M0 0 L22 0 L11 12 Z" fill="#5a5a5a"/></svg><div class="t" style="left:4595.5px;top:633.9px;font-size:38.5px;line-height:38.5px;color:#000;font-weight:bold;transform:scaleX(1.0677);">Orbit (rviz)</div><div class="t" style="left:4464.7px;top:679.9px;font-size:38.5px;line-height:38.5px;color:#000;">Nea…</div><div class="t" style="left:4595.5px;top:679.9px;font-size:38.5px;line-height:38.5px;color:#000;transform:scaleX(0.9815);">0.01</div><div class="t" style="left:4464.7px;top:725.8px;font-size:38.5px;line-height:38.5px;color:#000;">Inve…</div><div class="r" style="left:4595.5px;top:727.4px;width:34px;height:34px;border:1.5px solid #c2c2c2;box-sizing:border-box;background:#fff;border-radius:2px"></div><div class="t" style="left:4464.7px;top:771.8px;font-size:38.5px;line-height:38.5px;color:#000;transform:scaleX(1.0284);">Targ…</div><div class="t" style="left:4595.5px;top:771.8px;font-size:38.5px;line-height:38.5px;color:#000;transform:scaleX(0.9911);">&lt;Fixed Fra…</div><div class="t" style="left:4464.7px;top:817.8px;font-size:38.5px;line-height:38.5px;color:#000;transform:scaleX(1.0409);">Dist…</div><div class="t" style="left:4595.5px;top:817.8px;font-size:38.5px;line-height:38.5px;color:#000;transform:scaleX(1.0275);">8.30858</div><div class="t" style="left:4464.7px;top:863.8px;font-size:38.5px;line-height:38.5px;color:#000;transform:scaleX(0.9665);">Foca…</div><div class="t" style="left:4595.5px;top:863.8px;font-size:38.5px;line-height:38.5px;color:#000;transform:scaleX(0.9949);">0.05</div><div class="t" style="left:4464.7px;top:909.7px;font-size:38.5px;line-height:38.5px;color:#000;transform:scaleX(0.9665);">Foca…</div><div class="r" style="left:4595.5px;top:911.3px;width:34px;height:34px;border:1.5px solid #c2c2c2;box-sizing:border-box;background:#fff;border-radius:2px"></div><svg class="r" style="left:4595.5px;top:911.3px" width="34" height="34"><path d="M8 17 L14 27 L26 7" stroke="#000" stroke-width="4" fill="none" stroke-linecap="square" stroke-linejoin="miter"/></svg><div class="t" style="left:4464.7px;top:955.7px;font-size:38.5px;line-height:38.5px;color:#000;">Yaw</div><div class="t" style="left:4595.5px;top:955.7px;font-size:38.5px;line-height:38.5px;color:#000;transform:scaleX(1.0275);">3.01357</div><div class="t" style="left:4464.7px;top:1001.7px;font-size:38.5px;line-height:38.5px;color:#000;transform:scaleX(1.0355);">Pitch</div><div class="t" style="left:4595.5px;top:1001.7px;font-size:38.5px;line-height:38.5px;color:#000;transform:scaleX(1.0186);">1.0554</div><div class="t" style="left:4464.7px;top:1047.6px;font-size:38.5px;line-height:38.5px;color:#000;transform:scaleX(1.0091);">Fiel…</div><div class="t" style="left:4595.5px;top:1047.6px;font-size:38.5px;line-height:38.5px;color:#000;transform:scaleX(1.0340);">0.785398</div><div class="t" style="left:4464.7px;top:1093.6px;font-size:38.5px;line-height:38.5px;color:#000;transform:scaleX(0.9665);">Foca…</div><svg class="r" style="left:4429.0px;top:1102.2px" width="12" height="22"><path d="M0 0 L12 11 L0 22 Z" fill="#5a5a5a"/></svg><div class="t" style="left:4595.5px;top:1093.6px;font-size:38.5px;line-height:38.5px;color:#000;transform:scaleX(0.9661);">0; 0; 0</div><div class="r" style="left:4362.0px;top:2213.0px;width:100.0px;height:62.0px;border:1.5px solid #b9b9b9;border-radius:5px;box-sizing:border-box;background:linear-gradient(#fdfdfd,#eaeaea);"></div><div class="t" style="left:4371.6px;top:2227.0px;font-size:38.5px;line-height:38.5px;color:#000;transform:scaleX(0.9273);">Save</div><div class="r" style="left:4478.0px;top:2213.0px;width:164.0px;height:62.0px;border:1.5px solid #b9b9b9;border-radius:5px;box-sizing:border-box;background:linear-gradient(#fdfdfd,#eaeaea);"></div><div class="t" style="left:4488.0px;top:2227.0px;font-size:38.5px;line-height:38.5px;color:#000;transform:scaleX(1.0041);">Remove</div><div class="r" style="left:4657.0px;top:2213.0px;width:165.0px;height:62.0px;border:1.5px solid #b9b9b9;border-radius:5px;box-sizing:border-box;background:linear-gradient(#fdfdfd,#eaeaea);"></div><div class="t" style="left:4667.0px;top:2227.0px;font-size:38.5px;line-height:38.5px;color:#000;transform:scaleX(0.9964);">Rename</div><div class="r" style="left:2251.0px;top:2293.0px;width:2574.0px;height:49.0px;background:#b6b6b6;"></div><svg class="r" style="left:2254px;top:2306px" width="20" height="20"><circle cx="10" cy="10" r="7.5" fill="#fff" stroke="#333" stroke-width="1.6"/><path d="M10 5 L10 10 L14 10" stroke="#333" stroke-width="1.5" fill="none"/></svg><div class="t" style="left:2287.0px;top:2299.8px;font-size:38.0px;line-height:38.0px;color:#000;transform:scaleX(1.0454);">Time</div><div class="r" style="left:2262.0px;top:2348.0px;width:169.0px;height:61.0px;border:1.5px solid #b9b9b9;border-radius:5px;box-sizing:border-box;background:linear-gradient(#fdfdfd,#eaeaea);"></div><div class="r" style="left:2273px;top:2360px;width:15px;height:38px;background:linear-gradient(90deg,#9a9d98,#e3e5e0);border:1px solid #8a8a8a;box-sizing:border-box"></div><div class="r" style="left:2294px;top:2360px;width:15px;height:38px;background:linear-gradient(90deg,#9a9d98,#e3e5e0);border:1px solid #8a8a8a;box-sizing:border-box"></div><div class="t" style="left:2313.0px;top:2360.4px;font-size:38.5px;line-height:38.5px;color:#000;transform:scaleX(0.9620);">Pause</div><div class="t" style="left:2456.6px;top:2360.4px;font-size:38.5px;line-height:38.5px;color:#000;transform:scaleX(1.0495);">Synchronization:</div><div class="r" style="left:2771px;top:2352px;width:287px;height:52px;border:1.5px solid #bababa;border-radius:4px;box-sizing:border-box;background:linear-gradient(#fdfdfd,#ececec)"></div><div class="t" style="left:2777.0px;top:2360.4px;font-size:38.5px;line-height:38.5px;color:#000;transform:scaleX(1.2003);">Off</div><svg class="r" style="left:3019.5px;top:2373.5px" width="21" height="11"><path d="M0 0 L21 0 L10 11 Z" fill="#555"/></svg><div class="r" style="left:2253.0px;top:2417.0px;width:129.0px;height:52.0px;border:1.5px solid #b9b9b9;border-radius:5px;box-sizing:border-box;background:linear-gradient(#fdfdfd,#eaeaea);"></div><div class="t" style="left:2267.0px;top:2426.4px;font-size:38.5px;line-height:38.5px;color:#000;transform:scaleX(1.0151);">Reset</div><div class="t" style="left:3084.4px;top:2360.1px;font-size:38.5px;line-height:38.5px;color:#000;transform:scaleX(0.9720);">ROS Time:</div><div class="r" style="left:3283.0px;top:2351.0px;width:194.0px;height:54.0px;border:1.5px solid #b4b4b4;box-sizing:border-box;background:#fff;"></div><div class="t" style="left:3288.0px;top:2360.1px;font-size:38.5px;line-height:38.5px;color:#000;transform:scaleX(1.0101);">277.51</div><div class="t" style="left:3493.0px;top:2360.1px;font-size:38.5px;line-height:38.5px;color:#000;transform:scaleX(0.9676);">ROS Elapsed:</div><div class="r" style="left:3744.0px;top:2351.0px;width:194.0px;height:54.0px;border:1.5px solid #b4b4b4;box-sizing:border-box;background:#fff;"></div><div class="t" style="left:3749.0px;top:2360.1px;font-size:38.5px;line-height:38.5px;color:#000;transform:scaleX(0.9882);">7.76</div><div class="t" style="left:3955.0px;top:2360.1px;font-size:38.5px;line-height:38.5px;color:#000;transform:scaleX(1.0378);">Wall Time:</div><div class="r" style="left:4156.0px;top:2351.0px;width:194.0px;height:54.0px;border:1.5px solid #b4b4b4;box-sizing:border-box;background:#fff;"></div><div class="t" style="left:4157.8px;top:2360.1px;font-size:38.5px;line-height:38.5px;color:#000;transform:scaleX(1.0445);">891196.10</div><div class="t" style="left:4366.0px;top:2360.1px;font-size:38.5px;line-height:38.5px;color:#000;transform:scaleX(1.0133);">Wall Elapsed:</div><div class="r" style="left:4619.0px;top:2351.0px;width:194.0px;height:54.0px;border:1.5px solid #b4b4b4;box-sizing:border-box;background:#fff;"></div><div class="t" style="left:4623.0px;top:2360.1px;font-size:38.5px;line-height:38.5px;color:#000;transform:scaleX(0.9962);">9.45</div><div class="t" style="left:4681.0px;top:2421.4px;font-size:38.5px;line-height:38.5px;color:#000;transform:scaleX(1.0390);">31 fps</div><svg class="r" style="left:2890px;top:504px" width="22" height="22"><rect x="0.5" y="0.5" width="21" height="21" rx="2" fill="#fafafa" stroke="#aaa"/><circle cx="11" cy="11" r="6.5" fill="#d0202a"/><path d="M8.5 8.5 L13.5 13.5 M13.5 8.5 L8.5 13.5" stroke="#fff" stroke-width="1.5"/></svg><svg class="r" style="left:4803px;top:505px" width="22" height="22"><rect x="0.5" y="0.5" width="21" height="21" rx="2" fill="#fafafa" stroke="#aaa"/><circle cx="11" cy="11" r="6.5" fill="#d0202a"/><path d="M8.5 8.5 L13.5 13.5 M13.5 8.5 L8.5 13.5" stroke="#fff" stroke-width="1.5"/></svg><svg class="r" style="left:4803px;top:2305px" width="22" height="22"><rect x="0.5" y="0.5" width="21" height="21" rx="2" fill="#fafafa" stroke="#aaa"/><circle cx="11" cy="11" r="6.5" fill="#d0202a"/><path d="M8.5 8.5 L13.5 13.5 M13.5 8.5 L8.5 13.5" stroke="#fff" stroke-width="1.5"/></svg><svg class="r" style="left:2254px;top:509px" width="20" height="20"><defs><linearGradient id="mon" x1="0" x2="1"><stop offset="0" stop-color="#e05050"/><stop offset="0.5" stop-color="#50c050"/><stop offset="1" stop-color="#5070e0"/></linearGradient></defs><rect x="1" y="1" width="17" height="12" fill="url(#mon)" stroke="#222" stroke-width="1.6"/><rect x="8" y="13.5" width="3" height="3" fill="#222"/><rect x="4" y="16.5" width="11" height="2" fill="#222"/></svg><svg class="r" style="left:4362px;top:508px" width="22" height="16"><rect x="6" y="3" width="14" height="10" rx="3" fill="#444"/><path d="M1 4 L6 8 L1 12 Z" fill="#444"/></svg>
<svg class="r" style="left:0;top:0" width="4859" height="200" viewBox="0 0 4859 200"><rect x="301.2" y="140" width="28.4" height="32.7" rx="6" fill="#434343" stroke="#3a3a3a"/><path d="M304.5 147.5 L319 153 L315.5 155.5 L326.5 163 L323.5 166.5 L313 158.5 L310.5 162 Z" fill="#d6d6d6"/><path d="M349.3 145.6 L353.8 150.5 L350.6 150.5 L350.6 155.3 L355.4 155.3 L355.4 152.2 L360.6 156.6 L355.4 161 L355.4 157.9 L350.6 157.9 L350.6 162.7 L353.8 162.7 L349.3 167.6 L344.8 162.7 L348 162.7 L348 157.9 L343.2 157.9 L343.2 161 L338 156.6 L343.2 152.2 L343.2 155.3 L348 155.3 L348 150.5 L344.8 150.5 Z" fill="#d6d6d6"/><path d="M374 160 A9.5 9.5 0 0 1 386 147.5" stroke="#d6d6d6" stroke-width="2.6" fill="none"/><path d="M384 143.5 L391 148 L384.5 152 Z" fill="#d6d6d6"/><path d="M391 153 A9.5 9.5 0 0 1 379 165.5" stroke="#d6d6d6" stroke-width="2.6" fill="none"/><path d="M381 169.5 L374 165 L380.5 161 Z" fill="#d6d6d6"/><path d="M404.5 167 L404.5 145.5 L418 145.5 M426.5 152 L426.5 167 L412 167" stroke="#d6d6d6" stroke-width="1.5" fill="none"/><path d="M407 164.5 L424.5 147" stroke="#d6d6d6" stroke-width="2.6"/><path d="M426.5 145 L426.5 153 L418.5 145 Z M404.5 167 L404.5 159 L412.5 167 Z" fill="#d6d6d6"/><rect x="439.5" y="144.3" width="2.2" height="24" fill="#f4f4f4"/><rect x="588.9" y="144.3" width="2.2" height="24" fill="#f4f4f4"/><rect x="704.7" y="144.3" width="2.2" height="24" fill="#f4f4f4"/><rect x="820.8" y="144.3" width="2.2" height="24" fill="#f4f4f4"/><rect x="903.9" y="144.3" width="2.2" height="24" fill="#f4f4f4"/><rect x="986.9" y="144.3" width="2.2" height="24" fill="#f4f4f4"/><path d="M476 166 C476 156 470 153 462 153 L462 149 L454 156 L462 163 L462 159 C468 159 472 160 476 166 Z" fill="#a3a3a3"/><path d="M520 166 C520 156 526 153 534 153 L534 149 L542 156 L534 163 L534 159 C528 159 524 160 520 166 Z" fill="#a3a3a3"/><path d="M495 153.6 L502 153.6 L498.5 158.3 Z M561 153.6 L568 153.6 L564.5 158.3 Z" fill="#a3a3a3"/><path d="M603 148 L608 145 L626 145.5 L626 164 L620.5 167.5 L603 167 Z" fill="#dcdcdc"/><path d="M603 148 L608 145 L626 145.5 L620.5 148.5 Z" fill="#ececec"/><path d="M620.5 148.5 L626 145.5 L626 164 L620.5 167.5 Z" fill="#c4c4c4"/><defs><radialGradient id="sph" cx="0.35" cy="0.3" r="0.7"><stop offset="0" stop-color="#f2f2f2"/><stop offset="1" stop-color="#b4b4b4"/></radialGradient><linearGradient id="cyl" x1="0" x2="1"><stop offset="0" stop-color="#e6e6e6"/><stop offset="1" stop-color="#c2c2c2"/></linearGradient></defs><circle cx="647.6" cy="156.3" r="11.6" fill="url(#sph)"/><path d="M670 147 L670 165 A11 3.5 0 0 0 692 165 L692 147 Z" fill="url(#cyl)"/><ellipse cx="681" cy="147" rx="11" ry="3.5" fill="#efefef"/><circle cx="730.3" cy="156" r="5.5" fill="#d6d6d6"/><path d="M738.3 156.0L740.8 156.0M736.0 161.7L737.7 163.4M730.3 164.0L730.3 166.5M724.6 161.7L722.9 163.4M722.3 156.0L719.8 156.0M724.6 150.3L722.9 148.6M730.3 148.0L730.3 145.5M736.0 150.3L737.7 148.6" stroke="#d6d6d6" stroke-width="2.2"/><circle cx="757.5" cy="151.5" r="5.5" fill="#d6d6d6"/><path d="M762 151.5 L774 153 M761 154 L772 160 M759 157 L765 165" stroke="#d6d6d6" stroke-width="1.3"/><path d="M801 147 L787 157 M800 158 L786 168 M807 155 L793 165" stroke="#d6d6d6" stroke-width="2"/><path d="M838.5 147 L848 147 L851 150 L851 166 L838.5 166 Z M843 151 L853 151 L856 154 L856 167 L843 167 Z" fill="#a0a0a0" stroke="#979797" stroke-width="0.8"/><rect x="869" y="148" width="14" height="18" rx="1.5" fill="none" stroke="#a0a0a0" stroke-width="1"/><path d="M877 152 L886 152 L889 155 L889 168 L877 168 Z" fill="#a0a0a0"/><rect x="920.5" y="147" width="3" height="20" fill="#d6d6d6"/><rect x="924" y="150" width="9" height="4.5" fill="#d6d6d6"/><rect x="924" y="156.5" width="13" height="4.5" fill="#d6d6d6"/><path d="M934 162 L943 162 L938.5 168 Z" fill="#d6d6d6"/><path d="M954 166 L954 158 A8.5 8.5 0 0 1 971 158 L971 166 L966.5 166 L966.5 158 A4 4 0 0 0 958.5 158 L958.5 166 Z" fill="#c8c8c8"/><path d="M1005 149 L1010 145 L1023 145 L1023 158 L1017 163" stroke="#d0d0d0" stroke-width="1" fill="none"/><rect x="1001.7" y="152.5" width="14.5" height="14.8" fill="#f5821f"/><path d="M1021.8 161.6 L1033.3 161.6 L1027.5 168.8 Z" fill="#d6d6d6"/></svg><svg class="r" style="left:0;top:0" width="4859" height="520" viewBox="0 0 4859 520"><path d="M2269 432 L2269 462" stroke="#c8c8c8" stroke-width="2" stroke-dasharray="1.5 2.5"/><path d="M2291 461 L2288 452 C2287 449 2290 448 2292 450 L2292 440 C2292 437 2295.5 437 2295.5 440 L2295.5 447 L2301 447 C2303 447 2303.5 449 2303.5 451 L2303 458 L2301 461 Z" fill="#fff" stroke="#222" stroke-width="1.4"/><path d="M2502 440 L2502 456 M2494 448 L2510 448 M2499 443 L2502 440 L2505 443 M2499 453 L2502 456 L2505 453 M2497 445 L2494 448 L2497 451 M2507 445 L2510 448 L2507 451" stroke="#555" stroke-width="1.4" fill="none"/><rect x="2790" y="441" width="15" height="14" fill="#f9f2b0" stroke="#444" stroke-width="1" stroke-dasharray="2 1.5"/><circle cx="2980.5" cy="448" r="5.5" fill="none" stroke="#666" stroke-width="1.3"/><path d="M2973 448 L2988 448 M2980.5 440.5 L2980.5 455.5" stroke="#666" stroke-width="1.3"/><rect x="3270" y="445" width="15" height="6" fill="#e8d890" stroke="#666" stroke-width="1"/><path d="M3491 456 L3504 446" stroke="#22cc22" stroke-width="2.6"/><path d="M3500 444 L3505 445 L3503 450 Z" fill="#118811"/><path d="M3842 456 L3855 446" stroke="#dd22dd" stroke-width="2.6"/><path d="M3851 444 L3856 445 L3854 450 Z" fill="#991199"/><path d="M4123 455 C4119 449 4118 446 4118 444 A5 5 0 0 1 4128 444 C4128 446 4127 449 4123 455 Z" fill="#c8502a"/><circle cx="4123" cy="444" r="1.8" fill="#fff"/><path d="M4449.5 448 L4456.5 448 M4453 444.5 L4453 451.5" stroke="#3b6fc8" stroke-width="2.4"/><rect x="4513" y="446.5" width="12" height="3.5" fill="#6f9be0" stroke="#3b6fc8" stroke-width="1"/><path d="M4530 462 L4544 462 L4537 470 Z" fill="#555"/><path d="M4582 448 C4586 443 4594 443 4598 448 C4594 453 4586 453 4582 448 Z" fill="#fff" stroke="#666" stroke-width="1"/><circle cx="4590" cy="448" r="2.8" fill="#3b4fa0"/><path d="M4600 462 L4614 462 L4607 470 Z" fill="#555"/></svg>
</body></html>
